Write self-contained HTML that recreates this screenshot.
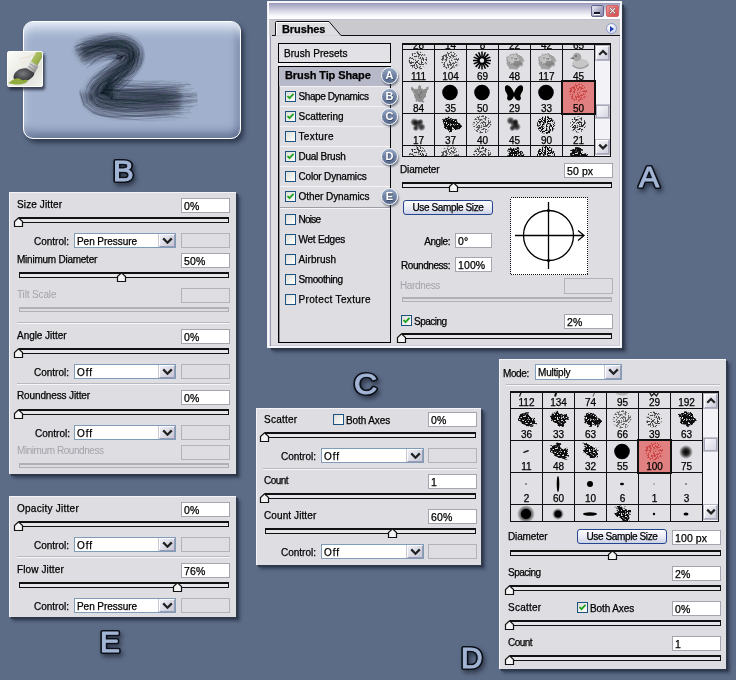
<!DOCTYPE html><html><head><meta charset="utf-8"><title>Brushes</title><style>
*{box-sizing:border-box;margin:0;padding:0}
html,body{width:736px;height:680px;overflow:hidden}
body{background:#5c6b86;font-family:"Liberation Sans",sans-serif;font-size:10px;letter-spacing:-0.1px;color:#000;position:relative;-webkit-text-stroke:.25px #000}
.abs,.panel,.lbl,.inp,.sel,.dis,.trk,.dtrk,.thumb,.cb,.sep,.btn,.big,.grid,.cell,.row{position:absolute}
.panel{background:#dddde2;box-shadow:2px 2px 1px #2f394c,4px 4px 3px rgba(35,45,65,.65);border-top:1px solid #f4f4f8;border-left:1px solid #f4f4f8}
.lbl{white-space:nowrap;line-height:12px;height:12px}
.lbl.r{text-align:right}
.lbl.g{color:#a3a3aa;-webkit-text-stroke:0}
.inp{background:#fff;border:1px solid #a5a5ad;line-height:14px;padding-left:2px;font-size:10.5px;letter-spacing:.1px;white-space:nowrap;overflow:hidden}
.sel{background:#fff;border:1px solid #7f9db9;line-height:14px;padding-left:2px;padding-top:1px;white-space:nowrap;overflow:hidden}
.sel i{position:absolute;right:0;top:0;bottom:0;width:16px;background:linear-gradient(135deg,#f0f0f7,#c6c6d6);border:1px solid #9a9ab2;border-top-color:#fdfdff;border-left-color:#fdfdff;box-shadow:-1px 0 0 #c8c8d4}
.sel i svg{position:absolute;left:1.5px;top:2px}
.dis{border:1px solid #b3b3ba;background:#dddde2}
.trk{height:6px;background:#e6e6ea;border:1px solid #111;border-top-width:2px}
.dtrk{height:5px;background:#dcdce0;border:1px solid #b0b0b6;border-top-width:2px}
.sep{height:2px;border-top:1px solid #b9b9c0;border-bottom:1px solid #f6f6fa}
.cb{width:11px;height:11px;border:1px solid #1c5180;background:linear-gradient(135deg,#dcdcd7,#fff)}
.btn{border:1px solid #24468f;border-radius:3px;background:linear-gradient(#fff,#e6e8f4 60%,#cdd2e6);text-align:center;line-height:12px;white-space:nowrap}
.big{font-weight:bold;font-size:28px;letter-spacing:0;line-height:28px;color:#9eafcd;-webkit-text-stroke:2.4px #1e2636;transform:scaleX(1.08);transform-origin:0 0;paint-order:stroke fill;text-shadow:2px 3px 3px rgba(20,28,45,.75)}
.grid{background:#111;overflow:hidden}
.cell{background:#e1e1e5;width:31px;height:31px;overflow:hidden}
.cell b{position:absolute;left:0;right:0;bottom:-1px;text-align:center;font-weight:normal;line-height:11px;height:11px;letter-spacing:0}
.cell svg{position:absolute;left:0;top:0}
.gd .cell b{bottom:0}
.cell.s{background:#e18080;outline:2px solid #111;z-index:2}
.row{left:0;height:20px;border-top:1px solid #f3f3f7;background:#dddde2}
.row .cb{left:5px;top:4px}
.row span{position:absolute;left:18.5px;top:4px;line-height:12px;white-space:nowrap}
.circ{-webkit-text-stroke:0;position:absolute;width:17px;height:17px;border-radius:50%;background:linear-gradient(#98a9c4,#7587a8 45%,#566a8e);border:1px solid #f3f5f9;color:#fff;font-weight:bold;font-size:11px;line-height:15px;text-align:center;letter-spacing:0;box-shadow:1px 2px 2px rgba(40,50,70,.55);text-shadow:.5px 1px 1px #33425f}
</style></head><body><div id="root" style="position:absolute;left:0;top:0;width:736px;height:680px;will-change:transform">
<svg width="0" height="0" style="position:absolute"><defs><radialGradient id="sg"><stop offset="0" stop-color="#000"/><stop offset=".45" stop-color="#000" stop-opacity=".8"/><stop offset="1" stop-color="#000" stop-opacity="0"/></radialGradient><filter id="sp1" x="0" y="0" width="31" height="31" filterUnits="userSpaceOnUse"><feTurbulence type="fractalNoise" baseFrequency="0.6" numOctaves="2" seed="2" result="n"/><feColorMatrix in="n" type="matrix" values="0 0 0 0 0 0 0 0 0 0 0 0 0 0 0 0 0 0 -14 6.9" result="t"/><feComposite in="SourceGraphic" in2="t" operator="in"/></filter><filter id="sp2" x="0" y="0" width="31" height="31" filterUnits="userSpaceOnUse"><feTurbulence type="fractalNoise" baseFrequency="0.65" numOctaves="2" seed="7" result="n"/><feColorMatrix in="n" type="matrix" values="0 0 0 0 0 0 0 0 0 0 0 0 0 0 0 0 0 0 -14 7.1" result="t"/><feComposite in="SourceGraphic" in2="t" operator="in"/></filter><filter id="sp3" x="0" y="0" width="31" height="31" filterUnits="userSpaceOnUse"><feTurbulence type="fractalNoise" baseFrequency="0.55" numOctaves="2" seed="11" result="n"/><feColorMatrix in="n" type="matrix" values="0 0 0 0 0 0 0 0 0 0 0 0 0 0 0 0 0 0 -12 6.1" result="t"/><feComposite in="SourceGraphic" in2="t" operator="in"/></filter><filter id="sp4" x="0" y="0" width="31" height="31" filterUnits="userSpaceOnUse"><feTurbulence type="fractalNoise" baseFrequency="0.7" numOctaves="2" seed="4" result="n"/><feColorMatrix in="n" type="matrix" values="0 0 0 0 0 0 0 0 0 0 0 0 0 0 0 0 0 0 -14 7.6" result="t"/><feComposite in="SourceGraphic" in2="t" operator="in"/></filter><filter id="sp5" x="0" y="0" width="31" height="31" filterUnits="userSpaceOnUse"><feTurbulence type="fractalNoise" baseFrequency="0.6" numOctaves="2" seed="9" result="n"/><feColorMatrix in="n" type="matrix" values="0 0 0 0 0 0 0 0 0 0 0 0 0 0 0 0 0 0 -14 6.0" result="t"/><feComposite in="SourceGraphic" in2="t" operator="in"/></filter><filter id="rg1" x="0" y="0" width="31" height="31" filterUnits="userSpaceOnUse"><feTurbulence type="fractalNoise" baseFrequency=".22" numOctaves="2" seed="3" result="w"/><feDisplacementMap in="SourceGraphic" in2="w" scale="6" xChannelSelector="R" yChannelSelector="G" result="d"/><feTurbulence type="fractalNoise" baseFrequency=".7" numOctaves="1" seed="8" result="n"/><feColorMatrix in="n" type="matrix" values="0 0 0 0 0 0 0 0 0 0 0 0 0 0 0 0 0 0 -10 6.6" result="t"/><feComposite in="d" in2="t" operator="in"/></filter><filter id="rg2" x="0" y="0" width="31" height="31" filterUnits="userSpaceOnUse"><feTurbulence type="fractalNoise" baseFrequency=".22" numOctaves="2" seed="8" result="w"/><feDisplacementMap in="SourceGraphic" in2="w" scale="7" xChannelSelector="R" yChannelSelector="G" result="d"/><feTurbulence type="fractalNoise" baseFrequency=".7" numOctaves="1" seed="13" result="n"/><feColorMatrix in="n" type="matrix" values="0 0 0 0 0 0 0 0 0 0 0 0 0 0 0 0 0 0 -10 6.6" result="t"/><feComposite in="d" in2="t" operator="in"/></filter><filter id="rg3" x="0" y="0" width="31" height="31" filterUnits="userSpaceOnUse"><feTurbulence type="fractalNoise" baseFrequency=".22" numOctaves="2" seed="14" result="w"/><feDisplacementMap in="SourceGraphic" in2="w" scale="5" xChannelSelector="R" yChannelSelector="G" result="d"/><feTurbulence type="fractalNoise" baseFrequency=".7" numOctaves="1" seed="19" result="n"/><feColorMatrix in="n" type="matrix" values="0 0 0 0 0 0 0 0 0 0 0 0 0 0 0 0 0 0 -10 6.6" result="t"/><feComposite in="d" in2="t" operator="in"/></filter><filter id="wob" x="0" y="0" width="31" height="31" filterUnits="userSpaceOnUse"><feTurbulence type="fractalNoise" baseFrequency=".3" numOctaves="2" seed="5" result="w"/><feDisplacementMap in="SourceGraphic" in2="w" scale="3.5" xChannelSelector="R" yChannelSelector="G"/></filter></defs></svg>
<div class="abs" style="left:23px;top:21px;width:218px;height:118px;border-radius:10px;border:1px solid #fff;background:#a1b1cd;box-shadow:3px 4px 4px rgba(30,40,60,.7),inset 0 13px 11px -6px rgba(235,242,252,.85),inset 0 4px 4px -2px rgba(240,245,253,.5),inset 0 -9px 8px -3px rgba(70,85,118,.6),inset 6px 0 6px -3px rgba(200,212,235,.7),inset -7px 0 7px -3px rgba(95,110,145,.5)"></div>
<svg class="abs" style="left:0;top:0" width="260" height="150" viewBox="0 0 260 150"><defs><filter id="bl" filterUnits="userSpaceOnUse" x="0" y="0" width="260" height="150"><feGaussianBlur stdDeviation=".4"/></filter><filter id="bl3" filterUnits="userSpaceOnUse" x="0" y="0" width="260" height="150"><feGaussianBlur stdDeviation="2.2"/></filter><mask id="sm" maskUnits="userSpaceOnUse" x="0" y="0" width="260" height="150"><g fill="none" stroke="#fff" stroke-linejoin="round" filter="url(#bl3)"><path d="M78 57C90 49 108 45 121 47C133 49 134 58 126 66C118 74 100 84 97 93" stroke-width="27"/><path d="M97 93C96 103 140 101 197 99l6 0" stroke-width="39"/><path d="M74 42L92 46 92 64 74 72Z" fill="#fff" stroke="none"/></g></mask></defs><g fill="none" stroke="#27303d" stroke-opacity=".33" stroke-linejoin="round" filter="url(#bl3)"><path d="M78 57C90 49 108 45 121 47C133 49 134 58 126 66C118 74 100 84 97 93" stroke-width="16"/><path d="M97 93C96 103 135 101 180 99.5" stroke-width="24"/></g><g mask="url(#sm)"><g fill="none" stroke="#10151e" stroke-opacity=".115" stroke-width=".8" stroke-linecap="round" stroke-linejoin="round" filter="url(#bl)"><path d="M83.4 56.3L85.3 55.0L88.7 53.7L92.5 53.0L95.8 51.0L99.5 49.8L103.0 47.9L106.7 46.9L110.4 45.5L114.1 45.7L117.7 46.1L121.1 46.5L123.7 48.0L125.7 49.4L127.3 50.5L127.7 52.5L128.3 53.6L129.1 54.7L129.9 56.0L129.4 57.6L129.9 59.8L129.2 61.9L128.1 64.2L126.5 66.5L124.1 68.4L121.7 70.6L118.3 72.0L115.1 73.9L111.4 75.3L108.1 77.2L105.5 80.0L102.8 82.4L100.5 85.0L98.2 87.3L97.6 90.5L96.9 93.0L98.2 94.8L100.4 96.5L104.4 97.8L109.9 99.1L116.8 100.6L125.2 101.7L134.8 102.8L145.6 103.0L157.3 103.3L169.8 102.7L183.1 102.0L197.1 100.6L197.0 99.9"/><path d="M110.5 70.2L108.2 71.1L104.8 73.1L101.3 75.0L97.8 76.9L93.6 78.4L90.0 80.9L87.6 84.7L83.9 91.9L87.5 103.0L93.8 107.5"/><path d="M79.4 49.6L82.4 49.1L86.5 48.2L90.4 47.1L94.7 47.1L98.6 46.1L102.6 45.5L106.6 45.5L110.3 44.2L114.1 43.7L117.9 43.3L121.6 43.3L125.2 43.1L128.4 43.9L130.6 46.2L132.9 48.1L133.4 51.1L133.6 53.7L133.7 56.1L132.8 58.4L131.7 60.5L130.5 62.7L129.2 65.1L127.7 67.7L125.9 70.4L123.5 72.8L121.2 75.8L118.5 78.4L115.3 80.4L112.6 82.9L109.5 84.7L106.1 86.0L103.8 88.1L101.6 90.0L100.6 92.2L99.8 93.2L100.1 93.4L102.0 93.1L105.3 94.0L110.5 94.3L117.3 93.8L125.4 94.5L134.9 94.5L145.4 95.0L157.1 95.0L169.6 95.7L182.9 96.0L196.9 95.3L196.9 95.4"/><path d="M93.7 61.9L95.3 61.2L98.5 60.3L101.8 59.7L105.0 59.5L108.2 59.1L111.2 59.1L114.1 59.3L116.8 58.3L119.1 58.5L120.6 58.2L121.7 57.5L122.3 57.2L122.0 57.4L122.1 56.7L121.5 56.3L120.6 55.8L119.7 55.4L119.6 55.4L118.8 55.6L118.1 56.2L116.8 56.9L115.8 59.0L113.8 60.9L112.1 64.0L109.6 66.6L106.6 68.9L103.1 70.9L99.9 73.2L96.4 75.4L92.7 77.5L88.5 79.7L85.1 83.3L80.5 91.6L83.9 105.8L92.6 112.4L100.1 114.9L107.6 116.2L115.8 116.1L124.8 116.0L134.8 115.2L145.7 114.7L157.6 114.8L170.2 115.3L173.6 114.8"/><path d="M79.6 51.5L83.0 50.4L86.9 49.3L90.6 47.5L94.6 46.6L98.4 45.2L102.2 43.2L106.2 42.5L110.2 41.7L114.2 41.1L118.1 41.1L121.9 41.7L125.2 43.1L127.9 44.8L130.2 46.8L131.4 49.4L132.8 51.4L133.1 53.8L134.4 56.1L133.8 58.6L133.8 61.4L132.9 64.2L131.6 67.0L129.7 69.6L127.4 72.1L124.8 74.5L121.2 75.8L118.1 77.9L117.5 78.1"/><path d="M85.4 59.0L86.7 58.1L90.2 57.1L93.4 55.7L97.1 55.3L100.5 54.4L104.1 53.9L107.6 54.1L110.9 54.2L114.1 53.3L117.1 53.6L119.9 53.4L122.1 53.0L123.9 53.0L125.7 52.7L126.2 53.8L126.2 54.7L126.7 55.2L125.9 56.0L125.1 56.6L124.0 57.3L123.1 58.2L122.1 59.4L120.7 60.8L119.7 63.4L117.8 65.8L115.5 68.4L113.0 71.1L110.2 73.7L106.6 75.2L103.3 77.4L100.5 79.9L96.9 81.5L93.8 83.8L90.8 86.6L88.0 92.2L89.9 101.2L95.8 105.8L102.0 107.3L108.7 107.7L116.3 107.8L125.1 107.4L134.8 107.6L145.6 107.5L157.4 107.2L161.1 106.9"/><path d="M85.2 55.0L85.2 54.9L88.7 53.6L92.4 52.8L96.1 52.0L99.9 51.8L103.6 51.4L107.2 51.0L110.7 51.0L114.1 50.9L117.4 49.9L120.5 49.9L123.1 49.8L125.2 50.4L126.9 51.1L128.6 51.8L128.7 53.4L128.8 54.7L128.8 56.0L127.7 57.2L127.0 58.5L125.3 59.5L124.2 61.1L122.8 62.8L121.2 65.1L119.3 67.7L117.0 70.4L114.5 73.2L112.0 76.1L108.7 78.0L105.9 80.5L102.7 82.2L99.1 83.7L96.8 86.2L94.2 88.5L92.1 92.6L93.0 98.8L97.9 101.6L103.1 102.8L109.2 104.0L116.7 103.3L125.2 103.8L134.8 103.4L145.6 103.4L157.3 103.6L169.1 103.3"/><path d="M81.4 61.8L84.2 60.5L87.3 59.2L90.2 57.2L93.7 56.6L97.3 56.2L100.9 55.8L104.2 54.6L107.6 54.0L110.9 53.4L114.1 53.1L117.2 52.7L120.2 52.0L122.5 51.9L124.3 52.3L125.5 53.0L125.9 54.0L126.1 54.7L125.2 55.5L124.1 55.9L124.1 56.4L123.2 57.0L123.2 58.3L122.1 59.4L121.2 61.3L119.9 63.6L118.1 66.2L115.7 68.7L112.9 71.0L109.7 73.0L106.8 75.5L103.3 77.3L99.3 78.6L95.7 80.4L92.9 83.1L90.2 86.2L87.4 92.2L90.5 100.7L96.2 105.0L102.2 106.4L108.8 107.2L116.4 107.1L125.1 107.2L134.8 107.8L145.6 108.4L157.4 108.0L170.0 108.8L177.1 108.6"/><path d="M83.7 62.2L84.7 61.4L87.2 59.0L90.2 57.2L93.0 54.6L96.7 53.9L100.1 52.3L103.7 51.9L107.3 51.8L110.8 52.6L114.1 53.1L117.1 53.5L119.9 53.9L121.7 54.4L123.1 54.7L124.5 54.3L125.3 54.5L126.0 54.8L127.1 55.1L127.6 56.0L127.4 57.1L126.1 58.2L124.8 59.3L123.0 60.1L121.2 61.3L119.5 63.1L117.1 65.0L114.5 67.1L111.9 69.7L108.9 72.0L106.1 74.6L103.3 77.3L101.0 80.4L97.9 82.5L95.6 85.3L92.9 87.8L89.9 92.4L91.8 99.8L96.4 104.5L101.9 107.8L108.6 108.6L116.2 109.3L125.0 109.5L134.8 109.1L145.6 107.6L157.4 107.0L169.9 106.3L178.7 105.9"/><path d="M79.0 44.2L79.9 43.9L84.2 42.6L88.3 41.0L93.0 41.2L97.5 41.1L101.7 40.5L106.1 41.4L110.1 40.9L114.2 41.3L118.1 41.2L122.0 40.7L125.7 41.3L129.3 41.9L132.7 43.4L136.1 45.3L138.0 48.8L138.8 52.6L139.0 56.2L138.0 59.6L136.7 62.7L134.4 65.1L132.3 67.6L129.8 69.7L127.5 72.2L125.1 74.9L122.9 78.0L120.1 80.5L117.5 83.3L115.4 86.4L112.6 88.4L110.4 90.7L108.7 92.8L107.0 93.3"/><path d="M84.9 57.5L86.0 56.4L89.0 54.3L92.6 53.2L96.1 52.1L99.8 51.2L103.6 51.1L107.2 50.9L110.8 51.1L114.1 51.6L117.2 52.4L120.2 51.7L122.4 52.3L124.4 52.1L125.7 52.7L127.4 52.8L128.4 53.5L128.9 54.7L128.8 56.0L127.9 57.3L127.3 58.7L125.4 59.6L124.4 61.2L122.4 62.5L120.5 64.3L118.2 66.4L115.4 68.3L112.9 71.1L110.7 74.3L107.9 77.0L105.0 79.4L102.0 81.5L99.2 83.7L96.5 86.0L94.0 88.4L91.9 92.6L92.8 99.0L97.2 103.0L102.5 105.4L108.9 106.4L116.4 106.3L125.1 106.1L134.8 106.1L145.6 104.6L157.3 104.7L169.9 104.3L173.9 104.2"/><path d="M86.1 60.3L87.4 59.4L90.8 58.7L93.9 57.0L97.2 55.6L100.5 54.2L103.7 51.9L107.3 51.4L110.7 50.3L114.1 49.7L117.4 49.7L120.5 50.2L122.8 51.0L124.1 52.6L125.1 53.5L125.0 54.8L124.7 55.4L124.9 55.6L125.1 55.9L125.1 56.6L125.4 57.9L126.0 60.0L124.8 61.6L123.7 63.7L122.1 66.1L119.3 67.7L116.3 69.5L113.1 71.3L109.4 72.6L105.6 74.0L102.6 76.5L99.1 78.4L96.5 81.2L94.7 84.5L92.3 87.4L91.2 92.5L93.1 98.8L97.7 101.9L102.9 103.8L109.1 104.7L116.4 106.4L125.0 107.6L134.8 108.4L145.6 108.5L157.4 108.9L170.0 108.3L173.6 107.8"/><path d="M80.7 58.5L82.4 57.3L85.1 54.8L88.5 53.2L92.2 52.1L95.8 51.0L99.6 50.3L103.5 50.8L107.2 50.8L110.7 50.5L114.1 50.6L117.4 50.7L120.4 50.6L123.0 50.2L125.3 50.1L127.2 50.7L128.3 52.0L129.8 52.9L129.9 54.5L129.8 56.0L129.0 57.5L127.8 58.9L126.2 60.1L124.9 61.6L123.3 63.4L121.4 65.3L119.3 67.6L116.7 70.0L114.5 73.2L111.9 75.9L108.9 78.2L106.0 80.5L102.9 82.4L100.4 84.9L97.4 86.7L94.8 88.9L92.9 92.7L93.2 98.6L97.9 101.6L103.0 103.1L109.2 104.1L116.6 103.8L125.2 104.0L134.8 103.2L145.5 102.5L157.2 102.1L169.8 102.6L173.2 102.1"/><path d="M82.4 56.8L85.4 55.3L88.5 53.0L91.7 50.7L95.2 48.6L99.0 47.8L102.9 47.1L106.7 46.3L110.4 45.8L114.1 46.4L117.6 47.3L120.8 48.4L123.3 49.3L125.3 50.2L126.6 51.5L127.8 52.4L129.7 52.9L130.2 54.4L131.5 56.1L131.4 58.1L130.7 60.1L129.5 62.1L128.4 64.4L125.9 65.9L123.0 67.1L119.9 68.4L117.4 70.9L114.3 72.9L111.1 74.8L108.8 78.1L106.1 80.7L104.9 82.4"/><path d="M81.4 44.6L84.3 42.9L88.7 41.9L93.0 41.2L97.6 41.6L101.9 41.5L106.1 41.3L110.2 41.2L114.2 41.7L118.0 41.5L121.9 41.6L125.7 41.4L129.2 42.1L132.8 43.2L135.4 45.9L138.1 48.7L138.8 52.6L138.3 56.2L137.3 59.4L136.2 62.4L134.1 64.9L131.5 66.9L129.4 69.4L127.0 71.7L124.7 74.3L122.5 77.5L119.7 79.9L117.2 82.8L115.0 85.9L112.5 88.3L110.4 90.6L108.0 92.2L105.8 93.3L105.3 94.9L104.6 93.6L104.0 90.4L103.7 89.6L106.1 90.6L111.0 90.5L117.5 90.2L125.6 90.0L134.9 90.0L145.4 89.5L156.9 88.7L163.5 88.8"/><path d="M98.6 36.4L101.0 36.4L105.4 35.4L109.7 34.1L114.2 33.2L118.7 32.6L123.3 33.3L128.1 33.4L132.7 35.1L136.2 38.7L140.1 42.0L141.7 47.0L143.4 51.6L142.9 56.3L142.3 60.6L140.5 64.2L139.1 68.0L137.3 71.6L135.0 74.9L132.6 78.0L130.3 81.3L127.3 83.7L124.4 86.2L121.5 88.5L118.3 90.2L115.9 92.3L113.5 94.0L112.2 96.2L111.1 97.4L111.3 98.4L112.9 94.3L111.8 84.5L108.4 80.1L108.9 79.4L112.5 79.0L118.3 79.8L125.8 80.3L134.9 80.4L145.2 81.1L156.7 81.6L169.1 81.5L171.8 81.7"/><path d="M82.8 63.2L85.2 62.2L88.2 61.2L91.2 59.8L94.5 58.9L97.6 57.2L100.8 55.6L104.2 54.6L107.5 53.3L110.8 52.4L114.1 51.3L117.3 51.4L120.3 51.4L122.2 52.8L123.5 53.8L124.4 54.4L123.9 55.7L124.1 55.7L123.9 55.8L123.3 55.9L124.0 56.4L124.1 57.3L124.0 58.8L124.0 60.9L122.4 62.5L121.0 64.8L118.5 66.7L115.6 68.6L112.2 70.0L108.7 71.7L105.3 73.7L101.9 75.6L98.4 77.6L95.4 80.1L93.1 83.3L91.0 86.7L88.7 92.3L91.4 100.0L96.6 104.2L102.3 106.0L108.8 107.1L116.4 107.6L125.0 108.4L134.8 109.4L145.7 110.2L157.4 110.5L170.1 110.4L183.4 109.7L190.6 109.8"/><path d="M81.6 55.6L84.7 54.0L87.6 51.0L91.1 49.1L94.9 47.8L98.7 46.6L102.6 45.5L106.5 45.2L110.4 45.6L114.1 46.7L117.6 47.2L120.7 48.6L123.3 49.3L125.3 50.2L127.7 50.1L129.3 51.1L131.1 52.2L132.0 54.0L132.8 56.1L133.1 58.5L131.8 60.6L130.7 62.8L128.5 64.5L126.2 66.2L123.2 67.3L120.6 69.3L117.8 71.4L115.1 73.8L112.1 76.1L109.3 78.7L106.9 81.6L104.5 84.2L102.6 87.0L101.2 89.7L99.9 91.8L98.1 93.1L98.0 95.0L100.1 97.0L104.0 99.4L109.7 100.6L116.8 101.2L125.2 101.4L134.8 101.0L139.8 101.4"/><path d="M91.1 64.1L92.7 63.3L95.5 61.8L98.7 60.9L102.0 60.7L105.2 60.5L108.3 60.0L111.3 59.7L114.1 59.5L116.7 59.2L119.0 59.2L120.5 58.4L121.2 58.6L122.0 57.6L121.9 57.4L121.2 57.1L120.7 56.5L119.5 55.8L118.9 55.2L118.2 54.8L118.0 55.1L117.8 56.0L116.6 56.7L115.4 58.5L113.7 60.8L111.7 63.6L109.0 65.9L106.1 68.3L103.2 71.0L99.3 72.5L95.7 74.7L91.8 76.7L87.6 79.0L83.7 82.4L79.8 91.6L83.8 105.9L91.9 113.8L100.0 115.6L107.6 116.5L115.7 117.0L124.8 116.3L134.8 116.0L141.7 116.5"/><path d="M111.3 36.0L114.2 36.8L118.4 36.6L122.5 37.9L126.2 39.5L129.6 41.3L132.3 43.9L134.7 46.5L136.8 49.4L138.7 52.6L139.6 56.2L140.6 60.2L139.7 63.9L137.7 67.1L136.3 70.7L133.4 73.3L130.1 75.2L127.0 77.2L123.5 78.8L120.5 81.0L117.2 82.9L114.1 84.8L112.4 88.2L110.2 90.4L109.5 93.6L108.4 95.3L108.9 97.0L110.2 94.1L108.9 86.6L106.4 84.1L107.4 85.5L111.6 86.3L117.7 87.6L125.6 89.2L134.9 89.7L145.4 88.8L156.9 89.2L169.3 87.8L181.9 86.6"/><path d="M108.1 50.3L110.7 50.6L114.1 50.0L117.3 50.7L120.1 52.5L121.9 53.7L123.1 54.7L124.1 54.9L124.3 55.4L124.1 55.7L125.1 55.5L125.6 55.9L126.6 57.0L127.0 58.5L126.2 60.1L124.8 61.6L123.0 63.1L120.8 64.7L118.1 66.2L114.9 67.7L111.8 69.5L108.4 71.4L105.0 73.3L102.4 76.2L99.4 78.7L96.8 81.4L94.7 84.6L93.5 88.1L91.1 92.5L92.9 98.9L97.5 102.3L102.6 104.9L108.9 106.6L116.3 107.9L125.0 109.8L134.8 109.7L145.7 110.1L157.4 108.8L170.0 107.8L183.3 107.5L192.3 106.7"/><path d="M127.1 57.3L127.3 58.7L127.2 60.7L125.7 62.3L124.2 64.2L121.8 65.7L119.0 67.4L115.9 69.0L112.6 70.6L109.1 72.3L105.6 74.0L102.6 76.5L99.9 79.2L97.5 82.1L95.9 85.5L93.8 88.3L93.1 92.7L94.6 97.6L98.1 101.1L102.9 103.5L109.1 104.9L116.4 106.6L125.1 107.3L134.8 108.6L145.6 108.2L157.4 107.8L169.1 107.1"/><path d="M90.7 68.3L91.3 67.5L93.2 64.6L96.1 63.3L98.8 61.3L102.0 60.8L105.0 59.5L108.2 59.5L111.3 60.3L114.1 61.1L116.6 61.0L118.6 61.7L119.6 61.4L120.2 60.7L120.3 59.9L120.1 59.0L120.0 57.7L120.0 56.6L119.6 55.8L119.1 55.3L118.9 55.1L118.5 55.4L117.4 55.6L116.0 56.1L114.1 57.1L112.4 59.2L110.1 61.4L107.4 63.8L104.8 66.6L101.9 69.3L98.3 71.4L94.7 73.6L91.5 76.4L87.7 79.1L83.8 82.5L79.3 91.5L82.4 106.9L91.4 114.9L99.3 118.5L107.2 119.3L115.5 120.6L124.7 119.9L134.8 119.5L145.8 119.1L157.6 117.7L170.3 117.0L183.7 117.2L186.7 116.9"/><path d="M68.5 40.7L72.3 39.6L77.3 38.5L82.3 37.9L87.1 37.3L91.8 37.1L96.5 36.6L100.9 35.9L105.3 34.5L109.8 34.4L114.2 33.2L118.7 32.2L123.4 32.7L127.9 34.0L132.2 36.1L136.5 38.3L139.8 42.2L141.6 47.0L142.7 51.7L142.2 56.3L141.7 60.4L141.1 64.5L139.6 68.3L137.7 71.9L135.3 75.2L133.3 78.8L130.5 81.5L127.7 84.2L124.2 85.8L121.4 88.3L118.0 89.7L115.6 92.0L113.4 93.9L112.1 96.1L111.3 97.6L111.5 98.5L113.1 94.4L111.8 84.4L108.6 79.6L108.9 79.5L112.5 79.4L118.3 79.7L125.8 80.0L134.9 80.7L145.3 81.9L156.7 81.6L169.2 82.2L182.4 82.2L188.0 81.8"/><path d="M128.3 60.7L128.0 61.2L125.6 62.2L124.0 64.1L121.4 65.3L119.0 67.3L117.0 70.3L113.9 72.4L111.7 75.6L109.2 78.5L106.6 81.2L104.1 83.8L101.3 85.7L99.0 87.9L96.3 89.7L94.2 92.8L95.5 96.9L98.5 100.4L103.2 102.3L109.3 103.1L116.6 103.6L125.2 103.4L134.8 103.2L145.5 102.1L157.2 101.1L169.8 100.6L183.1 100.4L197.1 100.4L197.0 100.2"/><path d="M73.1 42.5L73.6 41.9L78.1 40.2L82.5 38.5L86.9 36.8L91.3 35.1L95.7 33.5L100.5 33.5L105.1 32.8L109.6 32.2L114.2 32.6L118.7 33.1L123.0 35.0L127.2 36.4L131.3 37.9L134.6 40.9L137.8 43.9L141.3 47.2L142.8 51.7L144.5 56.3L144.9 61.1L143.4 65.5L141.8 69.6L138.9 72.8L135.9 75.7L132.9 78.3L129.2 79.9L125.6 81.5L122.6 83.7L119.6 85.9L117.0 88.5L115.4 91.7L114.0 94.6L113.1 97.1L112.9 98.8L114.1 100.0L116.4 94.6L112.9 83.6L108.7 79.5L108.8 79.6L112.2 81.5L118.1 82.7L125.7 83.1L134.9 83.8L145.3 83.4L156.7 82.6L164.8 81.5"/><path d="M88.8 67.4L90.4 65.6L92.6 63.2L95.1 60.7L98.1 59.0L101.1 57.1L104.5 56.2L107.7 55.2L111.0 55.6L114.1 55.9L116.9 57.0L119.2 58.0L120.5 58.3L121.2 58.7L121.1 58.9L121.2 58.0L121.1 57.2L121.8 56.2L122.5 55.9L122.5 56.0L122.1 56.5L121.5 57.2L120.7 58.3L119.1 59.2L117.2 60.5L114.4 61.7L111.6 63.3L108.2 64.9L105.8 67.9L102.1 69.6L99.4 72.7L96.5 75.6L93.8 78.6L90.5 81.3L88.4 85.1L84.8 92.0L87.2 103.2L94.0 109.6L100.6 112.9L107.7 115.6L115.7 116.6L124.8 117.1L134.8 117.2L145.7 115.8L157.6 115.5L170.2 114.5L170.4 113.9"/><path d="M86.3 55.2L88.6 53.3L92.0 51.6L95.4 49.6L99.2 48.4L102.9 47.0L106.6 46.0L110.4 46.0L114.1 46.0L117.6 47.1L120.9 47.7L123.3 49.2L125.1 50.5L126.7 51.4L128.1 52.1L129.1 53.2L129.7 54.5L131.0 56.1L130.9 58.0L130.9 60.2L129.6 62.2L128.2 64.3L126.1 66.1L123.7 67.9L121.0 69.8L117.5 71.0L114.2 72.7L111.0 74.7L108.4 77.6L105.8 80.3L102.9 82.5L101.1 85.6L99.7 88.5L98.3 90.9L98.0 93.1L98.0 95.0L100.1 97.2L104.0 99.1L109.7 100.4L116.8 101.7L125.2 103.0L134.8 103.6L145.5 102.7L157.2 101.9L169.8 100.9L172.9 101.4"/><path d="M135.3 53.2L134.9 53.4L136.0 56.2L136.3 59.2L135.6 62.2L134.9 65.4L132.9 68.1L131.5 71.4L128.4 73.3L125.7 75.6L122.2 77.1L119.1 79.1L115.6 80.7L112.7 83.0L110.0 85.3L107.5 87.5L105.6 89.8L104.9 92.6L104.8 94.6L105.5 93.7L105.4 89.4L104.5 88.1L106.5 88.9L111.1 90.0L117.5 91.3L125.5 92.0L134.9 92.6L145.4 93.0L157.0 93.4L169.4 92.8"/><path d="M82.7 59.7L83.3 59.0L86.3 57.2L89.6 55.8L93.0 54.6L96.9 54.7L100.4 53.9L103.9 53.1L107.5 53.6L110.9 52.9L114.1 52.4L117.3 51.7L120.3 51.1L122.5 51.8L124.8 51.2L126.2 52.1L126.6 53.4L127.5 54.0L126.9 55.1L126.3 56.0L125.7 56.8L124.3 57.4L123.9 58.7L123.4 60.4L121.9 62.0L120.7 64.5L118.3 66.5L116.0 69.0L113.3 71.6L111.0 74.7L107.4 76.3L104.2 78.4L100.7 80.1L97.6 82.2L94.5 84.4L91.9 87.2L89.0 92.3L91.6 99.9L96.5 104.5L102.6 105.1L108.9 106.4L116.5 105.7L125.1 105.5L134.8 106.1L145.6 106.0L157.3 106.4L169.9 106.4L174.8 106.6"/><path d="M92.2 60.7L94.7 59.5L98.1 59.0L101.4 58.3L104.7 57.5L107.9 57.2L111.1 56.9L114.1 55.8L117.0 55.5L119.6 55.5L121.6 54.8L122.9 55.1L123.8 55.2L124.0 55.7L123.3 56.1L122.6 56.1L121.6 55.9L121.5 55.8L121.2 56.1L120.6 56.7L120.2 57.9L119.3 59.4L117.8 61.2L116.0 63.6L114.0 66.4L111.4 69.0L108.5 71.4L105.0 73.3L101.2 74.8L97.7 76.8L93.5 78.3L90.2 81.0L87.1 84.4L83.8 91.9L87.3 103.2L94.1 109.4L101.0 111.3L108.2 111.5L116.1 112.0L124.9 111.5L134.8 111.5L145.7 111.6L157.5 111.8L170.1 112.5L183.5 112.8L191.5 113.0"/><path d="M87.0 57.4L89.5 55.6L92.9 54.3L96.5 53.5L100.2 53.0L103.9 52.9L107.4 52.3L110.9 53.2L114.1 53.4L117.2 53.4L119.9 53.6L122.2 52.7L123.8 53.2L125.2 53.4L126.9 53.2L127.3 54.1L127.2 55.1L127.6 56.0L126.3 56.9L125.2 57.8L124.4 59.0L123.2 60.3L121.5 61.6L119.3 62.9L117.4 65.4L115.2 68.0L112.7 70.7L109.7 73.1L107.3 76.2L104.5 78.8L100.9 80.3L98.3 82.9L95.3 85.0L91.9 87.2L89.8 92.4L91.4 100.0L96.1 105.3L102.1 106.8L108.7 107.6L116.3 108.4L125.1 107.4L134.8 107.5L145.6 106.4L157.3 105.8L169.9 105.4L183.1 105.6"/><path d="M76.2 47.2L76.2 46.4L80.5 45.2L84.9 44.3L89.2 43.6L93.8 44.0L98.1 43.6L102.2 43.2L106.2 42.1L110.1 40.9L114.2 40.4L118.2 39.5L122.1 40.2L126.1 40.0L129.6 41.3L132.3 43.9L135.2 46.2L135.9 49.8L136.9 53.0L136.3 56.2L136.0 59.1L134.2 61.6L133.5 64.6L132.1 67.4L130.2 70.1L128.2 73.0L126.1 76.1L123.5 78.8L120.3 80.8L117.6 83.4L114.1 84.8L111.5 87.1L108.9 89.0L106.5 90.7L105.0 92.6L103.9 94.1L104.0 93.6L104.0 90.4L104.0 89.0L106.5 88.9L111.2 89.3L117.6 89.8L125.6 89.7L134.9 90.3L145.4 90.4L156.9 90.5L169.4 90.9L175.4 91.7"/><path d="M79.6 52.7L79.7 52.6L82.8 49.9L86.5 48.3L90.2 46.4L94.1 45.0L98.2 44.2L102.3 43.9L106.4 44.1L110.3 44.0L114.1 45.3L117.8 45.1L121.1 46.5L124.2 46.4L126.6 47.6L129.3 47.9L131.8 49.0L133.4 51.1L134.5 53.5L134.9 56.1L134.5 58.8L133.2 61.2L132.2 63.7L129.7 65.5L127.4 67.4L124.4 68.7L121.9 70.9L119.0 72.9L116.3 75.4L113.5 78.1L111.3 81.2L108.9 84.0L106.9 86.9L105.3 89.6L103.0 91.0L102.1 93.1L101.2 93.4L100.0 93.5L101.4 94.4L104.7 96.4L110.1 96.9L117.0 97.7L125.3 98.1L134.8 97.0L145.5 96.7L157.1 96.2L167.5 94.7"/><path d="M83.3 51.2L83.6 51.5L86.8 48.9L90.5 47.3L94.1 45.1L98.2 44.3L102.1 42.9L106.2 42.3L110.2 42.3L114.2 42.1L117.9 43.5L121.4 44.7L124.2 46.1L126.9 46.9L129.0 48.3L131.0 49.7L132.1 51.7L133.9 53.6L134.9 56.1L135.0 58.9L134.4 61.7L133.4 64.5L131.4 66.9L128.6 68.6L125.8 70.3L123.0 72.3L120.0 74.2L116.3 75.5L113.4 77.9L110.8 80.6L108.5 83.5L106.1 86.0L104.8 89.1L103.8 91.7L103.2 93.7L102.9 93.5L102.1 91.9L102.5 92.2L105.2 94.3L110.3 95.6L117.1 96.7L125.3 97.6L134.8 97.8L145.5 97.5L157.1 96.6L169.6 95.6L182.9 94.4L196.8 93.6L196.8 92.9"/><path d="M74.3 42.5L78.3 40.6L82.4 38.3L87.0 37.1L91.6 36.3L96.4 36.6L101.1 36.8L105.5 36.4L109.9 36.8L114.2 37.1L118.3 38.0L122.5 37.8L126.6 38.3L130.8 38.9L134.6 40.8L138.2 43.6L141.2 47.2L143.4 51.6L143.2 56.3L142.1 60.5L140.6 64.3L137.6 67.0L135.3 70.0L132.6 72.5L129.7 74.8L127.1 77.3L126.6 78.0"/><path d="M81.8 61.9L83.7 59.6L86.4 57.4L89.6 55.7L92.9 54.3L96.7 54.1L100.3 53.3L103.9 52.7L107.5 53.3L110.9 53.3L114.1 52.8L117.1 53.4L120.0 52.8L122.0 53.4L124.2 52.5L125.6 52.8L126.8 53.3L126.9 54.3L127.0 55.1L126.9 56.0L126.5 57.0L125.2 57.8L123.8 58.6L123.0 60.1L120.9 61.0L119.2 62.9L117.2 65.1L115.1 67.9L112.7 70.7L109.8 73.1L107.3 76.2L104.2 78.5L101.3 80.7L98.1 82.7L94.6 84.5L92.2 87.4L88.8 92.3L90.9 100.4L96.0 105.5L102.0 107.4L108.7 108.0L116.3 108.2L125.1 107.1L134.8 106.8L145.6 106.5L157.3 106.2L169.9 106.2L183.3 106.5L183.5 106.3"/><path d="M134.8 60.2L134.7 61.8L133.5 64.6L131.9 67.2L130.4 70.4L128.0 72.8L126.2 76.2L123.2 78.3L120.4 80.8L117.5 83.2L114.3 85.0L111.4 87.0L108.4 88.5L106.1 90.3L104.6 92.3L103.4 93.8L103.6 93.6L104.1 90.3L103.8 89.5L106.4 89.5L111.1 89.8L117.6 89.8L125.6 89.6L134.9 89.8L145.4 90.6L156.9 90.6L169.5 91.5L176.2 91.4"/><path d="M86.4 54.6L88.7 53.6L92.3 52.3L95.9 51.3L99.9 51.6L103.6 51.3L107.2 51.2L110.7 50.8L114.1 50.7L117.3 51.0L120.3 50.9L122.9 50.6L125.2 50.3L126.8 51.2L128.4 51.9L129.3 53.1L129.4 54.6L129.1 56.0L128.0 57.3L126.8 58.5L125.3 59.6L124.7 61.5L122.8 62.8L120.7 64.6L118.9 67.2L116.7 69.9L114.0 72.5L111.8 75.8L108.5 77.7L105.6 80.1L102.6 82.2L99.8 84.4L96.7 86.2L94.6 88.7L91.9 92.6L93.4 98.5L97.4 102.6L102.8 104.1L109.2 104.3L116.6 104.6L125.2 103.9L134.8 103.6L145.6 102.9L157.3 103.3L169.8 103.2L183.2 103.3L185.4 102.6"/><path d="M75.7 50.6L78.3 50.2L82.1 48.6L85.9 46.9L90.0 45.9L93.8 43.9L97.9 43.0L101.9 41.2L105.9 39.8L110.1 39.9L114.2 38.9L118.2 39.5L122.0 41.0L125.5 41.8L128.3 44.1L130.4 46.4L132.4 48.5L134.2 50.7L135.0 53.4L135.7 56.1L136.2 59.2L135.9 62.3L135.2 65.6L133.5 68.5L130.8 70.7L128.1 72.9L125.6 75.5L122.2 77.1L118.8 78.7L115.1 80.1L112.5 82.8L109.9 85.2L107.4 87.4L106.2 90.5L104.7 92.4L104.9 94.7L105.3 93.7L104.8 89.8L104.5 88.1L106.4 89.5L111.0 90.5L117.5 91.6L125.5 92.5L134.9 93.9L145.4 94.0L157.0 93.5L169.5 93.4L177.7 92.1"/><path d="M84.4 51.0L86.8 49.0L90.6 47.6L94.1 45.1L98.3 44.5L102.2 43.3L106.3 43.1L110.3 42.7L114.1 42.9L117.9 43.8L121.3 45.4L124.3 45.9L126.7 47.2L128.5 48.9L130.4 50.2L132.1 51.7L133.6 53.7L134.7 56.1L134.6 58.8L134.1 61.5L132.8 64.1L130.8 66.4L128.6 68.5L125.7 70.2L122.6 71.7L119.3 73.4L116.5 75.7L113.1 77.4L110.7 80.5L108.2 83.2L106.1 86.0L104.9 89.2L103.1 91.1L102.1 93.0L102.3 93.4L101.8 92.1L101.9 93.5L105.0 95.3L110.2 96.8L117.1 97.5L125.3 98.3L134.8 97.8L145.5 97.4L157.1 96.7L169.6 95.9L182.9 94.2L194.5 94.2"/><path d="M85.9 54.3L88.5 53.1L92.3 52.6L96.0 51.4L99.8 51.1L103.3 49.5L107.0 49.3L110.6 48.0L114.1 46.7L117.6 47.1L121.1 46.4L124.1 46.6L126.4 47.9L128.3 49.3L129.1 51.3L129.0 53.3L128.6 54.8L128.6 56.0L128.1 57.3L127.8 58.9L127.4 60.8L126.9 63.2L125.7 65.7L124.1 68.3L121.5 70.5L119.1 73.1L115.7 74.7L112.7 77.0L109.1 78.5L105.8 80.3L102.5 82.1L100.0 84.5L97.6 86.8L95.5 89.3L95.0 92.8L96.2 96.4L99.5 98.4L104.1 98.7L109.8 99.9L116.9 100.1L125.2 100.9L134.8 101.1L145.5 101.9L157.2 102.3L169.8 102.1L170.4 102.4"/><path d="M84.6 46.3L85.5 45.8L89.5 44.4L93.2 41.8L97.3 40.5L101.7 40.2L105.8 38.7L110.0 38.7L114.2 38.8L118.2 39.3L122.1 40.5L125.4 42.1L128.2 44.2L130.9 45.7L133.0 48.0L135.4 50.1L136.6 53.1L137.7 56.2L137.8 59.5L137.1 62.8L136.5 66.4L133.8 68.8L131.5 71.4L128.7 73.6L125.4 75.2L122.3 77.2L118.9 79.0L115.5 80.6L112.8 83.2L110.4 85.8L109.0 89.1L107.7 91.9L106.8 94.0L106.5 95.6L107.1 93.8L106.3 88.7L104.7 87.7L106.6 88.6L111.1 89.8L117.5 91.6L125.5 91.8L134.9 92.7L145.4 92.2L157.0 91.5L164.4 91.4"/><path d="M80.5 48.8L82.0 48.2L86.5 48.2L90.4 47.0L94.5 46.2L98.5 45.7L102.6 45.6L106.4 44.2L110.3 43.5L114.1 43.0L118.0 42.1L121.8 42.3L125.2 43.1L128.2 44.1L130.8 45.9L132.6 48.3L133.8 50.9L133.7 53.7L133.4 56.1L132.9 58.4L132.2 60.8L131.1 63.1L130.4 66.0L128.5 68.4L126.4 71.0L124.7 74.3L121.9 76.7L118.4 78.3L115.8 81.1L112.2 82.4L109.3 84.4L106.7 86.7L103.8 88.2L102.4 90.6L100.5 92.1L100.9 93.3L100.9 92.8L102.3 92.6L105.7 92.2L110.7 92.8L117.4 92.9L125.4 93.9L134.9 93.7L145.4 94.2L157.0 94.7L163.3 95.6"/><path d="M82.2 55.4L84.7 53.9L87.7 51.2L91.2 49.1L95.0 48.2L98.8 46.6L102.8 46.7L106.7 46.5L110.5 46.4L114.1 47.0L117.6 47.5L120.7 49.0L123.3 49.2L125.5 49.7L127.6 50.2L129.4 51.0L130.5 52.5L132.4 54.0L132.5 56.1L132.2 58.3L131.4 60.4L129.8 62.3L127.9 64.1L125.7 65.7L122.7 66.8L120.0 68.6L117.4 70.9L114.9 73.6L111.8 75.8L109.7 79.2L107.3 82.1L104.7 84.5L102.4 86.8L100.7 89.3L99.4 91.5L97.2 93.0L97.9 95.1L99.8 97.6L103.7 100.2L109.6 101.4L116.7 102.1L125.2 101.5L134.8 101.9L145.5 100.7L157.2 99.4L166.5 99.4"/><path d="M86.2 61.4L87.9 60.4L90.4 57.9L93.6 56.3L96.8 54.4L100.3 53.2L103.8 52.2L107.3 51.6L110.8 52.5L114.1 53.0L117.1 53.6L119.8 54.4L121.6 54.7L123.0 54.8L123.6 55.5L124.8 54.9L125.9 54.8L125.8 55.4L126.7 56.0L126.5 57.0L126.2 58.2L125.2 59.5L123.5 60.5L121.2 61.2L119.3 62.9L116.3 64.1L114.0 66.5L110.9 68.4L108.6 71.6L105.6 74.1L103.1 77.1L100.4 79.8L97.6 82.2L95.2 84.9L92.5 87.5L90.2 92.4L91.4 100.1L96.2 105.0L101.8 108.3L108.5 109.1L116.2 110.3L125.0 110.9L134.8 110.2L145.6 109.1L157.4 108.9L162.3 107.6"/><path d="M84.4 53.4L84.4 53.3L88.4 52.9L92.0 51.7L95.9 51.4L99.6 50.3L103.4 49.9L107.0 49.2L110.6 47.9L114.1 46.9L117.6 46.7L121.1 46.7L124.1 46.5L126.5 47.7L128.2 49.3L129.2 51.2L129.8 52.9L129.2 54.6L129.3 56.0L128.2 57.3L128.3 59.1L127.8 61.1L127.1 63.4L125.8 65.8L124.0 68.3L121.4 70.3L119.0 73.0L116.1 75.2L112.5 76.7L109.1 78.5L105.9 80.4L103.0 82.7L100.1 84.6L97.6 86.8L96.0 89.6L94.9 92.8L96.6 96.1L99.8 97.7L104.1 99.0L109.8 99.4L116.9 99.7L125.3 100.2L134.8 100.8L145.5 101.4L157.2 101.2L169.8 102.3L183.1 102.0L191.6 101.8"/><path d="M127.9 61.8L126.5 63.0L124.7 64.7L122.1 66.1L119.9 68.4L117.1 70.5L114.7 73.3L112.2 76.3L109.3 78.7L107.0 81.7L104.7 84.5L102.1 86.5L100.0 88.7L97.5 90.4L95.2 92.8L95.6 96.8L98.9 99.6L103.6 101.0L109.5 102.1L116.7 102.3L125.2 102.3L134.8 102.0L145.5 100.6L157.2 100.3L169.7 99.7L183.0 99.5L197.0 99.6L197.0 99.3"/><path d="M80.5 47.7L81.5 47.2L85.5 45.9L89.4 44.2L93.6 43.2L97.9 43.0L102.2 43.3L106.3 43.3L110.3 43.4L114.1 43.6L117.9 43.6L121.5 44.0L124.8 44.3L128.2 44.3L130.9 45.8L133.8 47.3L135.2 50.2L136.3 53.1L137.0 56.2L135.5 59.0L134.3 61.6L132.6 64.0L129.8 65.6L127.6 67.6L125.4 69.9L123.1 72.4L120.5 74.8L118.2 78.0L115.6 80.7L113.1 83.6L110.6 86.0L108.2 88.3L106.4 90.6L104.6 92.3L102.7 93.4L101.9 93.4L101.5 92.3L102.0 93.3L105.2 94.2L110.5 94.6L117.3 94.5L125.4 94.4L134.9 93.3L145.4 93.3L157.0 92.1L169.5 92.6L178.2 92.2"/><path d="M76.4 50.7L78.5 50.4L82.1 48.5L86.1 47.4L90.4 47.0L94.5 46.4L98.6 46.0L102.6 45.6L106.5 45.3L110.3 44.3L114.1 43.9L117.9 43.9L121.7 42.9L125.2 43.1L128.0 44.6L130.9 45.7L132.9 48.1L134.0 50.8L134.1 53.6L134.0 56.1L132.7 58.4L132.3 60.8L130.3 62.6L129.4 65.3L127.6 67.6L126.0 70.5L123.5 72.9L121.3 75.9L118.4 78.3L115.6 80.8L112.4 82.6L109.4 84.6L106.9 86.8L103.9 88.2L101.5 89.9L100.6 92.2L100.0 93.3L99.8 93.6L101.6 94.0L105.4 93.6L110.5 94.5L117.2 94.7L125.4 94.0L134.9 94.6L145.4 94.3L157.1 95.1L169.6 95.2L181.4 95.4"/><path d="M86.2 64.7L86.3 64.3L88.8 62.3L91.3 59.9L93.9 57.1L97.1 55.4L100.5 54.4L103.9 53.1L107.4 52.9L110.9 52.9L114.1 53.4L117.1 54.3L119.6 55.3L121.3 55.6L122.6 55.8L123.1 56.2L123.8 55.8L124.2 55.6L124.6 55.6L125.6 55.9L125.9 56.8L125.7 58.0L124.6 59.1L123.1 60.2L121.2 61.2L118.6 62.1L116.5 64.3L113.5 65.9L110.7 68.1L107.3 69.8L104.5 72.6L101.6 75.3L98.8 78.0L96.8 81.5L93.7 83.8L91.8 87.1L89.0 92.3L90.8 100.5L95.7 106.1L101.7 108.5L108.4 110.3L116.1 111.4L124.9 112.4L134.8 112.0L145.7 111.2L157.4 110.4L170.0 109.6L183.3 108.3L192.6 107.9"/><path d="M122.3 55.9L122.7 55.9L123.2 56.2L123.3 57.0L122.7 57.9L122.3 59.5L121.5 61.6L120.1 63.9L117.9 66.0L115.5 68.4L112.0 69.9L108.4 71.3L105.2 73.5L101.2 74.9L98.8 75.9"/><path d="M82.2 49.2L82.4 49.1L85.8 46.6L89.8 45.3L93.7 43.7L97.9 42.8L102.1 42.4L106.3 43.2L110.3 43.6L114.1 43.4L117.8 44.0L121.4 44.8L124.5 45.2L127.2 46.3L130.2 46.7L132.5 48.4L134.6 50.5L136.2 53.1L136.1 56.2L135.9 59.1L134.5 61.7L132.4 63.9L130.4 66.0L128.1 68.0L124.9 69.3L122.4 71.6L119.9 74.1L117.3 76.8L114.6 79.5L112.5 82.7L110.3 85.7L107.9 88.0L105.7 90.0L104.6 92.4L102.5 93.3L102.2 93.4L100.9 92.8L101.8 93.6L105.2 94.5L110.3 95.4L117.1 96.5L125.4 96.5L134.8 95.8L145.4 94.8L157.0 93.9L158.6 94.0"/><path d="M129.3 71.8L128.5 73.4L125.6 75.5L122.2 77.0L118.9 79.0L115.3 80.3L112.3 82.5L109.3 84.5L107.2 87.1L105.0 89.3L103.6 91.6L103.0 93.6L103.7 93.6L104.2 90.3L103.9 89.2L106.2 90.2L111.0 90.3L117.5 91.3L125.5 92.4L134.9 93.8L145.4 94.0L157.0 94.6L165.6 94.6"/><path d="M84.1 54.1L84.8 54.1L88.4 52.9L92.0 51.7L95.9 51.1L99.7 50.9L103.3 49.4L106.9 48.6L110.6 48.0L114.1 47.0L117.7 46.6L121.1 46.2L124.0 46.8L126.6 47.5L128.3 49.2L129.4 51.0L129.5 53.0L129.3 54.6L129.5 56.0L128.6 57.4L128.7 59.3L127.9 61.1L127.4 63.6L125.8 65.8L124.2 68.5L121.5 70.4L119.2 73.2L115.8 74.9L112.8 77.1L109.5 79.0L105.8 80.3L103.0 82.6L100.0 84.5L97.6 86.8L95.6 89.3L94.9 92.8L97.0 95.8L99.9 97.6L104.1 98.9L109.8 99.3L116.9 99.4L125.3 99.7L134.8 100.4L145.5 101.5L157.2 101.4L169.0 102.4"/><path d="M81.8 50.9L82.8 49.9L86.5 48.4L90.5 47.2L94.6 46.7L98.5 45.7L102.6 45.6L106.6 46.0L110.5 46.3L114.1 46.3L117.6 46.7L121.2 46.0L124.1 46.4L127.0 46.7L129.8 47.3L131.9 49.0L133.5 51.0L134.3 53.5L133.8 56.1L132.7 58.4L131.3 60.4L130.2 62.6L128.2 64.3L125.8 65.8L124.3 68.6L122.0 71.0L119.6 73.7L116.5 75.8L114.2 79.0L111.7 81.8L109.3 84.5L106.2 86.1L103.7 88.0L101.6 90.0L99.5 91.6L98.4 93.1L98.7 94.5L100.7 95.9L104.5 97.2L110.1 97.6L117.0 97.8L125.3 97.2L134.8 96.6L145.5 96.9L157.1 96.5L169.6 96.2L182.9 95.7L192.0 95.8"/><path d="M77.5 40.6L78.3 40.6L82.7 39.0L86.8 36.6L91.5 35.8L96.0 34.6L100.7 34.7L105.3 35.0L109.8 34.8L114.2 35.7L118.4 36.6L122.6 37.2L126.6 38.5L130.4 39.8L134.5 41.0L137.9 43.9L141.0 47.3L143.2 51.6L144.0 56.3L143.5 60.8L141.7 64.8L139.4 68.2L136.9 71.3L133.5 73.4L130.4 75.5L127.5 77.8L124.3 79.8L121.8 82.8L119.1 85.3L117.0 88.5L115.2 91.5L114.0 94.6L112.6 96.5L112.4 98.4L111.9 98.7L113.0 94.3L110.1 85.7L106.8 83.3L107.7 84.0L111.8 84.2L117.9 85.5L125.7 85.1L134.9 84.7L145.3 83.5L156.8 83.4L158.1 82.6"/><path d="M79.1 53.1L79.7 52.5L83.1 50.7L86.7 48.7L90.3 46.7L94.0 44.5L98.1 43.7L102.2 43.0L106.3 42.8L110.3 42.7L114.1 43.1L117.8 44.5L121.3 45.3L124.3 46.0L126.7 47.3L129.4 47.8L131.1 49.6L132.9 51.3L134.4 53.5L136.0 56.2L135.3 59.0L134.3 61.7L133.3 64.4L130.7 66.3L128.4 68.4L125.6 70.0L122.7 72.0L119.6 73.7L116.4 75.6L113.8 78.3L111.1 81.0L108.7 83.8L107.3 87.3L105.1 89.4L103.7 91.6L102.8 93.5L102.6 93.5L101.9 92.0L102.1 93.0L105.1 94.6L110.3 95.9L117.1 97.3L125.3 97.6L134.8 97.0L145.5 96.2L157.1 95.6L169.6 94.8L182.8 93.7L188.4 93.4"/><path d="M91.1 63.7L92.5 63.0L95.2 60.9L97.9 58.4L101.1 56.7L104.2 54.7L107.6 54.4L110.9 54.1L114.1 54.7L117.0 55.5L119.5 55.7L120.7 57.6L121.7 57.6L121.3 58.6L121.0 58.2L121.6 56.9L122.0 56.2L122.8 55.9L122.6 56.1L123.0 56.9L122.5 57.8L121.7 59.1L120.4 60.5L117.9 61.4L115.5 63.0L112.5 64.6L109.3 66.3L106.0 68.2L102.9 70.6L99.6 73.0L96.7 75.8L93.8 78.6L91.5 82.1L89.2 85.6L86.5 92.1L88.9 102.0L94.8 108.0L101.2 110.5L108.1 112.5L115.9 113.8L124.8 115.0L134.8 115.7L145.7 115.3L157.5 114.6L170.2 113.9L180.3 112.9"/><path d="M74.8 46.6L76.0 46.1L80.2 44.5L84.2 42.6L88.6 41.7L93.2 41.8L97.5 41.2L102.0 42.0L106.1 41.6L110.2 41.8L114.2 41.2L118.1 40.9L122.1 40.5L126.0 40.4L129.3 42.0L133.1 42.9L136.1 45.3L137.5 49.1L138.7 52.6L138.3 56.2L136.9 59.3L135.5 62.1L134.1 64.9L132.1 67.4L129.7 69.7L127.5 72.2L125.5 75.3L123.0 78.2L120.3 80.7L117.9 83.8L114.9 85.8L112.4 88.2L110.3 90.6L107.8 92.0L106.0 93.4L105.2 94.9L104.8 93.7L103.7 90.6L103.8 89.5L106.3 90.0L111.1 89.7L117.5 90.4L125.6 89.7L134.9 89.3L145.3 88.5L156.9 88.8L169.4 88.5L182.7 89.1L186.4 88.9"/><path d="M79.8 55.6L80.8 54.5L84.1 52.6L87.3 50.2L91.3 49.5L95.1 48.4L99.2 48.8L103.1 48.3L106.9 48.5L110.6 48.6L114.1 47.9L117.6 47.7L120.8 48.3L123.6 48.2L126.3 48.1L128.9 48.5L130.8 49.9L131.4 52.1L131.9 54.1L131.9 56.1L130.6 57.9L129.2 59.5L128.5 61.5L126.3 62.7L124.4 64.4L122.6 66.6L120.4 69.1L118.4 72.2L115.8 74.8L113.4 77.9L110.3 79.9L107.5 82.4L104.8 84.6L102.4 86.8L99.7 88.5L97.3 90.3L95.1 92.8L96.2 96.4L99.1 99.1L103.9 99.7L109.7 100.2L116.9 100.2L125.3 99.9L134.8 100.0L145.5 99.2L157.2 98.9L169.7 99.2L183.0 99.0L197.0 99.7L197.0 99.5"/><path d="M121.4 52.3L122.3 52.4L123.6 53.6L124.4 54.4L123.9 55.8L123.8 55.8L123.9 55.8L124.5 55.9L124.6 56.5L124.7 57.6L125.1 59.4L124.4 61.3L123.0 63.0L121.1 64.9L118.8 67.1L115.7 68.7L112.2 70.1L108.6 71.6L105.2 73.5L102.0 75.8L98.7 77.9L96.0 80.7L93.2 83.4L91.8 87.1L89.5 92.4L92.5 99.2L97.3 102.8L102.7 104.6L108.9 106.5L116.4 107.7L125.0 109.1L134.8 109.8L145.7 110.2L157.4 109.8L170.1 110.3L179.5 109.1"/><path d="M83.5 55.7L85.3 55.2L88.6 53.3L92.2 52.0L95.8 51.0L99.4 49.4L102.9 47.4L106.8 47.0L110.4 45.9L114.1 45.5L117.7 45.3L121.0 46.7L123.8 47.4L125.8 49.2L126.9 51.0L127.8 52.4L128.9 53.3L129.5 54.6L129.9 56.0L130.4 57.8L129.7 59.7L129.6 62.2L128.6 64.6L126.9 66.9L124.5 68.9L121.8 70.8L118.5 72.3L115.3 74.2L111.6 75.5L108.3 77.5L105.2 79.6L102.6 82.1L100.7 85.2L98.9 87.8L97.5 90.4L97.5 93.0L98.2 94.8L100.7 95.9L104.3 97.9L109.9 98.7L116.9 100.0L125.2 101.6L134.8 101.7L145.5 102.0L157.2 102.4L169.8 102.0L183.1 100.8L193.1 100.3"/><path d="M88.5 58.6L90.4 57.7L93.4 55.6L96.8 54.5L100.0 52.2L103.6 51.1L107.1 49.9L110.6 48.9L114.1 48.9L117.4 49.5L120.5 50.1L122.7 51.2L124.0 52.9L124.9 53.8L125.2 54.6L125.1 55.2L125.5 55.4L126.5 56.0L127.4 57.2L126.9 58.5L127.0 60.6L126.1 62.6L124.0 64.0L121.6 65.5L119.2 67.6L115.9 69.0L112.4 70.3L109.3 72.5L106.0 74.6L103.1 77.0L100.4 79.7L97.4 82.0L95.4 85.1L94.4 88.6L92.6 92.6L94.6 97.6L98.1 101.2L103.1 103.0L109.1 105.0L116.5 106.3L125.1 106.9L134.8 108.0L136.8 108.2"/><path d="M84.6 55.8L85.3 55.1L89.0 54.3L92.8 53.8L96.3 52.6L99.9 51.6L103.5 50.7L107.0 49.0L110.6 48.3L114.1 47.5L117.6 47.2L120.9 47.4L123.8 47.6L125.9 49.0L127.3 50.5L128.3 51.9L127.9 53.8L127.6 55.0L127.8 56.0L127.8 57.2L127.7 58.8L127.2 60.7L126.6 63.0L125.4 65.4L123.2 67.3L121.2 70.1L118.6 72.4L115.2 74.0L112.2 76.3L108.5 77.7L105.0 79.3L101.6 81.1L99.1 83.7L97.0 86.4L94.6 88.8L95.5 89.2"/><path d="M82.6 56.5L85.1 54.8L88.2 52.4L91.8 51.1L95.2 48.9L99.0 47.6L102.7 46.2L106.7 46.2L110.5 46.5L114.1 46.3L117.6 47.9L120.8 48.2L123.1 49.7L125.0 50.9L126.8 51.3L127.9 52.3L129.7 52.9L130.8 54.3L131.2 56.1L131.7 58.1L131.7 60.5L130.3 62.6L128.2 64.3L126.0 66.0L123.5 67.7L120.1 68.7L117.4 70.9L114.1 72.5L111.5 75.4L108.8 78.1L106.2 80.8L103.7 83.3L101.9 85.7"/><path d="M77.8 51.3L78.7 50.8L82.4 49.1L86.5 48.1L90.2 46.3L94.3 45.6L98.1 44.0L102.1 42.8L106.1 41.3L110.1 40.4L114.2 40.5L118.1 40.2L122.0 40.8L125.4 42.3L127.9 44.9L130.4 46.4L132.3 48.6L133.2 51.2L134.5 53.5L134.9 56.1L134.8 58.8L135.1 62.0L134.1 64.9L132.2 67.5L130.2 70.2L127.7 72.4L125.2 75.0L121.4 76.1L118.3 78.1L115.2 80.2L111.6 81.6L109.3 84.5L106.4 86.3L105.3 89.6L104.2 92.0L103.6 93.9L104.1 93.6L103.9 90.5L103.6 89.8L106.3 89.9L110.8 91.8L117.4 92.6L125.4 94.3L134.9 94.8L145.4 95.3L157.0 94.7L169.6 94.9L182.8 93.5L196.8 92.3L196.8 92.4"/><path d="M79.8 54.3L80.5 54.1L83.9 52.3L87.3 50.1L90.7 47.7L94.5 46.4L98.4 45.2L102.4 44.2L106.3 43.2L110.3 43.2L114.1 44.6L117.8 45.2L121.2 45.8L123.9 47.4L126.2 48.3L128.2 49.4L130.3 50.3L131.7 51.9L133.4 53.7L134.2 56.1L134.4 58.8L133.3 61.2L131.8 63.5L130.3 66.0L127.9 67.9L125.0 69.4L121.7 70.7L118.9 72.8L116.1 75.2L112.7 77.0L110.3 80.0L108.2 83.2L105.7 85.5L104.1 88.4L102.4 90.6L101.3 92.6L100.7 93.3L100.3 93.2L101.5 94.1L104.7 96.3L110.1 97.6L117.0 98.9L125.3 99.0L134.8 99.3L145.5 98.2L157.1 98.1L169.6 96.3L177.4 96.1"/><path d="M120.4 55.9L121.3 55.7L122.4 56.0L123.1 56.1L123.8 55.8L124.2 55.7L125.1 55.5L126.0 56.0L125.7 56.8L125.7 58.0L124.0 58.7L123.1 60.2L121.0 61.1L118.6 62.1L116.2 63.8L113.1 65.3L110.3 67.7L107.8 70.6L104.9 73.1L101.9 75.6L99.3 78.6L96.6 81.3L94.3 84.2L91.5 87.0L88.7 92.3L90.1 101.1L95.7 106.1L101.5 109.4L108.3 110.5L116.1 111.5L124.9 111.8L134.8 112.2L145.7 110.6L157.4 109.9L158.3 110.0"/><path d="M79.6 39.8L82.8 39.2L87.8 39.3L92.2 38.3L96.8 38.3L101.3 38.2L105.7 38.3L109.9 37.1L114.2 36.5L118.4 36.1L122.8 36.2L127.3 35.9L131.5 37.4L135.3 40.0L138.2 43.5L140.7 47.4L141.3 52.0L140.9 56.3L140.4 60.1L138.7 63.5L137.3 66.9L134.8 69.6L133.4 73.3L131.1 76.3L128.3 78.9L125.9 81.9L122.9 84.1L120.1 86.6L117.0 88.4L114.6 90.8L112.3 92.8L110.5 94.5L109.0 95.7L108.3 96.6L109.4 94.0L108.2 87.2L106.5 84.0L107.8 83.8L112.0 83.3L118.0 83.5L125.7 84.0L134.9 84.0L145.3 84.0L156.8 84.7L169.3 85.0L175.7 84.6"/><path d="M76.9 46.1L79.8 43.7L84.0 42.2L87.8 39.6L92.2 38.3L96.6 37.4L101.1 36.6L105.6 36.9L109.9 37.0L114.2 36.9L118.3 37.6L122.3 39.5L125.9 40.6L129.4 41.8L132.9 43.1L136.1 45.4L138.3 48.7L140.2 52.3L141.5 56.3L141.5 60.4L140.4 64.2L138.3 67.5L135.7 70.3L132.6 72.5L129.6 74.6L126.4 76.5L123.4 78.6L120.1 80.4L117.1 82.7L115.3 86.3L113.0 88.8L111.5 91.8L110.6 94.7L110.1 96.6L109.4 97.3L110.9 94.2L108.8 86.8L106.1 84.7L107.2 86.3L111.4 87.2L117.7 87.8L125.6 88.5L134.9 88.7L145.3 88.0L156.8 86.8L169.3 86.4L182.5 85.2L189.7 84.3"/><path d="M85.5 64.3L86.2 64.0L88.3 61.3L90.9 59.0L93.9 56.9L97.0 55.1L100.3 53.2L103.8 52.4L107.3 52.0L110.8 52.1L114.1 53.4L117.1 54.1L119.7 54.7L121.5 55.1L122.4 56.1L123.3 56.0L123.5 56.1L124.2 55.6L125.4 55.5L125.5 55.9L125.9 56.8L125.7 58.0L124.4 59.0L123.3 60.4L121.6 61.6L119.3 62.9L116.3 64.0L113.6 66.0L110.8 68.3L108.0 70.8L104.6 72.8L102.1 75.9L99.1 78.3L96.5 81.2L94.1 84.1L92.2 87.3L88.9 92.3L90.8 100.5L95.8 105.9L101.6 108.9L108.4 110.1L116.1 111.2L124.9 112.2L134.8 111.4L145.7 110.6L157.4 109.6L170.0 109.0L172.4 108.6"/><path d="M83.2 53.9L84.5 53.4L88.1 52.0L91.8 50.9L95.6 50.2L99.5 50.0L103.3 49.4L107.0 49.2L110.6 49.1L114.1 48.5L117.5 48.0L120.9 47.4L123.6 48.2L126.3 48.0L128.4 49.1L130.0 50.5L130.6 52.5L130.4 54.4L129.7 56.0L129.2 57.6L127.8 58.9L127.2 60.7L125.9 62.5L124.6 64.6L122.5 66.6L121.0 69.8L118.6 72.5L115.7 74.7L113.2 77.6L110.2 79.9L106.9 81.7L103.8 83.4L100.8 85.3L98.3 87.4L96.0 89.5L94.4 92.8L95.7 96.8L99.0 99.3L103.8 100.0L109.7 100.3L116.8 101.1L125.2 100.9L134.8 100.3L145.5 100.4L157.2 100.1L169.7 100.3L169.9 100.8"/><path d="M86.0 53.9L88.3 52.7L92.1 51.7L95.6 50.3L99.3 48.9L102.9 47.3L106.6 45.4L110.4 45.1L114.1 44.6L117.8 44.6L121.3 45.2L124.0 46.8L126.2 48.3L127.7 50.0L128.3 52.0L129.5 53.0L129.5 54.6L130.7 56.0L130.5 57.9L130.8 60.1L130.3 62.6L129.1 65.0L127.6 67.6L125.2 69.6L122.3 71.4L119.2 73.3L115.5 74.4L112.2 76.3L108.9 78.2L105.8 80.4L103.5 83.2L101.5 85.9L99.9 88.6L98.2 90.8L98.3 93.1L98.7 94.5L101.1 95.1L104.7 96.4L110.0 98.0L116.9 99.5L125.3 100.1L134.8 101.0L145.5 101.3L157.2 101.2L169.8 101.4L172.1 101.3"/><path d="M126.3 45.9L127.4 45.9L128.9 48.4L131.0 49.7L132.2 51.7L133.7 53.7L134.3 56.1L134.2 58.7L134.5 61.7L133.6 64.6L132.0 67.4L129.8 69.8L126.8 71.4L123.9 73.4L120.3 74.7L117.0 76.5L113.9 78.5L110.6 80.4L107.9 82.8L106.1 86.0L104.0 88.3L102.9 91.0L102.8 93.5L102.6 93.5L103.0 91.1L102.8 91.5L105.5 92.9L110.5 94.2L117.2 95.6L125.4 96.6L134.8 97.0L145.5 96.8L157.1 96.8L169.6 95.9L182.9 95.4L183.0 95.5"/><path d="M113.4 46.4L114.1 45.9L117.7 46.1L121.0 47.3L123.4 48.7L125.5 49.8L126.7 51.4L127.3 52.8L127.7 53.9L128.5 54.8L129.0 56.0L129.6 57.6L129.4 59.5L128.4 61.4L128.0 64.2L125.9 65.9L123.7 68.0L120.8 69.6L117.7 71.3L114.8 73.6L111.3 75.1L107.6 76.6L104.6 78.9L101.7 81.2L100.0 84.5L97.6 86.8L96.8 90.0L95.7 92.9L97.1 95.7L100.0 97.3L104.0 99.1L109.7 100.0L116.7 102.2L125.2 103.2L134.8 103.8L145.6 104.2L157.3 104.2L166.4 103.6"/><path d="M121.6 68.0L120.1 68.7L117.0 70.4L114.4 73.0L111.7 75.6L109.1 78.5L106.9 81.6L104.6 84.3L102.0 86.4L100.2 88.8L98.7 91.1L97.3 93.0L97.7 95.2L99.9 97.5L103.9 99.5L109.6 101.0L116.7 102.0L125.2 103.1L134.8 102.3L145.5 101.3L157.2 100.2L169.7 99.1L183.0 98.2L196.8 97.7"/><path d="M86.6 67.8L88.2 67.5L90.3 65.4L92.9 63.9L95.4 61.5L98.4 59.8L101.2 57.2L104.4 55.8L107.7 55.4L110.9 54.5L114.1 55.0L117.0 55.2L119.5 56.1L120.8 57.4L121.3 58.3L121.5 58.3L120.8 58.4L120.6 57.4L120.9 56.4L121.1 55.9L121.7 55.8L122.5 56.7L122.4 57.8L121.3 58.7L119.8 59.9L117.9 61.3L115.2 62.6L112.3 64.3L108.9 65.7L105.7 67.8L102.1 69.5L99.1 72.4L96.3 75.3L92.9 77.7L90.5 81.3L87.9 84.9L85.3 92.0L88.0 102.7L94.6 108.3L100.9 111.8L107.9 113.5L115.9 114.8L124.8 115.5L134.8 115.9L145.7 116.0L157.6 115.6L168.7 114.8"/><path d="M79.5 37.6L81.7 36.5L86.5 35.7L91.3 35.2L96.2 35.4L100.8 35.4L105.4 35.9L109.9 36.0L114.2 35.7L118.5 35.7L122.8 36.0L127.3 36.1L131.5 37.5L135.8 39.3L140.0 42.1L142.8 46.4L144.9 51.3L144.1 56.3L143.2 60.8L141.8 64.8L139.4 68.1L136.1 70.6L133.5 73.4L131.0 76.2L128.5 79.1L126.1 82.1L123.3 84.7L120.6 87.2L118.6 90.4L116.9 93.5L114.9 95.6L113.4 97.3L111.8 97.9L111.3 98.4L112.1 94.3L110.2 85.6L107.3 82.3L108.3 81.8L112.1 82.2L118.1 82.2L125.8 81.9L134.9 81.4L145.2 81.3L156.7 81.0L162.3 80.4"/><path d="M107.8 33.1L109.7 33.8L114.2 33.2L118.6 33.7L123.0 35.2L127.0 37.0L130.9 38.7L134.0 41.7L137.4 44.2L139.2 48.2L141.5 52.0L142.5 56.3L143.0 60.7L142.3 65.0L140.5 68.8L138.5 72.5L135.3 75.2L131.9 77.3L129.1 79.8L125.4 81.2L122.1 83.1L118.9 85.0L116.1 87.4L114.1 90.2L112.2 92.7L111.8 95.7L111.2 97.5L112.0 98.7L114.4 94.5L112.1 84.2L107.9 81.0L108.5 80.9L112.1 82.1L118.0 83.3L125.7 84.7L134.9 85.1L145.3 84.8L156.8 85.2L159.5 84.9"/><path d="M82.7 59.4L83.2 58.7L86.0 56.6L89.4 55.4L92.4 52.8L95.9 51.1L99.3 49.1L103.1 48.2L106.8 47.4L110.5 47.5L114.1 47.9L117.5 48.6L120.6 49.4L122.9 50.4L124.4 52.0L125.9 52.4L126.9 53.2L127.6 54.0L128.7 54.8L129.3 56.0L130.2 57.8L129.9 59.8L129.3 62.0L127.4 63.7L125.5 65.5L122.5 66.6L120.0 68.6L116.9 70.2L113.4 71.6L110.6 74.2L107.2 76.0L104.6 78.9L102.4 82.0L100.0 84.5L98.0 87.1L97.1 90.2L95.8 92.9L96.5 96.1L99.1 99.1L103.5 101.4L109.4 102.2L116.6 103.9L118.6 104.6"/><path d="M78.7 43.7L79.4 43.0L83.8 41.8L88.2 40.6L92.5 39.4L96.8 38.3L101.0 36.4L105.4 35.7L109.8 34.3L114.2 34.6L118.5 35.2L122.9 35.8L126.9 37.3L130.3 39.9L133.5 42.4L135.9 45.5L138.2 48.7L139.9 52.3L140.4 56.2L140.8 60.2L140.7 64.3L139.3 68.1L136.7 71.1L134.4 74.3L131.9 77.2L128.2 78.7L124.9 80.5L121.9 82.8L118.0 83.9L115.7 86.8L113.1 89.0L111.1 91.4L110.0 94.1L109.7 96.3L110.1 97.7L111.8 94.2L109.9 85.9L107.2 82.6L108.0 82.9L111.9 83.8L117.9 84.8L125.7 85.7L134.9 87.0L145.3 87.3L156.8 86.6L169.3 86.5L182.5 85.1L190.9 84.2"/><path d="M82.7 37.5L86.3 35.2L91.0 34.2L95.6 33.0L100.4 33.0L105.1 33.3L109.7 33.4L114.2 34.2L118.5 34.6L122.9 35.6L127.2 36.4L131.1 38.2L134.8 40.6L139.0 42.9L141.9 46.9L144.7 51.3L145.2 56.3L145.4 61.3L143.2 65.4L141.6 69.5L138.7 72.7L135.0 74.9L131.6 76.9L128.5 79.0L125.5 81.4L122.4 83.5L120.0 86.5L117.9 89.6L116.2 92.7L114.9 95.6L114.2 98.1L113.8 99.6L113.9 99.9L115.4 94.5L112.5 83.9L108.1 80.6L108.5 80.8L112.1 82.4L118.1 82.4L125.7 83.4L134.9 83.2L137.3 82.8"/><path d="M86.8 54.2L88.5 53.1L92.0 51.6L95.7 50.6L99.6 50.2L103.4 50.4L107.1 49.7L110.7 50.5L114.1 50.1L117.3 51.0L120.4 50.4L122.8 50.9L125.1 50.5L126.9 51.1L128.5 51.8L129.2 53.2L130.1 54.4L129.9 56.0L129.1 57.5L128.1 59.0L126.1 60.0L125.0 61.7L123.4 63.4L121.4 65.3L118.8 67.1L116.4 69.6L114.1 72.6L111.3 75.1L109.0 78.3L105.8 80.3L103.0 82.6L100.6 85.1L98.0 87.1L95.2 89.1L93.0 92.7L93.9 98.2L97.7 101.9L103.0 103.2L109.2 103.9L116.6 104.1L125.2 103.6L134.8 103.4L145.6 102.9L157.2 102.1L169.8 101.7L183.1 102.2L197.1 101.7L197.1 102.4"/><path d="M82.9 47.7L85.6 46.0L89.8 45.3L93.9 44.2L98.2 44.3L102.5 44.7L106.4 44.4L110.3 44.1L114.1 44.2L117.8 44.4L121.4 44.7L124.6 44.8L127.9 44.9L130.7 46.1L133.4 47.7L135.1 50.2L136.1 53.1L135.3 56.1L134.9 58.9L133.4 61.3L131.4 63.2L129.7 65.5L127.7 67.7L125.3 69.7L122.7 72.0L120.6 75.0L118.1 77.9L115.6 80.7L112.8 83.2L110.5 85.9L107.8 87.9L105.5 89.8L103.8 91.7L101.9 93.0L100.5 93.3L100.7 92.9L101.6 94.0L105.2 94.3L110.4 95.1L117.2 95.1L125.4 95.0L134.9 93.8L145.4 93.4L157.0 93.3L169.5 93.7L169.7 93.3"/><path d="M131.4 48.0L131.9 48.9L132.5 51.5L132.9 53.8L132.3 56.1L132.1 58.2L131.9 60.6L131.7 63.5L130.6 66.2L128.9 68.9L126.9 71.6L124.5 74.1L123.5 74.8"/><path d="M79.4 54.3L80.3 53.6L83.3 51.0L87.0 49.5L91.1 48.9L95.1 48.5L99.2 48.7L103.0 47.6L106.9 48.1L110.6 48.0L114.1 47.1L117.6 47.3L121.0 47.1L124.2 46.3L126.7 47.3L129.2 48.1L130.8 49.9L132.4 51.6L132.2 54.0L132.4 56.1L131.4 58.1L129.8 59.7L128.5 61.5L127.0 63.3L125.6 65.6L123.2 67.4L121.5 70.4L119.1 73.1L116.6 75.9L113.6 78.1L111.1 81.0L107.7 82.6L105.3 85.1L102.0 86.4L99.8 88.5L97.5 90.4L96.4 93.0L96.7 96.0L99.9 97.4L104.1 98.8L109.9 99.1L116.9 99.3L125.3 99.1L134.8 98.7L145.5 97.9L147.5 98.5"/><path d="M89.3 60.8L91.1 59.3L94.2 58.0L97.4 56.4L100.6 54.8L103.8 52.7L107.3 51.8L110.8 51.2L114.1 50.8L117.3 50.7L120.2 52.0L122.2 52.7L123.3 54.4L124.0 54.9L124.0 55.6L124.3 55.6L124.5 55.7L124.2 55.9L125.2 56.7L125.3 57.8L125.4 59.6L124.4 61.2L123.1 63.1L121.2 65.1L118.4 66.6L115.1 68.0L113.0 69.5"/><path d="M86.9 57.2L89.5 55.5L92.6 53.4L96.0 51.6L99.6 50.4L103.1 48.2L106.8 47.5L110.5 47.7L114.1 47.0L117.5 48.2L120.8 48.4L123.1 49.8L124.9 51.0L125.6 52.8L126.4 53.6L126.9 54.3L127.6 55.0L128.4 56.0L129.5 57.6L129.2 59.5L129.0 61.8L127.1 63.4L125.5 65.5L123.0 67.1L119.8 68.4L116.6 69.9L113.6 71.9L110.4 74.0L106.9 75.7L104.0 78.2L101.9 81.4L99.6 84.1L97.4 86.7L96.0 89.6L95.1 92.8L96.5 96.2L99.5 98.4L103.5 101.0L109.5 102.1L116.6 103.9L125.1 104.7L134.8 105.7L145.6 105.3L157.3 104.8L169.9 104.5L183.2 103.2L195.6 102.4"/><path d="M77.9 54.7L80.2 53.4L84.1 52.7L87.9 51.5L91.8 51.1L95.6 50.2L99.3 49.1L102.9 47.2L106.7 46.5L110.4 45.1L114.1 45.1L117.8 44.0L121.4 44.7L124.4 45.7L127.0 46.6L128.6 48.8L130.0 50.5L130.7 52.5L130.6 54.3L130.8 56.1L130.4 57.8L130.0 59.8L129.3 62.0L129.0 64.9L127.4 67.3L125.2 69.6L122.9 72.2L120.0 74.3L116.8 76.1L113.1 77.5L110.0 79.6L106.5 81.2L104.0 83.7L101.4 85.8L99.5 88.3L98.4 90.9L98.2 93.1L99.0 94.2L101.0 95.3L104.8 96.0L110.1 97.1L117.1 97.3L125.3 98.1L134.8 98.9L145.5 99.8L157.2 99.8L169.7 100.5L182.9 99.8"/><path d="M85.2 65.0L86.2 64.1L88.9 62.6L92.0 61.6L94.9 60.0L98.0 58.5L101.1 56.8L104.2 54.9L107.5 53.6L110.9 53.5L114.1 53.1L117.2 53.0L119.9 53.8L121.7 54.4L122.6 55.7L123.0 56.4L122.5 56.9L121.8 56.8L121.7 56.2L121.9 55.9L122.6 56.1L123.3 57.0L123.0 58.2L122.5 59.7L121.8 61.9L120.0 63.7L117.5 65.5L114.4 67.0L111.1 68.7L107.6 70.3L104.0 72.0L100.4 73.9L97.2 76.3L93.8 78.6L91.9 82.4L89.9 86.0L87.0 92.2L90.3 100.9L95.8 105.8L101.9 107.7L108.6 108.9L116.2 110.2L124.9 112.2L134.8 112.2L145.7 113.0L157.5 112.9L169.1 112.9"/><path d="M86.0 56.7L86.2 57.1L89.3 55.0L93.0 54.5L96.3 52.6L99.9 51.7L103.4 49.9L106.9 48.2L110.6 47.8L114.1 46.7L117.6 47.1L120.8 47.9L123.5 48.5L125.5 49.8L126.2 52.0L127.2 52.9L127.0 54.3L127.5 55.0L128.1 56.0L127.7 57.2L128.3 59.1L128.1 61.3L126.8 63.2L125.3 65.3L123.6 67.8L120.5 69.2L118.0 71.7L114.3 72.8L110.9 74.7L107.7 76.7L104.4 78.6L101.5 81.0L98.8 83.4L97.0 86.4L95.7 89.4L94.6 92.8L96.4 96.2L99.6 98.0L103.8 99.8L109.5 101.5L116.7 102.1L125.2 103.2L134.8 104.6L145.6 104.4L157.3 105.3L169.9 104.3L180.1 103.7"/><path d="M77.9 51.9L78.7 50.9L82.6 49.5L86.7 48.7L90.7 47.9L94.8 47.5L98.9 47.4L102.8 46.4L106.7 46.6L110.4 45.7L114.1 44.7L117.8 44.5L121.5 43.9L124.8 44.1L127.7 45.3L130.2 46.8L132.1 48.7L132.9 51.3L133.0 53.8L133.0 56.1L132.5 58.3L130.6 60.1L130.3 62.6L128.7 64.7L127.4 67.4L125.3 69.7L123.0 72.3L121.0 75.5L118.0 77.7L115.1 80.0L111.9 82.0L108.7 83.7L105.8 85.7L103.6 87.9L101.1 89.6L99.4 91.5L98.9 93.2L99.0 94.2L101.3 94.5L105.0 95.0L110.4 95.1L117.2 95.5L125.4 95.8L134.9 95.2L145.5 95.8L157.1 95.9L169.6 96.0L182.9 96.6L196.9 96.9L196.9 97.0"/><path d="M141.0 63.0L140.5 64.3L138.7 67.7L137.0 71.3L134.7 74.6L132.0 77.3L130.0 80.9L127.2 83.5L124.1 85.8L121.7 88.6L119.0 91.0L116.6 93.2L114.2 94.9L112.3 96.3L111.9 98.0L111.4 98.4L112.4 94.3L111.0 85.1L107.7 81.5L108.7 80.1L112.4 80.2L118.3 79.8L122.7 80.5"/><path d="M73.3 41.4L73.1 40.9L78.1 40.1L82.7 39.0L87.4 38.3L92.1 38.0L96.5 36.6L100.9 35.9L105.2 34.1L109.7 33.1L114.2 32.8L118.7 32.6L123.2 33.6L127.7 34.6L131.7 37.1L135.4 39.8L138.0 43.7L140.6 47.5L142.1 51.9L141.8 56.3L141.7 60.4L141.4 64.6L140.1 68.6L138.1 72.2L135.5 75.3L132.9 78.4L130.1 81.1L129.8 81.2"/><path d="M82.4 57.7L82.4 57.3L85.8 56.0L89.4 55.2L92.8 53.9L96.1 52.0L99.7 50.8L103.2 49.0L106.8 47.6L110.5 46.9L114.1 46.0L117.7 46.3L120.9 47.8L123.5 48.6L125.1 50.6L126.6 51.5L127.3 52.8L127.8 53.9L127.6 55.0L128.5 56.0L129.2 57.6L129.5 59.6L128.6 61.6L128.1 64.2L125.8 65.8L124.0 68.2L120.8 69.5L117.6 71.1L114.6 73.2L111.0 74.7L107.6 76.6L104.6 78.9L101.9 81.4L99.3 83.8L98.0 87.1L96.5 89.8L96.3 92.9L97.0 95.8L99.6 98.1L104.0 99.2L109.6 100.9L116.8 101.9L125.2 103.0L134.8 103.8L145.6 104.7L157.3 104.0L169.8 103.2L174.5 103.5"/><path d="M76.4 47.2L76.5 47.0L80.4 45.0L84.5 43.4L88.4 41.2L92.6 39.7L96.9 38.3L101.3 37.8L105.7 37.8L110.0 38.2L114.2 37.9L118.2 39.4L122.0 40.7L125.6 41.5L128.7 43.2L132.1 44.2L134.6 46.6L137.7 49.0L139.5 52.4L140.6 56.2L140.6 60.2L138.8 63.6L137.3 66.9L134.8 69.6L131.6 71.6L128.9 73.8L125.4 75.2L122.7 77.7L119.2 79.2L116.4 81.8L114.3 85.0L112.0 87.7L110.4 90.7L109.1 93.2L108.8 95.6L108.4 96.7L109.2 94.0L107.2 88.0L105.2 86.7L106.7 88.0L111.2 88.9L117.6 90.1L125.5 90.3L134.9 90.3L145.4 89.3L156.9 88.9L169.4 87.9L182.6 86.8L184.2 87.0"/><path d="M78.2 51.8L79.1 51.5L82.5 49.3L86.1 47.3L89.8 45.3L93.8 44.0L97.8 42.3L101.9 41.8L106.0 40.5L110.1 40.8L114.2 40.7L118.0 41.6L121.7 42.6L124.7 44.5L127.3 46.0L129.8 47.3L131.6 49.2L133.5 51.1L134.9 53.4L136.1 56.2L136.5 59.2L136.0 62.3L134.2 65.0L132.6 67.8L130.0 70.0L126.6 71.2L123.5 72.9L120.5 74.9L117.2 76.7L114.7 79.6L111.6 81.6L109.4 84.6L107.7 87.7L106.2 90.4L104.9 92.5"/><path d="M90.2 65.4L90.1 65.1L92.8 63.6L95.6 62.0L98.6 60.5L101.4 58.0L104.5 56.5L107.7 55.4L111.0 54.8L114.1 54.8L117.1 54.5L119.5 55.9L121.2 56.2L121.7 57.6L121.4 58.4L120.7 58.4L120.6 57.4L120.2 56.6L120.7 55.8L122.0 55.9L121.8 56.4L121.8 57.4L121.9 59.2L120.5 60.5L118.4 61.9L115.5 63.0L112.5 64.5L109.7 66.8L106.1 68.3L102.7 70.3L99.3 72.5L96.0 74.9L92.5 77.4L89.9 80.8L88.1 85.0L85.3 92.0L88.3 102.5L94.8 107.9L101.1 111.0L108.1 112.0L115.9 113.7L124.8 114.6L134.8 116.1L145.7 116.3L157.6 115.7L170.2 114.7L183.6 114.5L184.2 114.3"/><path d="M121.1 80.0L119.8 80.1L116.9 82.5L113.7 84.3L110.5 85.9L108.3 88.4L105.8 90.0L103.8 91.7L103.3 93.8L103.2 93.5L103.5 90.8L104.0 89.2L106.4 89.4L111.1 89.6L117.5 90.3L125.5 90.8L134.9 91.1L145.4 91.3L157.0 92.5L169.5 92.1L177.4 92.6"/><path d="M85.1 59.1L86.8 58.3L89.8 56.4L92.8 54.0L96.3 52.6L99.5 50.1L103.2 49.1L106.9 48.5L110.6 48.7L114.1 49.3L117.4 49.7L120.4 50.9L122.5 51.9L124.0 52.8L125.3 53.3L125.7 54.2L127.2 54.2L127.8 54.9L128.8 56.0L129.0 57.5L128.5 59.2L127.5 60.9L125.9 62.5L124.0 64.1L121.8 65.7L119.1 67.4L115.9 69.0L112.4 70.4L109.7 73.0L106.7 75.5L104.0 78.2L101.6 81.1L99.5 84.0L97.5 86.8L95.7 89.4L94.1 92.8L95.3 97.1L98.5 100.4L103.1 102.7L109.1 104.9L116.4 106.4L125.1 107.3L134.8 107.0L145.6 106.8L157.3 106.1L169.9 104.8L183.2 103.7L193.3 102.5"/><path d="M82.0 46.3L85.2 45.0L89.1 43.3L93.1 41.4L97.2 40.0L101.6 39.8L105.8 39.0L110.0 38.5L114.2 38.7L118.1 40.2L121.9 41.5L125.3 42.7L128.2 44.1L130.7 46.0L133.4 47.7L136.1 49.8L137.5 52.8L138.6 56.2L138.5 59.7L138.2 63.3L136.1 66.2L133.8 68.8L131.4 71.3L128.1 72.9L125.1 74.9L121.7 76.5L118.7 78.6L115.5 80.6L113.2 83.7L111.3 86.9L109.6 89.7L107.8 92.0L107.5 94.6L106.6 95.7L107.5 93.9L106.1 88.8L104.6 87.8L106.4 89.4L111.0 90.6L117.5 91.6L125.5 92.3L134.9 92.6L145.4 92.0L157.0 91.5L169.4 90.1L169.8 90.0"/><path d="M83.1 61.6L84.3 60.8L87.6 59.8L90.8 58.7L94.0 57.3L97.5 56.8L100.7 55.1L104.1 54.2L107.4 52.6L110.8 51.2L114.1 51.2L117.4 50.1L120.4 50.4L122.7 51.2L124.2 52.3L125.0 53.6L124.6 55.1L124.9 55.3L124.3 55.7L124.5 55.9L124.5 56.5L124.9 57.7L124.6 59.1L124.2 61.1L122.8 62.9L120.9 64.8L119.1 67.4L116.1 69.1L112.8 70.8L109.1 72.2L106.0 74.5L102.1 75.9L98.9 78.1L95.8 80.5L93.1 83.3L91.1 86.7L89.8 92.4L91.9 99.7L97.2 103.0L102.7 104.3L109.0 105.4L116.4 106.3L125.0 107.9L134.8 108.7L145.6 108.7L157.4 109.4L170.0 108.9L183.4 108.5L183.6 109.1"/><path d="M85.0 60.5L87.3 59.2L89.8 56.2L93.1 54.7L96.3 52.8L100.0 51.9L103.5 51.0L107.2 51.1L110.8 52.0L114.1 52.0L117.2 53.0L119.9 53.7L121.8 54.0L123.6 53.7L124.7 54.1L125.9 54.1L126.4 54.6L127.0 55.1L127.6 56.0L127.2 57.1L126.7 58.4L124.9 59.3L123.5 60.5L121.5 61.5L119.8 63.4L117.0 64.8L114.4 67.0L111.8 69.5L109.0 72.1L106.6 75.3L104.0 78.2L101.0 80.5L98.6 83.2L95.5 85.2L92.9 87.8L90.7 92.5L91.6 99.9L96.4 104.5L102.0 107.4L108.6 108.4L116.3 108.7L125.0 109.4L134.8 108.2L145.6 107.3L157.4 107.0L169.9 106.1L180.1 105.8"/><path d="M130.3 55.9L130.2 56.0L129.3 57.6L128.9 59.4L127.4 60.8L125.2 61.9L123.3 63.3L121.2 65.0L118.6 66.9L115.9 68.9L113.2 71.4L110.5 74.0L107.9 76.9L105.6 80.0L102.6 82.2L100.2 84.7L98.1 87.2L96.2 89.7L93.8 92.7L94.2 97.9L98.1 101.2L102.9 103.5L109.1 105.2L116.5 105.9L125.1 105.9L134.8 105.0L145.6 104.6L157.3 103.2L169.8 102.1L170.5 102.7"/><path d="M94.9 65.9L97.0 66.0L99.6 64.3L102.4 62.7L105.4 61.5L108.3 60.2L111.2 59.4L114.1 58.8L116.8 58.4L119.2 58.0L120.3 59.0L121.1 58.7L120.9 59.1L119.8 59.2L118.7 58.4L116.8 57.3L117.0 55.8L117.2 54.8L117.0 54.3L117.7 54.9L117.9 56.1L117.2 57.4L116.2 59.5L114.4 61.6L111.5 63.3L108.7 65.5L105.2 67.2L101.2 68.4L96.8 69.6L93.1 71.8L89.2 74.3L85.8 77.6L82.4 81.7L79.1 91.5L83.0 106.5L92.0 113.6L99.9 115.9L107.5 116.6L115.7 117.6L124.8 117.9L134.8 119.1L145.8 119.9L157.7 119.5L170.4 119.7L176.2 120.5"/><path d="M133.7 71.8L132.8 72.7L130.1 75.2L127.2 77.4L123.9 79.3L121.1 81.8L119.1 85.3L116.8 88.2L115.1 91.4L113.3 93.8L112.4 96.3L111.3 97.6L111.2 98.3L112.2 94.3L108.9 86.7L106.6 83.8L107.5 85.2L111.6 85.9L117.8 86.0L125.7 86.0L134.9 85.5L145.3 84.7L156.8 84.1L169.2 82.8L181.0 82.6"/><path d="M75.7 49.2L77.2 48.2L81.0 46.2L85.1 44.8L89.4 44.0L93.8 43.9L97.9 43.1L102.3 43.6L106.4 43.7L110.3 43.0L114.2 42.7L118.0 42.5L121.8 42.3L125.5 42.0L128.8 43.0L131.8 44.6L134.5 46.8L136.5 49.6L136.3 53.1L136.6 56.2L135.2 58.9L134.4 61.7L132.2 63.7L130.6 66.2L128.4 68.4L126.9 71.5L124.8 74.4L122.1 77.0L119.5 79.7L116.6 82.0L114.1 84.8L111.1 86.6L110.3 87.1"/><path d="M89.3 69.6L89.5 69.9L92.0 69.1L94.5 67.6L96.9 65.7L99.7 64.3L102.5 63.0L105.3 61.2L108.2 59.5L111.2 58.7L114.1 57.6L116.8 57.9L119.1 58.6L120.5 58.6L120.7 59.5L120.0 60.3L119.2 59.7L117.8 58.8L116.5 57.4L117.0 55.8L117.3 54.8L117.5 54.6L118.4 55.3L118.3 56.3L118.1 58.2L116.3 59.5L114.0 61.2L111.2 62.9L108.0 64.6L104.7 66.5L100.5 67.5L96.7 69.5L92.8 71.4L89.5 74.5L85.8 77.6L83.2 82.2L79.6 91.5L84.1 105.6L92.6 112.3L100.1 115.2L107.6 116.5L115.7 118.0L124.7 118.9L134.8 119.6L145.8 120.9L157.7 121.1L159.0 120.6"/><path d="M86.8 56.5L89.0 54.3L92.6 53.2L96.1 51.9L99.9 51.8L103.6 51.0L107.3 51.5L110.8 51.5L114.1 51.9L117.2 52.6L120.2 51.9L122.5 51.9L124.2 52.3L126.2 52.0L127.6 52.6L128.3 53.6L128.5 54.8L128.7 56.0L127.9 57.3L127.0 58.5L125.4 59.6L123.8 60.8L122.0 62.0L120.3 64.1L118.0 66.1L115.5 68.5L113.4 71.6L110.5 74.1L107.7 76.6L104.7 79.0L101.9 81.4L99.0 83.5L96.1 85.7L93.6 88.2L90.5 92.5L92.5 99.2L97.0 103.5L102.5 105.2L108.9 106.4L116.4 106.9L125.1 106.3L134.8 105.2L145.6 105.4L157.3 104.1L169.9 103.9L182.7 104.1"/><path d="M94.8 63.9L96.0 63.2L98.8 61.2L101.5 58.8L104.7 57.7L108.0 57.3L111.1 57.0L114.1 58.0L116.8 58.4L118.9 59.3L120.0 60.0L120.0 61.0L120.2 60.0L119.7 59.3L119.3 58.1L119.6 56.7L120.5 55.8L120.7 55.6L120.9 56.0L120.4 56.6L119.5 57.3L118.2 58.3L115.7 58.9L113.4 60.4L110.3 61.7L107.6 64.0L104.2 65.9L101.4 68.7L98.0 71.0L94.7 73.6L92.2 77.1L88.9 80.0L86.1 83.9L83.2 91.8L85.4 104.6L92.9 111.8L100.1 115.0L107.4 117.7L115.6 118.9L124.7 119.7L134.8 119.0L145.8 118.7L157.6 118.1L170.3 116.7L173.9 116.2"/><path d="M82.3 56.9L85.2 54.8L88.2 52.3L91.7 50.7L95.5 49.8L99.3 49.0L103.1 48.7L107.0 48.9L110.6 48.9L114.1 49.7L117.4 50.1L120.5 50.0L122.8 50.7L125.0 50.7L126.9 51.1L128.9 51.5L129.8 52.9L131.1 54.2L131.2 56.1L130.5 57.9L129.2 59.5L127.5 60.9L125.7 62.3L123.8 63.9L121.8 65.8L119.2 67.6L116.6 69.9L114.2 72.8L111.3 75.1L109.1 78.4L106.4 81.0L103.5 83.2L101.6 86.0L99.1 88.0L96.4 89.8L94.4 92.8L95.3 97.0L98.4 100.5L103.2 102.4L109.3 103.0L116.6 104.2L125.2 104.0L134.8 103.5L145.5 102.0L157.2 101.5L169.8 101.1L183.1 100.7L184.2 100.7"/><path d="M86.6 68.1L87.7 66.8L89.8 64.4L92.2 62.2L94.9 60.0L97.8 57.8L101.0 56.3L104.3 55.4L107.7 54.9L111.0 55.7L114.1 56.7L116.9 56.8L119.1 58.2L120.6 58.2L121.2 58.5L121.4 58.5L121.7 57.6L122.0 56.7L122.0 56.2L123.3 55.9L123.2 56.2L123.0 56.9L122.0 57.5L120.6 58.2L118.9 58.9L117.0 60.3L114.1 61.3L111.4 63.1L108.7 65.5L106.0 68.2L102.8 70.5L100.4 73.8L97.1 76.2L94.4 79.1L91.6 82.1L88.4 85.2L85.3 92.0L87.1 103.4L94.1 109.4L100.7 112.7L107.8 114.7L115.8 115.4L124.8 115.6L134.8 115.9L145.7 114.8L157.5 113.7L170.2 113.3L183.5 112.5L190.0 111.9"/><path d="M81.9 58.3L82.5 57.6L86.0 56.6L89.5 55.5L93.2 54.9L96.6 53.7L100.2 52.9L103.8 52.3L107.2 51.0L110.7 50.1L114.1 49.6L117.5 49.0L120.6 49.2L123.1 49.7L125.3 50.2L126.5 51.6L127.3 52.8L127.1 54.2L127.0 55.1L126.1 56.0L126.1 56.9L126.1 58.2L125.6 59.7L124.6 61.4L124.2 64.2L121.9 65.9L119.9 68.5L117.5 71.0L114.6 73.3L111.4 75.2L107.8 76.9L104.1 78.3L100.8 80.2L97.8 82.4L95.2 85.0L93.1 87.9L91.9 92.6L93.8 98.2L98.0 101.3L103.4 101.8L109.3 103.3L116.7 102.9L125.2 103.8L134.2 104.2"/><path d="M74.4 50.2L77.4 48.6L81.8 47.9L86.0 47.0L90.2 46.4L94.2 45.3L98.3 44.8L102.2 43.4L106.2 41.9L110.2 41.0L114.2 41.1L118.1 40.0L122.2 40.0L125.8 41.0L128.6 43.3L131.2 45.4L133.2 47.8L134.6 50.5L134.4 53.5L135.2 56.1L134.2 58.7L134.0 61.5L133.3 64.4L132.3 67.6L130.1 70.1L127.8 72.6L125.5 75.4L122.3 77.3L119.6 79.8L116.2 81.5L112.9 83.3L110.0 85.3L106.8 86.7L104.9 89.2L103.9 91.7L102.7 93.4L103.7 93.6L103.6 90.7L103.6 90.0L106.3 89.7L111.0 90.3L117.5 91.6L125.5 91.7L134.9 93.1L145.4 92.9L157.0 93.3L169.6 94.4L171.4 94.0"/><path d="M83.9 53.3L84.1 52.7L87.6 50.9L91.1 49.0L94.7 47.1L98.4 45.2L102.5 44.7L106.5 44.9L110.4 44.6L114.1 45.0L117.7 46.1L121.1 46.7L123.8 47.6L125.9 49.0L128.2 49.4L129.8 50.7L131.6 52.0L132.5 53.9L133.7 56.1L133.6 58.6L132.7 61.0L131.6 63.4L129.3 65.2L127.1 67.0L124.2 68.5L121.0 69.9L118.0 71.7L115.1 73.9L112.4 76.5L110.3 79.9L107.6 82.5L105.6 85.4L103.7 88.0L102.0 90.3L100.6 92.2L100.3 93.3L99.4 93.9L101.0 95.1L104.4 97.7L109.8 99.4L116.9 100.1L125.2 100.6L134.8 100.6L145.5 99.9L157.1 98.4L168.2 97.7"/><path d="M72.2 47.1L75.6 45.3L80.3 44.7L84.8 44.1L89.1 43.1L93.4 42.4L97.5 41.4L101.7 40.4L105.8 39.1L110.0 37.8L114.2 37.3L118.4 36.9L122.6 37.4L126.6 38.4L130.2 40.2L132.8 43.3L135.5 45.8L136.9 49.4L137.2 52.9L137.8 56.2L137.8 59.5L136.7 62.7L135.9 66.0L134.1 69.1L132.6 72.5L130.2 75.3L127.4 77.7L124.3 79.8L121.3 82.1L118.0 83.9L114.5 85.3L112.0 87.7L109.1 89.3L107.3 91.5L106.4 93.7L106.6 95.7L107.7 93.9L107.3 87.9L105.6 85.8L107.3 85.7L111.5 86.4L117.8 86.8L125.6 88.1L134.9 88.9L145.4 89.3L156.9 89.6L169.4 90.0L182.7 89.3L193.1 88.4"/><path d="M87.3 53.9L88.7 53.5L92.5 53.1L96.2 52.1L99.7 50.9L103.3 49.6L106.9 48.3L110.6 47.9L114.1 47.0L117.6 46.7L121.1 46.3L123.8 47.5L126.4 47.9L127.9 49.7L128.3 52.0L128.7 53.4L129.1 54.7L128.8 56.0L128.7 57.5L128.1 59.0L127.7 61.0L127.0 63.3L125.9 65.9L124.3 68.6L121.8 70.8L118.6 72.5L115.6 74.6L112.3 76.5L108.9 78.2L105.7 80.1L102.8 82.4L99.9 84.4L97.6 86.9L96.3 89.7L95.2 92.9L96.8 95.9L99.9 97.5L104.2 98.5L109.8 99.5L116.9 100.0L125.2 101.1L134.8 101.5L145.5 101.9L157.2 102.4L169.8 102.8L183.1 102.1L188.1 102.5"/><path d="M92.1 62.5L92.4 62.5L95.0 60.1L98.2 59.1L101.2 57.3L104.6 56.8L107.9 56.6L111.2 57.9L114.1 57.8L116.8 58.6L119.1 58.5L120.3 59.0L121.0 58.9L121.7 58.1L121.3 57.9L121.7 56.9L122.5 56.1L122.2 55.9L122.4 56.0L121.6 56.3L120.3 56.5L119.5 57.4L117.5 57.7L115.9 59.0L113.5 60.6L110.9 62.4L108.8 65.6L105.7 67.9L102.6 70.3L99.9 73.2L97.0 76.0L93.4 78.3L90.4 81.2L87.4 84.6L82.8 91.8L86.0 104.2L92.9 111.9L100.2 114.5L107.6 116.3L115.7 117.0L124.8 116.7L134.8 116.5L145.7 116.1L157.5 114.6L170.1 114.0"/><path d="M91.6 46.4L94.5 46.3L98.6 46.0L102.7 46.2L106.6 45.7L110.5 46.2L114.1 45.9L117.8 44.6L121.3 45.0L124.7 44.7L127.7 45.3L130.4 46.5L132.6 48.4L133.8 50.9L134.1 53.6L133.9 56.1L133.0 58.4L131.5 60.5L130.3 62.6L128.4 64.4L126.8 66.7L124.7 69.1L122.7 71.9L120.3 74.6L117.9 77.6L115.1 80.1L112.4 82.7L109.1 84.3L106.2 86.1L103.7 88.1L101.5 89.9L99.9 91.8L98.7 93.1L98.9 94.3L101.1 95.1L104.8 95.8L110.3 95.6L117.2 95.7L125.4 95.8L134.8 95.9L145.4 95.2L157.1 95.5L169.6 95.5L171.5 95.3"/><path d="M79.3 50.8L82.5 49.3L86.3 47.7L90.3 46.8L94.6 46.6L98.6 46.0L102.7 46.0L106.6 45.4L110.4 45.7L114.1 45.4L117.7 45.4L121.5 44.2L124.7 44.4L127.6 45.5L130.3 46.6L132.5 48.4L134.2 50.7L134.0 53.6L133.9 56.1L132.7 58.4L131.4 60.4L130.1 62.4L128.6 64.6L126.8 66.8L125.2 69.6L122.6 71.8L120.2 74.4L117.8 77.4L115.0 80.0L112.2 82.3L109.4 84.6L106.9 86.9L103.8 88.2L101.6 89.9L100.2 92.0L98.9 93.2L99.6 93.8L101.3 94.7L104.9 95.5L110.3 95.8L117.1 96.1L125.4 96.0L134.8 95.6L145.4 95.0L157.1 95.0L169.6 94.9L176.8 95.5"/><path d="M89.1 63.5L89.4 63.5L92.4 62.6L95.3 61.2L98.6 60.8L101.7 59.4L104.9 58.6L108.0 58.0L111.1 57.3L114.1 56.5L116.9 56.4L119.6 55.4L121.3 55.9L122.4 56.2L123.1 56.2L122.8 56.7L121.6 56.9L120.8 56.4L120.1 55.8L119.5 55.4L120.1 55.6L119.9 56.3L119.0 57.0L119.0 59.1L117.5 60.9L115.9 63.5L113.6 66.0L110.4 67.7L107.2 69.8L103.8 71.8L100.2 73.6L95.9 74.9L92.5 77.3L88.6 79.8L85.8 83.7L82.0 91.7L86.4 103.9L93.9 109.8L100.9 111.6L108.1 112.7L116.0 113.2L124.9 112.9L134.8 113.7L145.7 114.5L157.5 114.4L167.2 115.0"/><path d="M128.6 66.7L127.8 67.8L125.2 69.6L122.3 71.4L119.3 73.3L115.9 74.9L112.7 77.0L109.2 78.6L106.5 81.1L104.5 84.3L102.5 86.9L101.2 89.7L100.0 91.9L99.7 93.2L100.6 93.0L101.3 94.6L104.8 95.9L110.1 97.3L116.9 99.1L125.3 99.3L134.8 100.6L145.5 100.7L157.2 99.4L169.7 98.7L183.0 98.3L194.0 97.3"/><path d="M84.5 46.1L85.6 46.2L89.8 45.3L94.1 45.0L98.3 44.6L102.2 43.3L106.2 42.5L110.1 40.7L114.2 40.3L118.1 40.4L122.1 40.5L125.9 40.7L129.2 42.2L131.8 44.5L133.3 47.7L135.1 50.3L135.4 53.3L135.3 56.1L134.8 58.8L133.9 61.5L133.3 64.4L131.8 67.2L130.4 70.3L128.0 72.8L125.8 75.7L122.8 77.8L119.7 80.0L116.4 81.8L113.4 83.9L110.0 85.3L107.6 87.6L105.0 89.3L103.7 91.6L103.5 93.9L103.3 93.5L103.5 90.8L103.8 89.4L106.5 89.2L111.0 90.3L117.5 90.4L125.5 91.7L134.9 92.3L145.4 92.2L157.0 92.9L169.5 93.7L180.8 93.4"/><path d="M80.3 57.8L81.7 56.2L84.7 53.9L88.0 51.8L91.5 50.1L95.0 48.1L99.0 47.7L103.0 47.7L106.8 47.7L110.5 47.2L114.1 48.2L117.5 48.5L120.5 49.8L123.2 49.5L125.2 50.5L127.4 50.5L128.8 51.6L131.0 52.3L131.7 54.1L131.9 56.1L131.7 58.1L130.7 60.1L128.7 61.6L127.3 63.6L124.5 64.6L122.1 66.1L119.6 68.1L117.1 70.5L114.6 73.3L112.0 76.0L109.5 79.0L107.0 81.8L104.5 84.2L102.5 86.9L100.4 89.1L97.9 90.7L95.9 92.9L96.4 96.2L99.4 98.5L103.7 100.5L109.5 101.6L116.7 102.7L125.2 102.8L134.8 102.0L145.5 100.8L157.2 100.8L169.7 99.8L174.8 99.0"/><path d="M114.2 67.7L111.5 69.1L107.6 70.3L104.1 72.1L100.9 74.5L97.4 76.5L95.0 79.8L92.7 83.0L90.4 86.3L88.1 92.3L90.7 100.6L96.5 104.5L102.2 106.6L108.6 108.3L116.2 109.6L124.9 111.0L134.8 111.6L145.7 111.8L157.5 111.9L170.1 111.7L174.0 111.0"/><path d="M80.7 60.7L82.9 58.2L85.8 56.1L88.9 54.0L92.1 52.0L95.7 50.5L99.1 48.3L102.9 47.5L106.8 47.3L110.5 47.6L114.1 48.4L117.4 49.4L120.4 50.5L122.6 51.4L124.5 51.8L126.0 52.2L127.5 52.7L129.0 53.3L130.1 54.4L130.6 56.0L130.9 58.0L129.7 59.7L128.8 61.7L126.4 62.8L124.6 64.6L121.8 65.8L119.3 67.8L116.5 69.7L113.5 71.8L110.7 74.3L107.7 76.7L105.6 80.1L103.4 83.0L101.2 85.7L98.7 87.7L97.5 90.4L95.1 92.8L96.2 96.4L98.6 100.1L103.3 101.9L109.2 104.0L116.6 104.5L125.1 104.8L134.8 104.2L145.6 103.9L157.3 103.0L169.8 102.4L176.6 101.5"/><path d="M122.7 52.2L123.8 53.2L124.8 53.9L125.5 54.4L126.0 54.7L126.5 55.2L126.7 56.0L127.7 57.2L128.0 59.0L127.2 60.7L125.8 62.4L123.9 64.0L122.0 66.0L119.0 67.3L116.1 69.2L112.7 70.7L109.3 72.5L106.3 74.9L103.4 77.4L100.3 79.7L98.4 83.0L96.1 85.6L95.0 89.0L93.7 92.7L94.9 97.4L98.1 101.2L103.1 102.8L109.1 104.7L116.4 106.5L125.1 107.3L134.8 108.2L145.6 107.6L157.4 106.8L169.9 106.6L175.5 105.8"/><path d="M132.2 67.2L132.7 67.9L130.1 70.0L127.4 72.1L124.1 73.6L120.7 75.2L117.6 77.3L114.3 79.0L111.4 81.3L109.1 84.3L106.6 86.5L105.4 89.7L104.3 92.1L103.5 93.9L104.5 93.6L104.1 90.4L103.5 90.1L106.0 91.2L110.7 92.7L117.2 94.9L125.4 95.5L134.8 95.6L145.4 95.7L157.1 95.2L169.5 94.1L182.8 93.1L184.0 92.7"/><path d="M124.8 47.1L126.6 47.5L129.1 48.2L131.3 49.5L132.2 51.7L133.4 53.7L132.5 56.1L132.0 58.2L130.3 60.0L129.1 61.9L127.1 63.4L125.5 65.5L123.3 67.5L121.4 70.3L119.2 73.2L116.4 75.6L113.8 78.4L110.9 80.8L108.2 83.1L105.8 85.7L102.7 87.1L100.7 89.3L97.9 90.7L96.6 93.0L97.2 95.6L99.9 97.4L104.2 98.2L109.9 98.9L117.0 98.9L125.3 98.4L134.8 98.8L145.5 97.7L157.1 97.7L169.7 97.4L170.0 98.0"/><path d="M90.1 71.0L89.8 70.4L92.0 69.1L94.2 67.1L96.7 65.1L99.4 63.4L102.2 61.5L105.0 59.1L108.1 58.4L111.1 57.8L114.1 58.4L116.7 58.9L118.9 59.3L119.9 60.4L120.2 60.5L119.3 61.2L118.0 60.7L117.1 59.2L117.0 57.3L117.4 55.8L118.0 55.0L119.0 55.2L119.6 56.1L118.8 56.8L118.0 58.1L115.7 58.9L113.6 60.7L110.2 61.6L107.1 63.4L103.7 65.2L100.3 67.4L96.6 69.3L93.2 71.9L89.7 74.7L86.9 78.5L84.0 82.7L80.5 91.6L84.7 105.2L92.5 112.6L99.9 115.8L107.4 117.6L115.6 119.0L124.7 120.1L134.8 120.5L145.8 121.5L157.7 120.4L170.4 120.3L177.2 119.2"/><path d="M86.7 70.3L88.6 68.2L90.1 65.1L92.7 63.3L95.4 61.4L98.3 59.7L101.4 58.4L104.7 57.5L108.0 57.3L111.1 57.2L114.1 58.0L116.7 59.2L119.0 59.3L120.2 59.6L120.7 59.6L121.1 58.8L121.4 57.9L121.5 57.0L121.2 56.4L121.8 55.9L121.5 55.8L121.1 56.0L120.5 56.6L119.2 57.1L117.6 57.7L115.7 58.8L113.3 60.3L111.1 62.7L108.3 65.0L105.4 67.4L102.7 70.3L99.6 72.9L96.3 75.3L93.2 78.0L90.0 80.9L87.1 84.4L82.6 91.8L85.2 104.8L93.0 111.7L100.1 115.0L107.5 117.3L115.7 117.5L124.8 117.9L134.8 116.7L145.7 116.7L157.6 115.5L170.2 114.3L183.2 114.1"/><path d="M77.4 49.1L78.0 49.7L81.8 47.8L86.1 47.2L90.3 46.8L94.2 45.3L98.3 44.6L102.3 43.6L106.2 42.6L110.2 41.4L114.2 40.5L118.1 40.4L122.1 40.6L125.6 41.7L128.8 42.9L131.4 45.1L132.7 48.3L133.8 50.9L134.1 53.6L134.3 56.1L134.6 58.8L134.1 61.6L132.7 64.0L131.8 67.2L130.2 70.2L127.8 72.5L125.5 75.4L122.1 76.9L119.0 79.1L116.0 81.2L112.4 82.7L109.6 84.8L107.0 87.0L105.0 89.3L103.5 91.5L102.6 93.3L103.2 93.5L102.9 91.2L103.6 89.8L106.2 90.3L110.9 91.2L117.4 91.9L125.5 92.6L134.9 93.6L145.4 94.0L157.0 94.6L165.1 94.5"/><path d="M81.7 53.0L83.8 52.0L87.3 50.2L91.0 48.6L94.7 47.1L98.7 46.3L102.7 45.8L106.6 45.9L110.5 46.9L114.1 46.6L117.6 47.4L120.9 47.6L123.6 48.1L125.9 49.0L128.7 48.8L130.3 50.3L132.0 51.8L133.6 53.7L133.7 56.1L133.0 58.4L131.8 60.6L129.9 62.4L127.5 63.8L125.2 65.3L123.2 67.3L120.8 69.5L118.1 71.8L115.7 74.7L113.0 77.4L110.7 80.4L108.1 83.0L105.7 85.6L103.3 87.7L101.2 89.7L99.3 91.4L98.0 93.1L98.0 95.0L100.0 97.2L104.0 99.0L109.8 99.5L116.8 100.5L125.3 100.3L134.8 99.3L145.5 99.2L157.1 98.2L169.7 97.7L175.5 97.1"/><path d="M85.7 59.8L87.6 59.9L90.6 58.2L94.0 57.3L97.3 56.1L100.5 54.4L103.9 53.2L107.3 51.9L110.7 50.2L114.1 49.8L117.4 50.2L120.4 50.6L122.6 51.3L124.3 52.2L125.0 53.6L125.1 54.7L124.7 55.4L124.4 55.7L125.0 55.9L124.9 56.6L125.2 57.8L125.3 59.6L124.4 61.2L123.7 63.7L121.4 65.3L119.3 67.7L116.0 69.1L112.9 71.0L109.5 72.8L105.6 74.0L102.4 76.3L98.9 78.2L96.3 81.0L94.3 84.2L92.3 87.4L90.9 92.5L93.2 98.6L97.8 101.8L102.8 104.0L109.1 105.1L116.4 106.5L125.1 107.2L134.8 107.7L145.6 109.1L157.4 109.2L170.0 109.1L179.4 108.3"/><path d="M85.1 52.7L88.0 51.9L91.5 50.1L95.0 48.0L98.6 45.9L102.5 45.0L106.4 44.4L110.3 43.9L114.1 43.2L117.8 44.1L121.3 45.4L124.2 46.3L126.3 48.1L127.9 49.8L129.5 51.0L130.2 52.7L131.1 54.2L132.6 56.1L132.8 58.4L132.4 60.8L132.0 63.7L130.2 65.9L127.9 67.9L125.1 69.5L122.3 71.4L118.8 72.8L115.7 74.6L112.8 77.1L109.4 78.9L106.9 81.6L104.6 84.3L102.8 87.2L101.4 89.8L100.7 92.3L100.5 93.3L100.2 93.3L101.7 93.7L104.9 95.5L110.1 97.1L117.0 98.1L125.3 99.1L134.8 100.0L145.5 100.6L157.2 99.6L169.7 98.4L180.2 97.4"/><path d="M83.7 49.8L86.7 48.7L91.0 48.6L94.8 47.3L98.5 45.7L102.5 44.9L106.4 43.7L110.2 42.4L114.2 42.1L118.0 42.1L121.8 42.3L125.2 42.8L127.7 45.2L130.0 47.0L131.8 49.0L132.1 51.7L132.4 54.0L132.6 56.1L132.4 58.3L132.6 60.9L132.4 63.9L130.5 66.2L129.1 69.0L126.7 71.3L124.1 73.6L121.3 75.9L118.4 78.2L114.5 79.3L111.7 81.8L108.4 83.5L105.7 85.6L103.7 88.0L102.0 90.3L100.9 92.4L101.7 93.4L101.7 92.2L102.9 91.4L105.8 91.9L110.6 93.5L117.3 93.7L125.4 94.3L134.8 95.7L145.5 96.3L157.1 96.7L169.6 97.1L182.9 96.0L196.1 95.5"/><path d="M102.6 62.1L105.2 60.6L108.3 59.8L111.2 58.3L114.1 58.2L116.8 57.8L119.1 58.5L120.3 59.1L120.5 59.9L119.8 60.6L119.1 59.8L118.0 58.7L117.0 57.3L117.2 55.8L117.3 54.9L117.5 54.5L118.6 55.5L118.5 56.5L118.1 58.2L116.2 59.3L114.1 61.3L111.2 62.9L107.8 64.3L104.6 66.4L100.5 67.6L96.8 69.6L92.6 71.3L89.0 74.0L86.2 77.9L82.7 81.9L80.2 91.6L84.4 105.4L92.6 112.5L100.1 115.1L107.6 116.4L115.7 117.7L124.7 118.7L134.8 119.6L145.8 120.6L157.7 120.3L170.4 120.5L177.5 120.5"/><path d="M76.1 51.6L78.2 49.9L82.2 48.8L86.4 48.0L90.4 46.9L94.6 46.6L98.7 46.3L102.7 45.9L106.6 45.9L110.4 44.5L114.1 44.2L117.8 44.2L121.7 43.1L124.9 44.0L128.1 44.5L130.8 45.9L132.4 48.5L133.5 51.1L134.5 53.5L133.9 56.1L133.2 58.5L131.8 60.6L130.4 62.7L129.3 65.1L127.5 67.5L126.0 70.6L123.8 73.3L121.1 75.7L118.5 78.3L115.5 80.6L112.4 82.6L109.4 84.6L106.8 86.8L104.2 88.5L102.1 90.4L99.9 91.8L99.1 93.2L99.7 93.7L101.7 93.8L105.2 94.5L110.5 94.5L117.3 94.1L125.4 94.1L134.9 94.9L145.4 94.8L157.1 95.2L169.6 95.3L171.6 95.2"/><path d="M81.3 54.5L83.7 51.8L87.5 50.6L90.9 48.4L94.9 47.6L98.8 47.0L102.8 46.6L106.7 46.8L110.5 47.0L114.1 47.8L117.6 47.7L120.8 48.4L123.5 48.4L125.9 49.0L128.5 49.0L130.5 50.1L131.7 51.9L132.4 53.9L132.4 56.1L131.5 58.1L130.3 60.0L129.4 62.0L127.1 63.4L124.9 64.9L122.6 66.7L120.5 69.2L118.2 71.9L115.8 74.8L113.2 77.6L110.7 80.4L107.9 82.8L105.5 85.4L102.6 87.0L100.8 89.3L98.3 90.9L96.9 93.0L97.1 95.7L99.7 97.9L103.9 99.7L109.6 100.8L116.8 100.8L125.3 100.4L134.8 99.6L145.5 99.0L157.2 98.9L169.7 97.7L181.7 98.1"/><path d="M82.0 59.7L83.5 59.4L86.2 56.9L89.6 55.7L92.7 53.5L95.9 51.2L99.6 50.2L103.1 48.3L106.8 47.8L110.5 47.4L114.1 47.4L117.5 48.3L120.6 49.2L122.8 50.9L124.3 52.3L125.9 52.5L126.7 53.3L127.4 54.1L128.2 54.9L129.2 56.0L129.4 57.6L129.0 59.4L128.9 61.8L127.4 63.7L125.1 65.1L122.5 66.5L119.5 67.9L116.5 69.8L113.1 71.3L109.9 73.3L106.9 75.7L104.5 78.8L101.6 81.1L99.8 84.3L97.9 87.0L96.4 89.8L96.0 92.9L95.9 96.6L99.0 99.4L103.4 101.5L109.3 103.3L116.6 104.3L125.1 105.4L134.8 105.5L145.6 105.2L157.3 104.7L169.8 103.6L175.5 103.6"/><path d="M73.9 46.8L75.7 45.5L80.2 44.5L84.9 44.4L89.1 43.3L93.3 42.2L97.6 41.7L101.6 39.9L105.9 39.4L110.0 37.7L114.2 36.8L118.3 37.4L122.5 37.9L126.6 38.2L129.9 40.8L132.6 43.5L134.8 46.5L136.5 49.6L137.0 53.0L137.3 56.2L137.4 59.5L136.6 62.6L136.3 66.2L134.8 69.6L132.6 72.6L129.9 74.9L127.6 77.9L124.3 79.9L120.9 81.6L117.3 83.0L114.5 85.3L111.4 87.0L109.6 89.8L107.6 91.8L106.8 94.0L106.7 95.7L107.3 93.9L107.2 88.0L105.7 85.5L107.4 85.6L111.6 85.8L117.7 87.6L125.6 88.2L134.9 89.3L145.4 89.1L156.9 89.9L166.6 90.1"/><path d="M119.2 71.2L118.1 71.8L115.2 74.1L111.9 75.9L109.4 78.8L106.4 81.1L104.5 84.2L102.9 87.3L101.2 89.7L99.8 91.7L99.5 93.2L99.4 94.0L100.9 95.5L104.5 97.0L109.9 99.1L116.9 100.4L125.2 101.4L134.8 101.1L145.5 100.6L157.2 100.6L169.7 99.5L173.3 98.5"/><path d="M82.2 43.9L84.3 43.0L88.5 41.5L93.1 41.4L97.7 41.9L101.9 41.7L106.1 41.6L110.2 41.5L114.2 41.3L118.1 40.4L122.0 41.0L125.9 40.5L129.5 41.5L133.1 42.9L136.2 45.3L138.2 48.7L138.7 52.6L138.2 56.2L137.4 59.4L135.8 62.3L133.6 64.6L131.8 67.2L129.7 69.7L127.6 72.3L125.5 75.3L122.6 77.6L120.4 80.9L117.8 83.7L114.9 85.7L112.6 88.4L109.9 90.2L107.9 92.1L106.3 93.7L105.0 94.7L104.9 93.7L104.0 90.4L103.8 89.4L106.4 89.2L111.1 89.6L117.6 90.0L125.6 89.5L134.9 88.9L145.4 89.2L156.9 88.6L169.4 89.3L182.7 89.6L183.2 89.2"/><path d="M69.5 41.3L72.4 39.7L77.5 38.9L82.3 37.9L87.0 37.1L91.9 37.3L96.5 36.7L101.0 36.4L105.5 36.0L109.8 35.4L114.2 34.6L118.6 34.1L123.1 34.1L127.7 34.6L132.1 36.3L136.4 38.5L139.8 42.2L142.0 46.8L142.9 51.7L142.7 56.3L141.7 60.4L140.7 64.3L138.7 67.7L136.8 71.1L134.8 74.7L132.5 77.9L129.5 80.3L126.9 83.1L123.9 85.5L121.0 87.8L118.7 90.5L115.9 92.4L113.4 93.9L111.5 95.5L111.0 97.3L110.6 98.0L112.1 94.3L110.5 85.5L108.0 80.8L108.6 80.6L112.3 80.4L118.2 80.9L125.8 80.2L134.9 81.3L145.3 81.9L156.7 82.2"/><path d="M85.9 61.5L87.6 60.0L90.3 57.5L93.5 56.0L97.1 55.3L100.6 54.5L104.0 53.4L107.6 54.1L111.0 54.6L114.1 54.3L117.1 54.7L119.7 55.1L121.6 54.8L122.9 55.1L124.0 55.0L125.1 54.7L125.4 55.1L125.5 55.4L126.2 56.0L125.2 56.7L124.8 57.6L123.1 58.2L122.2 59.5L120.3 60.4L118.2 61.6L116.1 63.7L113.9 66.3L111.5 69.2L108.5 71.5L105.8 74.3L103.1 77.1L99.7 79.0L96.7 81.4L93.7 83.8L90.9 86.6L87.4 92.2L89.8 101.3L95.2 106.6"/><path d="M76.0 53.6L79.4 52.1L83.2 50.7L86.9 49.3L90.9 48.4L94.7 46.9L98.4 44.9L102.3 43.9L106.2 42.4L110.2 42.0L114.2 41.9L118.0 41.6L121.7 42.8L124.9 43.9L127.3 46.1L129.5 47.6L130.6 50.0L131.7 51.9L133.4 53.7L133.6 56.1L134.5 58.8L134.4 61.7L133.5 64.6L131.7 67.1L129.3 69.3L127.3 72.0L123.7 73.2L120.8 75.2L117.5 77.1L113.9 78.6L110.8 80.6L108.2 83.2L105.9 85.7L103.8 88.1L102.6 90.7L102.7 93.4L102.6 93.5L102.3 91.7L102.8 91.5L105.8 91.9L110.5 94.1L117.2 95.1L125.4 96.4L134.8 96.6L145.5 97.5L157.1 97.1L169.5 96.0"/><path d="M74.8 51.0L77.9 49.5L81.2 46.7L85.1 44.8L88.9 42.7L93.2 41.7L97.2 39.9L101.7 40.1L105.9 39.6L110.1 40.1L114.2 40.0L118.1 40.9L121.9 41.8L125.1 43.3L128.4 43.9L131.3 45.3L133.4 47.6L135.8 49.9L137.5 52.8L138.6 56.2L138.8 59.8L137.7 63.1L135.4 65.7L133.5 68.5L130.7 70.6L127.3 72.0L124.2 73.8L121.6 76.3L118.6 78.6L115.4 80.5L113.5 84.1L111.2 86.7L109.2 89.4L108.4 92.5L107.3 94.5L106.4 95.6L106.9 93.8L104.8 89.8L104.1 89.0L106.1 90.7L110.8 91.8L117.4 92.3L125.5 92.6L134.9 92.7L145.4 91.9L157.0 91.5L169.4 89.8L173.2 89.5"/><path d="M79.9 47.1L80.9 46.1L84.9 44.4L89.3 43.9L93.4 42.5L98.0 43.2L102.2 43.2L106.3 43.2L110.3 42.9L114.2 42.7L118.0 42.6L121.7 42.8L125.3 42.5L128.4 43.8L131.6 44.9L134.6 46.6L136.2 49.7L137.0 53.0L136.7 56.2L135.6 59.0L135.0 61.9L132.4 63.9L130.4 66.0L128.2 68.2L126.2 70.8L124.2 73.8L121.5 76.2L119.0 79.1L116.7 82.1L114.2 84.9L111.2 86.8L108.9 89.0L107.0 91.2L104.8 92.5L103.5 93.8L102.2 93.4L102.0 91.9L102.8 91.6L105.7 92.1L110.7 93.1L117.4 92.7L125.5 92.4L134.9 91.9L145.4 91.2L156.9 90.7L169.5 91.1L172.9 90.8"/><path d="M122.2 56.6L122.7 56.6L122.8 56.7L122.2 56.7L121.8 56.2L120.9 55.9L120.5 55.6L119.5 55.4L119.4 55.9L118.9 56.8L117.9 58.0L117.1 60.5L115.4 62.9L112.7 64.8L110.5 67.9L107.3 70.0L104.0 72.1L100.4 73.8L96.8 75.8L92.7 77.6L89.5 80.4L85.8 83.7L81.7 91.7L85.2 104.8L93.3 111.1L100.6 112.9L108.0 113.2L116.0 113.5L124.9 114.2L134.8 114.1L145.7 113.6L157.3 114.0"/><path d="M83.2 38.3L86.7 36.2L91.3 35.1L96.1 35.0L100.8 34.9L105.3 34.7L109.8 35.0L114.2 35.7L118.4 36.8L122.6 37.2L126.7 38.1L130.8 38.8L134.6 40.8L138.8 43.0L142.1 46.8L144.2 51.4L144.7 56.3L143.3 60.8L141.5 64.7L139.4 68.2L136.8 71.1L133.6 73.5L130.3 75.5L127.5 77.8L124.7 80.4L121.9 82.8L119.5 85.8L117.1 88.6L115.8 92.2L113.9 94.5L113.2 97.1L111.8 98.0L111.7 98.6L112.5 94.3L110.5 85.5L106.9 83.1L107.9 83.2L111.8 84.2L117.9 84.9L125.7 84.5L134.9 84.6L145.3 82.9L156.7 82.3L160.0 81.8"/><path d="M127.3 54.8L127.1 55.1L127.7 56.0L127.6 57.2L126.8 58.5L126.0 60.0L124.3 61.2L122.4 62.4L119.6 63.3L116.9 64.7L114.6 67.3L111.8 69.6L109.1 72.3L106.2 74.8L103.4 77.4L100.6 79.9L98.6 83.1L96.1 85.7L93.2 88.0L91.5 92.5L92.0 99.6L96.5 104.4L102.1 106.9L108.7 107.9L116.3 109.1L125.0 109.6L134.8 108.9L145.6 108.0L157.4 107.4L169.9 106.5L179.3 105.8"/><path d="M84.5 56.3L85.2 54.8L88.4 52.8L91.6 50.6L95.4 49.4L99.1 48.2L102.8 46.8L106.7 46.4L110.5 46.4L114.1 47.1L117.5 48.1L120.7 48.8L123.0 50.2L125.0 50.8L126.8 51.2L127.9 52.3L129.5 53.0L130.7 54.3L131.0 56.1L131.6 58.1L130.5 60.0L129.8 62.3L127.3 63.6L125.6 65.6L122.5 66.5L119.6 68.1L117.0 70.4L114.0 72.4L111.1 74.9L108.3 77.4L106.1 80.7L103.6 83.2L101.7 86.1L100.2 88.9L98.1 90.8L96.5 93.0L97.2 95.6L99.5 98.2L103.7 100.5L109.4 102.6L116.7 103.3L125.2 103.9L134.8 103.7L145.5 102.3L157.2 102.0L164.2 101.7"/><path d="M81.4 58.9L82.9 58.3L85.6 55.7L88.5 53.2L91.9 51.4L95.5 49.8L99.3 49.0L103.3 49.3L107.0 49.4L110.7 49.7L114.1 50.5L117.4 50.3L120.3 51.3L122.6 51.4L124.9 51.0L126.5 51.7L127.8 52.4L129.3 53.1L130.4 54.4L129.9 56.0L130.0 57.7L129.0 59.4L127.3 60.8L125.7 62.3L123.6 63.6L121.1 65.0L119.1 67.5L116.5 69.7L113.9 72.3L111.2 75.0L108.5 77.7L106.1 80.7L103.0 82.6L101.1 85.5L98.7 87.7L95.9 89.5L94.1 92.8L94.8 97.4L98.1 101.2L103.1 102.8L109.2 104.1L116.6 104.8L125.1 105.2L134.8 104.1L145.6 103.6L157.2 102.7L163.2 101.7"/><path d="M138.1 49.0L138.7 52.6L138.7 56.2L138.9 59.8L137.6 63.0L136.8 66.6L135.0 69.8L133.2 73.2L130.9 76.1L128.2 78.6L125.3 81.2L122.0 83.0L118.6 84.7L116.1 87.3L113.0 88.9L110.6 90.9L108.8 92.9L107.6 94.7L107.9 96.4L109.7 94.1L108.5 87.0L106.3 84.3L107.8 83.8L111.8 84.4L117.9 84.7L125.7 85.8L134.9 85.9L145.3 86.7L156.9 87.4L167.6 87.1"/><path d="M75.1 48.8L76.8 47.5L80.2 44.5L84.3 42.8L88.4 41.1L92.6 39.7L97.0 39.0L101.4 38.9L105.9 39.6L110.1 40.1L114.2 40.1L118.1 41.1L122.0 41.2L125.6 41.6L128.7 43.2L132.2 44.0L135.4 46.0L138.0 48.8L139.1 52.5L140.4 56.2L139.8 60.0L137.9 63.1L135.5 65.8L133.6 68.6L130.5 70.4L127.4 72.1L124.9 74.6L122.3 77.2L119.5 79.8L116.7 82.2L114.7 85.6L112.6 88.4L110.9 91.3L108.9 93.0L107.9 94.9L106.9 95.8L107.3 93.9L105.4 89.4L104.5 88.1L106.4 89.6L111.0 90.4L117.5 90.6L125.5 90.4L134.9 90.4L145.4 89.6L156.9 89.0L169.4 88.0L182.6 87.7L183.5 87.1"/><path d="M89.3 63.8L89.3 63.4L92.2 62.0L95.1 60.5L98.1 58.8L101.2 57.3L104.4 55.8L107.6 54.3L110.9 53.5L114.1 52.9L117.2 53.0L119.8 54.2L121.7 54.6L122.8 55.4L122.6 56.8L122.2 57.1L122.1 56.7L121.5 56.3L121.5 55.9L122.5 56.0L122.9 56.8L122.8 58.0L122.4 59.6L121.0 61.1L119.6 63.3L117.0 64.9L114.2 66.7L110.4 67.7L107.3 69.9L103.3 71.2L99.9 73.3L97.0 76.0L93.4 78.2L91.3 81.9L89.3 85.7L86.4 92.1L89.9 101.2L95.9 105.8L101.8 108.1L108.4 110.1L116.1 111.5L124.9 112.4L134.8 113.2L145.7 113.5L157.5 114.1L157.6 113.3"/><path d="M85.0 55.3L85.1 54.7L88.6 53.3L92.3 52.4L95.7 50.4L99.4 49.3L102.9 47.4L106.7 46.9L110.4 45.2L114.1 45.6L117.7 45.8L121.2 45.7L123.9 47.3L126.1 48.4L127.5 50.3L128.5 51.8L128.8 53.4L129.5 54.6L129.6 56.0L129.6 57.7L129.9 59.8L129.1 61.9L128.3 64.4L126.6 66.6L124.7 69.1L121.7 70.7L118.5 72.3L115.1 73.9L111.7 75.7L108.7 78.0L105.2 79.6L102.8 82.3L100.2 84.7L99.1 88.0L97.6 90.5L97.1 93.0L98.0 95.0L100.5 96.3L104.5 97.3L109.9 98.7L116.9 100.1L123.5 100.4"/><path d="M81.8 41.4L83.4 40.6L87.6 39.0L92.2 38.4L96.4 36.5L100.8 35.3L105.2 34.2L109.7 33.5L114.2 33.7L118.6 34.3L123.0 35.1L126.9 37.3L130.8 39.0L133.7 42.0L136.9 44.7L138.9 48.3L140.6 52.2L142.1 56.3L141.6 60.4L141.2 64.5L140.1 68.6L137.8 72.0L135.0 74.9L131.6 76.9L128.4 79.0L125.5 81.3L121.6 82.5L118.6 84.6L115.7 86.9L113.9 90.0L112.1 92.5L110.6 94.7L110.4 96.9L111.2 98.3L113.3 94.4L111.4 84.7L107.8 81.2L108.3 81.6L112.0 82.8L118.0 84.1L125.7 85.3L134.9 86.2L145.3 86.1L156.8 85.9L169.2 84.4L181.1 83.9"/><path d="M88.3 70.9L89.5 69.8L92.0 69.0L94.3 67.2L96.9 65.9L99.5 63.8L102.4 62.4L105.1 60.2L108.1 58.9L111.2 58.0L114.1 57.6L116.8 58.3L119.0 58.9L120.3 59.1L120.6 59.9L119.7 60.7L118.7 60.1L117.7 58.9L116.6 57.4L116.9 55.8L117.8 55.0L118.0 54.7L118.8 55.6L118.6 56.6L117.9 58.0L116.1 59.3L113.6 60.7L111.2 62.9L107.7 64.2L104.1 65.7L100.1 67.1L96.3 69.0L93.2 72.0L89.8 74.8L86.2 77.9L83.7 82.5L80.0 91.6L84.4 105.4L92.6 112.4L100.1 115.1L107.6 116.5L115.6 118.3L124.7 119.6L134.8 120.0L145.8 120.5L156.5 120.9"/><path d="M82.7 44.4L84.9 44.3L88.9 42.6L92.8 40.4L97.0 39.1L101.3 38.3L105.6 37.5L109.9 37.2L114.2 37.8L118.3 38.5L122.4 38.7L126.0 40.3L129.0 42.5L131.9 44.4L134.6 46.6L136.6 49.5L138.5 52.6L138.9 56.2L139.1 59.8L138.5 63.4L137.6 67.0L135.0 69.7L132.5 72.5L129.8 74.8L126.1 76.1L122.8 77.8L119.8 80.1L116.5 81.9L113.8 84.4L111.9 87.6L110.1 90.3L108.5 92.7L107.9 94.9L108.5 96.8L109.4 94.0L107.9 87.4L105.5 85.9L107.0 86.9L111.4 87.8L117.6 89.3L125.5 90.0L134.9 90.3L145.4 90.6L156.7 89.3"/><path d="M82.2 49.0L82.4 49.1L86.2 47.4L89.9 45.5L93.7 43.7L97.7 42.1L101.9 41.4L106.0 40.9L110.2 41.2L114.2 41.6L118.0 42.5L121.6 43.5L124.7 44.5L127.5 45.7L129.9 47.1L131.8 49.0L133.9 50.9L136.1 53.1L136.3 56.2L137.2 59.4L136.2 62.4L134.9 65.4L132.7 67.9L129.7 69.7L126.5 71.1L123.8 73.3L120.7 75.2L117.3 76.8L114.4 79.2L111.8 81.8L109.6 84.8L108.1 88.1L106.6 90.8L105.5 93.0L104.5 94.4L104.4 93.6L103.8 90.6L103.0 91.0L105.7 92.3L110.6 93.4L117.2 94.9L125.4 95.1L134.8 95.6L145.4 94.9L157.0 94.1L169.5 92.9L180.0 91.8"/><path d="M80.9 40.7L82.9 39.5L87.5 38.5L91.7 36.6L96.3 36.0L101.0 36.4L105.5 36.6L109.9 36.2L114.2 37.0L118.3 38.2L122.3 39.0L126.2 39.5L130.1 40.4L133.8 41.9L137.1 44.5L139.9 47.9L142.3 51.8L142.8 56.3L142.0 60.5L140.4 64.2L138.4 67.5L135.9 70.5L132.3 72.2L129.7 74.7L126.6 76.7L123.8 79.1L121.3 82.1L118.8 85.0L116.5 87.8L114.3 90.4L112.9 93.4L111.4 95.4L110.9 97.3L110.4 97.8L110.8 94.2L108.9 86.7L106.2 84.6L107.3 85.8L111.6 86.0L117.8 86.4L125.6 86.6L134.9 86.0L145.3 85.6L156.8 84.4L169.2 83.8L170.6 83.3"/><path d="M84.4 41.7L88.3 40.9L92.7 40.1L97.0 39.2L101.3 38.2L105.5 36.5L109.8 35.8L114.2 34.9L118.5 35.1L122.9 35.7L127.0 37.1L130.6 39.3L134.0 41.6L136.1 45.4L137.9 48.9L139.5 52.4L139.5 56.2L139.0 59.8L138.4 63.4L137.4 67.0L136.4 70.9L133.7 73.6L131.3 76.6L128.3 78.8L125.1 80.8L121.7 82.5L118.5 84.5L115.7 86.8L112.6 88.5L110.9 91.3L109.3 93.3L108.1 95.1L108.8 96.9L110.4 94.1L108.9 86.7L106.8 83.4L108.0 83.1L111.9 84.0L117.9 84.6L125.7 85.9L134.9 86.9L145.3 86.8L156.9 87.3L169.3 87.3L172.3 86.8"/><path d="M89.7 66.5L90.5 65.9L93.4 64.9L96.2 63.8L99.3 63.2L102.4 62.4L105.2 60.6L108.2 59.2L111.2 59.1L114.1 58.2L116.9 57.3L119.3 57.4L120.9 57.1L121.4 58.1L121.2 58.7L121.0 58.2L119.6 57.9L118.7 56.9L118.3 55.8L118.3 55.1L118.2 54.9L118.8 55.6L118.3 56.4L118.1 58.2L116.7 60.0L114.5 61.8L112.1 64.1L109.5 66.6L106.2 68.5L102.0 69.5L98.5 71.6L94.2 73.1L90.7 75.6L86.7 78.3L83.6 82.4L80.3 91.6L84.2 105.5L92.9 111.8L100.4 114.0L107.8 114.8L115.8 115.2L124.8 115.9L134.8 116.6L145.8 117.3L157.6 117.4L170.3 118.5L183.7 118.4L190.2 118.5"/><path d="M75.9 49.2L77.6 48.8L81.6 47.4L85.7 46.3L89.9 45.6L94.1 44.9L98.1 43.9L102.2 43.0L106.1 41.2L110.1 40.4L114.2 40.1L118.2 39.7L122.2 39.8L125.8 40.9L129.1 42.3L131.4 45.1L133.2 47.8L134.8 50.4L135.3 53.3L135.3 56.1L134.8 58.8L135.0 61.9L133.4 64.5L132.2 67.5L130.5 70.5L128.4 73.3L125.9 75.9L122.6 77.6L119.9 80.2L116.5 81.9L113.0 83.4L110.3 85.6L107.7 87.7L105.7 90.0L103.9 91.7L103.3 93.7L104.2 93.6L104.6 89.9L104.0 89.0L106.5 89.2L111.1 89.5L117.6 90.2L125.5 91.2L134.9 91.9L145.4 92.4L157.0 93.6L163.9 93.4"/><path d="M80.6 48.6L81.9 48.1L85.7 46.4L89.5 44.4L93.5 42.7L97.6 41.7L101.7 40.5L105.9 39.5L110.0 39.1L114.2 39.0L118.1 40.5L122.0 40.7L125.3 42.6L128.4 43.9L130.9 45.8L132.6 48.3L134.6 50.5L136.3 53.1L136.9 56.2L137.9 59.6L137.1 62.8L135.3 65.6L133.4 68.5L131.1 71.1L128.0 72.8L124.7 74.4L121.8 76.6L118.7 78.6L115.1 80.1L112.6 82.9L110.0 85.3L108.2 88.3L107.1 91.3L106.5 93.8L105.8 95.2L106.6 93.8L105.6 89.2L104.3 88.4L106.4 89.3L110.9 91.2L117.4 91.7L125.5 92.6L134.9 93.3L145.4 93.0L157.0 93.2L167.4 92.1"/><path d="M109.1 47.5L110.5 46.5L114.1 46.5L117.8 45.3L121.2 45.6L124.2 46.2L126.6 47.5L127.8 49.9L129.0 51.4L129.0 53.3L129.5 54.6L129.3 56.0L128.8 57.5L128.4 59.2L128.2 61.3L127.3 63.6L126.1 66.1L124.3 68.6L121.8 70.8L119.1 73.0L116.4 75.6L112.9 77.2L109.4 78.9L106.1 80.7L102.6 82.2L100.0 84.5L98.1 87.2L96.9 90.1L96.4 92.9L97.8 95.2L100.4 96.5L104.4 97.4L109.9 98.7L117.0 98.9L125.3 99.9L134.8 100.7L145.5 101.7L157.2 101.9L169.8 101.6L183.1 101.6L190.0 101.2"/><path d="M81.3 56.5L81.8 56.3L84.7 53.9L88.1 52.1L92.0 51.6L95.9 51.1L99.6 50.2L103.4 50.0L107.1 49.8L110.7 49.8L114.1 50.0L117.4 49.6L120.7 48.9L123.4 48.8L125.9 49.0L127.6 50.1L129.5 50.9L130.4 52.6L130.4 54.4L129.5 56.0L128.5 57.4L127.9 58.9L126.3 60.1L125.4 62.1L123.9 63.9L122.0 66.0L119.8 68.3L117.5 71.0L114.9 73.7L112.5 76.7L109.7 79.2L106.6 81.3L103.6 83.3L100.4 84.9L97.3 86.6L94.9 88.9L92.9 92.7L94.4 97.8L98.4 100.5L103.2 102.4L109.4 102.6L116.7 102.9L125.2 102.2L134.8 101.5L145.5 101.3L157.2 101.8L169.8 101.2L183.1 101.7L197.1 101.9"/><path d="M94.9 64.9L96.2 63.7L99.2 62.8L102.0 60.6L104.9 58.9L108.0 57.4L111.1 56.7L114.1 56.0L116.9 56.7L119.5 56.3L120.8 57.4L121.3 58.3L120.8 59.3L120.0 59.0L118.8 58.3L118.8 56.9L118.3 55.8L119.1 55.2L119.4 55.3L119.7 56.2L120.0 57.7L119.0 59.1L117.3 60.7L114.8 62.2L112.4 64.4L111.2 64.7"/><path d="M130.7 53.8L131.1 54.2L130.4 56.0L130.2 57.8L129.2 59.5L127.3 60.8L125.4 62.1L123.9 64.0L121.9 65.9L119.4 67.8L117.0 70.3L114.3 72.9L111.4 75.3L109.3 78.8L106.5 81.1L104.1 83.8L101.3 85.8L98.5 87.5L96.4 89.8L94.0 92.8L95.2 97.2L98.3 100.7L103.3 102.1L109.3 103.4L116.7 103.3L125.2 103.6L134.8 102.8L145.5 102.2L157.2 101.5L169.8 100.9L183.1 100.1L197.0 100.4L197.1 101.0"/><path d="M81.6 51.5L83.2 50.7L86.4 48.1L90.1 46.1L93.9 44.4L98.1 43.8L102.0 42.3L106.2 42.4L110.2 41.8L114.2 42.3L117.9 43.8L121.4 44.3L124.3 45.7L126.8 47.0L129.3 47.9L131.2 49.5L133.5 51.0L135.1 53.4L136.1 56.2L135.5 59.0L134.7 61.8L133.4 64.5L131.3 66.8L128.3 68.3L125.9 70.4L122.6 71.7L119.4 73.5L116.5 75.8L113.6 78.1L111.3 81.3L108.9 84.0L106.7 86.7L105.7 89.9L104.1 91.9L103.1 93.6L102.7 93.5L102.1 91.8L102.2 92.8L105.2 94.3L108.7 95.6"/><path d="M125.2 55.4L124.6 55.6L124.1 55.9L123.1 56.2L122.7 56.7L121.8 57.4L120.9 58.4L119.7 59.8L118.3 61.8L116.8 64.7L114.2 66.7L112.1 69.9L109.2 72.4L106.1 74.7L102.4 76.2L99.4 78.7L95.3 80.0L92.3 82.7L89.3 85.7L85.7 92.1L88.1 102.6L94.8 107.8L101.5 109.5L108.4 110.0L116.2 110.3L125.0 109.7L134.8 109.4L145.6 109.6L157.4 109.1L170.0 109.7L171.2 109.8"/><path d="M120.5 43.1L121.7 43.1L125.0 43.5L128.5 43.6L131.1 45.6L133.8 47.3L135.6 50.0L136.1 53.2L135.9 56.2L134.3 58.7L133.2 61.2L131.9 63.6L129.9 65.6L127.7 67.7L126.0 70.6L124.1 73.6L121.4 76.1L118.7 78.7L115.9 81.2L113.5 84.0L110.7 86.2L107.9 87.9L105.3 89.6L102.9 91.0L101.7 92.9L101.4 93.4L101.0 92.7L102.3 92.5L105.4 93.4L110.6 93.8L117.3 93.3L125.5 93.2L134.9 93.2L145.4 92.5L157.0 92.8L169.5 93.0L181.5 93.5"/><path d="M81.8 54.1L83.8 52.0L87.3 50.3L90.8 48.1L94.7 47.0L98.8 46.7L102.7 46.1L106.7 46.8L110.5 46.6L114.1 47.5L117.6 48.0L120.9 47.5L123.6 48.1L126.2 48.3L128.4 49.2L130.1 50.5L132.0 51.8L133.1 53.8L133.6 56.1L132.9 58.4L131.9 60.6L129.4 62.1L128.1 64.2L125.4 65.4L123.4 67.6L120.7 69.4L118.0 71.6L115.5 74.5L112.8 77.0L110.7 80.5L107.7 82.6L105.3 85.1L103.0 87.3L101.3 89.7L99.3 91.4L97.3 93.0L97.6 95.3L99.8 97.6L104.1 98.7L109.8 99.8L116.9 100.1L125.3 100.0L134.8 99.8L145.5 98.6L157.1 98.3L169.7 98.0L183.0 97.1L190.4 96.5"/><path d="M85.2 52.7L88.0 51.8L91.8 51.0L95.5 49.9L99.1 48.3L103.0 47.8L106.7 46.2L110.4 45.2L114.1 44.9L117.9 43.9L121.4 44.5L124.4 45.5L126.7 47.3L128.2 49.4L129.9 50.6L130.4 52.6L130.6 54.3L130.4 56.0L130.3 57.8L130.0 59.8L129.9 62.3L129.1 65.0L127.4 67.4L125.5 69.9L123.1 72.4L120.0 74.3L116.6 75.8L113.1 77.4L109.6 79.1L106.4 81.0L104.0 83.7L101.5 85.9L99.8 88.6L98.5 91.0L97.9 93.1L99.0 94.2L101.2 94.8L105.0 95.3L110.2 96.6L117.0 97.8L125.3 98.2L134.8 99.3L145.5 99.9L157.2 100.1L165.2 100.2"/><path d="M135.4 37.4L136.5 38.4L140.3 41.8L143.0 46.3L143.7 51.5L143.7 56.3L142.7 60.6L140.5 64.3L138.8 67.8L137.2 71.5L134.5 74.4L132.1 77.5L129.8 80.7L126.8 83.0L124.6 86.4L121.6 88.5L118.8 90.7L116.6 93.2L114.4 95.0L112.3 96.3L111.4 97.6L111.2 98.3L112.5 94.3L111.1 85.0L107.8 81.3L108.7 79.9"/><path d="M83.3 51.5L83.3 51.0L86.8 49.0L90.6 47.6L94.2 45.2L98.1 43.7L102.2 43.4L106.2 42.3L110.2 42.3L114.2 42.6L117.9 43.3L121.4 44.6L124.2 46.3L126.6 47.6L129.0 48.3L130.7 49.9L132.4 51.6L133.5 53.7L134.2 56.1L134.4 58.7L134.8 61.8L133.3 64.4L130.8 66.4L128.5 68.4L125.6 70.1L122.9 72.2L119.9 74.1L116.3 75.5L113.7 78.3L110.9 80.7L108.4 83.5L106.4 86.3L104.7 89.0L103.2 91.2L102.7 93.4L102.2 93.4L102.0 91.9L102.4 92.4L105.3 94.1L110.3 95.9L117.1 97.5L125.3 97.5L134.8 97.7L145.5 97.9L157.1 97.4L169.6 96.3L174.1 95.1"/><path d="M79.4 55.5L80.7 54.3L83.9 52.3L87.2 49.8L90.7 47.9L94.6 46.6L98.4 45.3L102.3 43.9L106.3 43.0L110.3 43.4L114.1 44.0L117.8 44.9L121.2 46.1L123.8 47.4L126.5 47.8L128.0 49.6L130.1 50.4L131.7 51.9L133.1 53.8L133.9 56.1L134.3 58.7L133.3 61.2L132.4 63.9L130.5 66.2L128.0 68.0L125.2 69.6L122.2 71.2L118.7 72.5L115.9 75.0L113.0 77.4L110.3 80.0L107.8 82.7L105.9 85.8L104.2 88.5L102.6 90.7L101.6 92.8L101.1 93.3L100.7 93.0L101.7 93.8L104.9 95.4L110.1 97.4L117.0 98.1L125.3 99.3L134.8 99.5L145.5 98.9L157.1 97.4L169.6 97.0L182.9 95.5L196.8 94.2L196.9 95.1"/><path d="M78.2 56.1L81.4 55.6L84.7 53.9L88.4 52.8L92.0 51.6L95.8 50.9L99.4 49.6L103.1 48.2L106.7 46.4L110.4 45.9L114.1 45.1L117.8 44.9L121.2 45.5L124.0 47.0L126.4 47.9L127.9 49.7L129.0 51.4L129.0 53.3L129.9 54.5L129.6 56.0L129.7 57.7L129.9 59.8L129.8 62.3L128.6 64.6L126.8 66.8L124.7 69.1L122.0 71.1L119.2 73.2L115.5 74.5L112.7 77.0L109.0 78.3L105.9 80.5L103.2 82.9L100.6 85.1L98.7 87.7L97.9 90.7L96.9 93.0L98.3 94.8L100.8 95.6L104.6 96.8L110.0 98.2L116.9 99.4L125.3 99.7L134.8 100.8L145.5 101.5L157.2 102.2L169.8 101.6L178.6 101.2"/><path d="M76.5 50.1L77.9 49.4L81.4 47.0L85.2 45.0L89.0 43.0L93.2 41.7L97.2 40.1L101.6 39.8L105.9 39.5L110.0 38.6L114.2 39.9L118.1 40.6L122.0 41.2L125.2 42.9L128.3 44.1L131.0 45.6L133.5 47.6L135.2 50.2L137.5 52.9L138.4 56.2L138.8 59.8L137.3 62.9L136.1 66.2L133.9 68.8L131.1 71.0L127.7 72.5L125.0 74.7L121.7 76.4L118.4 78.3L115.7 80.9L113.0 83.4L110.6 86.1L109.4 89.6L107.6 91.7L106.9 94.2L106.3 95.5L107.4 93.9L105.9 88.9L104.2 88.7L106.4 89.3L110.9 91.4L117.4 91.9L125.5 93.1L134.9 93.2L145.4 92.0L157.0 91.9L158.6 91.4"/><path d="M79.1 55.0L80.9 54.8L83.9 52.2L87.6 50.9L90.9 48.5L94.6 46.6L98.5 45.4L102.4 44.3L106.3 43.3L110.3 43.1L114.1 43.8L117.8 44.1L121.3 45.3L123.9 47.3L126.4 48.0L128.1 49.5L129.5 51.0L131.6 52.0L133.1 53.8L133.4 56.1L133.7 58.6L133.2 61.2L131.8 63.5L130.3 66.0L127.9 67.8L125.1 69.5L122.5 71.6L118.7 72.6L116.1 75.2L113.0 77.3L110.3 79.9L107.3 82.1L105.1 84.9L103.7 88.0L102.7 90.9L101.9 92.9L101.5 93.4L101.1 92.6L101.8 93.5L104.8 96.0L110.1 97.2L117.0 98.1L125.3 99.7L134.8 99.3L145.5 98.7L157.1 97.9L169.6 97.2L182.3 96.3"/><path d="M130.9 59.2L130.0 59.8L129.0 61.8L126.8 63.2L124.6 64.6L122.2 66.2L119.4 67.8L116.8 70.1L114.2 72.8L111.4 75.3L109.0 78.3L106.2 80.8L104.1 83.8L101.8 86.2L99.5 88.4L98.0 90.7L97.0 91.8"/><path d="M75.2 43.9L79.2 42.6L83.5 40.9L88.3 41.0L92.7 40.0L97.2 39.9L101.8 40.8L105.9 40.1L110.1 39.3L114.2 39.0L118.2 38.6L122.4 38.8L126.5 38.7L130.3 39.9L133.7 42.0L136.8 44.8L139.3 48.2L139.8 52.3L139.4 56.2L138.1 59.6L136.7 62.6L134.7 65.3L132.8 68.0L131.0 70.9L129.0 73.9L126.4 76.4L123.9 79.3L121.5 82.4L118.6 84.6L115.9 87.0L113.5 89.5L111.2 91.5L109.2 93.3L107.2 94.4L106.6 95.7L107.0 93.8L106.1 88.8L104.7 87.6L106.9 87.5L111.5 86.9L117.8 86.9L125.6 86.8L134.9 86.8L145.3 86.3L156.8 86.5L169.3 87.2L175.3 87.6"/><path d="M85.3 61.8L88.0 60.7L91.1 59.4L94.5 58.8L97.8 57.8L101.1 56.9L104.4 56.1L107.8 56.3L111.0 56.0L114.1 55.1L117.1 54.4L119.8 54.2L121.9 53.8L123.2 54.4L124.2 54.7L124.9 54.8L124.9 55.3L124.2 55.7L123.2 55.9L122.4 56.0L121.7 56.3L121.3 57.1L120.8 58.4L120.0 60.1L118.4 61.9L117.5 63.1"/><path d="M87.0 55.8L89.0 54.4L92.4 52.6L95.6 50.0L99.2 48.7L103.0 47.8L106.7 46.8L110.5 47.1L114.1 47.9L117.6 47.9L120.6 49.5L122.8 50.8L124.7 51.5L125.9 52.4L127.4 52.8L128.0 53.7L129.6 54.6L130.7 56.0L130.1 57.8L130.0 59.8L128.8 61.7L127.8 63.9L125.3 65.3L122.4 66.5L119.8 68.4L116.6 69.9L113.5 71.8L110.4 73.9L107.5 76.4L105.4 79.9L103.0 82.6L100.7 85.1L98.9 87.8L97.4 90.4L96.0 92.9L96.6 96.0L99.3 98.8L103.6 100.7L109.4 102.4L116.6 103.9L125.1 104.4L134.8 104.8L145.6 103.8L157.3 103.3L169.8 102.1L183.1 101.4L191.8 100.7"/><path d="M93.3 61.3L94.9 60.1L98.0 58.7L101.1 57.0L104.3 55.2L107.7 55.1L111.0 55.1L114.1 55.6L116.9 56.9L119.2 57.6L120.4 58.6L121.4 58.2L121.7 58.1L121.4 57.9L121.5 57.0L122.3 56.1L122.5 55.9L122.7 56.1L122.5 56.6L122.6 57.9L121.3 58.7L119.5 59.6L117.3 60.6L114.5 61.7L111.4 63.1L108.6 65.3L105.6 67.7L103.1 70.9L100.1 73.5L97.0 76.0L93.9 78.7L91.1 81.7L88.3 85.1L85.2 92.0L87.7 102.9L93.9 109.8L100.7 112.7L107.8 114.6L115.8 115.7L124.8 116.0L134.8 115.6L145.7 115.8L157.5 114.6L166.1 113.4"/><path d="M80.0 59.3L82.6 57.7L86.0 56.5L88.9 54.1L92.3 52.6L95.8 50.9L99.3 48.8L103.0 47.8L106.8 47.1L110.4 46.0L114.1 46.7L117.6 47.4L120.7 48.6L123.1 49.9L124.8 51.2L126.4 51.8L127.0 53.1L128.2 53.7L129.2 54.6L129.6 56.0L130.5 57.9L129.9 59.8L129.3 62.0L127.7 63.9L126.3 66.3L123.1 67.2L120.3 68.9L117.6 71.1L114.1 72.5L110.9 74.6L108.0 77.0L105.2 79.6L102.2 81.8L100.5 85.0L99.3 88.1L98.1 90.7L96.5 93.0L97.2 95.6L99.8 97.6L103.8 99.9L109.6 101.1L116.7 102.5L125.1 104.2L134.8 104.0L145.6 104.5L157.3 103.8L165.0 103.3"/><path d="M75.9 46.7L76.2 46.4L80.3 44.8L84.4 43.0L88.3 41.0L93.0 41.2L97.4 40.7L101.8 40.8L106.0 40.8L110.1 40.9L114.2 41.0L118.1 41.1L122.0 41.2L125.6 41.7L129.1 42.4L132.4 43.8L135.9 45.5L138.4 48.6L139.1 52.5L139.1 56.2L138.5 59.7L136.5 62.6L134.2 65.0L132.4 67.7L130.2 70.1L127.3 72.0L124.9 74.7L122.2 77.1L119.9 80.2L117.6 83.3L114.8 85.6L112.4 88.2L110.2 90.4L108.5 92.6L106.6 93.9L106.0 95.3L105.7 93.7L104.3 90.2L103.9 89.2L106.2 90.3L111.0 90.4L117.5 90.4L125.5 90.5L134.9 89.5L145.4 88.9L156.9 88.7L169.4 88.2L179.3 88.5"/><path d="M82.6 55.8L85.3 55.1L88.7 53.7L92.1 52.0L95.9 51.2L99.5 49.7L102.9 47.3L106.7 46.6L110.4 45.5L114.1 45.7L117.7 45.4L121.1 46.7L123.8 47.7L126.0 48.7L127.0 51.0L128.3 51.9L128.5 53.5L128.7 54.7L129.1 56.0L130.4 57.8L130.1 59.9L129.6 62.2L128.8 64.7L126.5 66.5L124.2 68.5L122.1 71.1L118.7 72.5L115.2 74.1L111.7 75.7L108.7 78.0L105.2 79.6L102.7 82.3L100.5 85.0L98.6 87.6L98.0 90.7L97.3 93.0L98.6 94.6L100.4 96.5L104.5 97.2L109.9 98.6L116.9 100.4L125.2 101.2L134.8 102.6L145.5 102.2L157.2 102.7L169.8 102.0L175.0 101.4"/><path d="M132.8 50.9L133.5 51.0L133.4 53.7L132.5 56.1L131.7 58.1L131.0 60.2L130.0 62.4L128.5 64.5L126.6 66.6L125.2 69.6L123.0 72.3L120.7 75.2L117.8 77.5L114.6 79.4L111.8 81.9L109.0 84.2L106.3 86.2L102.9 87.3L101.0 89.5L99.1 91.3L98.4 93.1L98.7 94.4L100.8 95.6L104.8 95.8L110.3 95.9L117.1 96.5L125.4 95.6L134.8 96.0L145.5 96.5L157.1 96.2L169.6 96.4L183.0 97.2L183.4 97.0"/><path d="M81.0 55.1L81.1 55.1L85.0 54.4L88.4 52.8L92.1 51.8L95.8 50.9L99.6 50.2L103.1 48.6L106.8 47.2L110.5 46.1L114.1 45.6L117.7 45.8L121.3 45.3L124.1 46.7L126.2 48.4L127.7 50.0L128.8 51.5L128.8 53.4L129.5 54.6L129.8 56.0L129.5 57.6L129.4 59.6L128.5 61.5L128.3 64.3L126.9 66.9L124.8 69.1L122.2 71.2L118.9 72.9L116.1 75.2L112.7 76.9L109.3 78.7L106.1 80.6L103.2 82.8L100.2 84.7L98.5 87.6L97.2 90.2L96.3 92.9L98.1 94.9L100.6 96.0L104.6 96.9L109.9 98.6L116.9 99.2L125.3 99.9L134.8 100.3L145.5 101.5L157.2 101.4L169.8 102.1L180.6 102.0"/><path d="M84.4 48.8L86.6 48.5L90.2 46.4L93.9 44.3L97.9 42.8L101.9 41.5L106.0 41.0L110.1 40.7L114.2 40.3L118.1 40.8L121.8 42.1L124.8 44.3L127.5 45.8L129.8 47.3L131.9 48.9L133.4 51.1L135.0 53.4L135.6 56.1L136.2 59.2L135.3 62.1L134.2 65.0L132.8 67.9L130.3 70.2L127.5 72.3L124.4 74.0L120.7 75.1L117.9 77.6L114.7 79.5L111.3 81.3L108.9 84.0L106.8 86.7L105.8 90.0L104.5 92.2L104.4 94.4L104.5 93.6L103.5 90.8L103.5 90.0L105.8 91.7L110.7 92.7L117.3 94.2L125.4 94.8L134.9 95.2L145.4 95.1L157.0 94.6L169.5 94.0L180.8 93.7"/><path d="M85.3 57.9L86.1 56.7L89.9 56.5L93.3 55.4L96.8 54.4L100.5 54.4L104.0 53.4L107.4 52.8L110.8 51.9L114.1 50.9L117.3 50.9L120.4 50.5L123.1 50.0L125.0 50.8L126.2 52.0L126.8 53.3L126.6 54.4L126.1 55.3L126.2 56.0L125.8 56.8L125.1 57.7L124.7 59.2L123.4 60.5L122.9 62.9L121.3 65.2L119.3 67.7L117.0 70.3L114.1 72.6L111.1 74.9L107.8 76.8L103.7 77.8L100.2 79.6L97.5 82.1L94.5 84.4L91.9 87.2L90.2 92.4L92.1 99.5L97.5 102.4L102.7 104.5L109.1 104.9L116.6 104.6L125.1 104.8L134.8 105.8L145.6 106.2L157.3 105.8L169.9 106.1L183.3 106.5L191.9 106.7"/><path d="M82.9 51.9L83.7 51.8L87.3 50.2L90.8 48.1L94.8 47.2L98.8 46.9L102.8 46.6L106.8 47.1L110.5 47.2L114.1 47.4L117.6 47.3L120.9 47.7L123.7 47.8L126.2 48.2L128.8 48.6L130.3 50.3L131.9 51.8L133.0 53.8L132.7 56.1L132.4 58.3L130.3 60.0L128.7 61.6L126.9 63.2L125.4 65.4L123.1 67.2L121.5 68.9"/><path d="M76.0 43.4L79.1 42.3L83.6 41.1L88.4 41.0L92.7 40.1L97.4 40.5L101.5 39.1L105.7 38.2L109.9 37.4L114.2 37.0L118.4 36.6L122.9 35.8L127.0 37.0L130.9 38.8L134.4 41.1L136.6 44.9L138.8 48.4L139.5 52.4L138.9 56.2L138.2 59.6L137.3 62.9L136.6 66.5L134.5 69.4L133.0 72.9L130.8 76.0L128.2 78.7L125.1 80.8L122.1 83.1L118.9 85.0L116.1 87.3L113.3 89.3L110.6 90.9L109.2 93.3L107.8 94.9L107.5 94.7"/><path d="M84.7 64.7L86.1 63.9L88.5 61.8L91.1 59.5L94.1 57.8L97.0 55.1L100.5 54.1L103.8 52.5L107.2 51.1L110.8 51.5L114.1 51.6L117.2 52.7L120.0 53.2L121.7 54.3L122.5 55.9L123.4 55.7L123.6 56.0L124.2 55.7L124.4 55.7L125.3 55.9L125.7 56.8L125.5 57.9L125.5 59.7L123.9 60.9L121.9 62.0L119.9 63.6L117.1 65.0L114.2 66.7L111.0 68.5L107.7 70.4L104.4 72.5L101.4 75.1L99.2 78.4L96.3 80.9L94.1 84.1L92.4 87.5L90.0 92.4L92.0 99.6L96.4 104.7L101.9 107.6L108.5 109.2L116.2 110.5L124.9 111.3L134.8 111.2L145.7 110.9L157.4 110.4L161.3 109.8"/><path d="M80.9 46.6L80.8 45.8L84.7 43.9L88.8 42.4L92.8 40.4L97.2 39.8L101.4 38.5L105.8 38.5L109.9 37.5L114.2 38.5L118.2 38.8L122.1 40.5L125.5 41.9L128.6 43.5L131.3 45.2L134.1 47.0L136.4 49.6L138.4 52.7L139.8 56.2L139.6 59.9L138.9 63.6L137.3 66.9L134.7 69.5L131.9 71.8L128.5 73.4L125.4 75.2L122.2 77.1L119.3 79.4L115.9 81.1L114.0 84.6L111.7 87.4L109.7 89.9L108.8 92.9L107.6 94.6L108.1 96.5L108.2 93.9L106.6 88.4L104.9 87.3L106.7 88.2L111.2 89.2L117.5 90.6L125.5 91.1L134.9 91.9L145.4 91.2L156.9 90.1L167.0 89.6"/><path d="M86.9 68.5L88.0 67.2L90.0 64.9L92.4 62.5L95.0 60.4L97.8 58.0L101.0 56.6L104.5 56.6L107.8 56.1L111.1 56.4L114.1 57.6L116.8 57.9L119.2 58.1L120.3 59.0L121.3 58.3L121.5 58.3L121.8 57.5L121.8 56.9L121.9 56.2L122.7 55.9L122.4 56.0L122.2 56.5L121.8 57.4L120.2 57.9L118.3 58.4L116.6 59.9L114.3 61.6L111.4 63.1L108.8 65.6L106.0 68.1L102.8 70.5L99.9 73.2L97.4 76.5L94.2 79.0L91.0 81.6L88.0 84.9L83.9 91.9L86.8 103.6L93.4 110.9L100.4 113.9L107.7 115.6L115.7 116.6L124.8 116.2L134.8 116.4L145.7 114.9L157.5 114.2L170.1 113.0L180.4 113.1"/><path d="M82.0 49.1L82.1 48.5L86.0 47.1L90.1 46.0L94.1 45.1L98.4 45.1L102.5 45.0L106.5 44.7L110.4 44.8L114.1 45.2L117.7 45.6L121.3 45.2L124.6 45.0L127.3 46.0L130.2 46.7L133.0 48.0L134.9 50.4L135.3 53.3L135.0 56.1L133.9 58.6L132.4 60.8L130.7 62.8L128.7 64.7L126.9 66.9L124.5 68.9L122.3 71.5L120.0 74.3L117.8 77.4L115.0 80.0L112.1 82.3L109.7 85.0L107.3 87.3L104.9 89.2L102.6 90.8L101.3 92.6L99.9 93.2L100.0 93.5L101.2 94.7L105.0 95.2L110.2 96.4L117.1 96.6L125.4 96.0L134.8 95.5L145.4 95.0L157.0 94.3L169.5 93.7L174.2 93.9"/><path d="M83.5 50.3L87.0 49.5L90.8 48.2L94.6 46.7L98.6 45.8L102.4 44.1L106.3 42.8L110.2 41.9L114.2 41.7L118.0 41.8L121.8 42.2L125.0 43.7L127.4 45.8L129.4 47.8L131.1 49.6L132.0 51.8L132.6 53.9L132.8 56.1L133.0 58.4L133.2 61.2L132.8 64.2L131.5 67.0L129.7 69.7L127.4 72.1L124.1 73.6L121.0 75.6L117.8 77.4L114.5 79.3L111.2 81.2L108.1 83.0L105.5 85.3L103.8 88.1L102.1 90.4L101.8 92.9L102.6 93.5L102.7 91.4L102.7 91.8L105.6 92.6L110.6 93.4L117.3 94.2L125.4 95.9L134.8 96.8L145.5 96.7L157.1 96.8L165.9 97.1"/><path d="M81.7 44.5L84.9 44.3L89.3 43.7L93.4 42.6L97.9 42.8L102.1 42.4L106.3 42.9L110.2 42.5L114.2 42.2L118.0 41.7L122.1 40.6L125.6 41.5L129.1 42.4L132.4 43.8L135.3 46.0L137.1 49.3L137.3 52.9L137.4 56.2L136.4 59.2L134.2 61.6L133.0 64.3L131.1 66.6L129.6 69.6L127.3 72.0L125.1 74.9L122.3 77.3L120.2 80.6L117.0 82.5L114.7 85.5L111.5 87.2L109.2 89.3L107.1 91.2L104.6 92.3L103.7 94.0L102.9 93.5L102.7 91.4L103.2 90.7L106.0 91.0L111.0 90.8L117.5 90.3L125.5 90.1L134.9 90.0L145.4 90.1L156.9 90.8L169.4 90.9L182.7 90.9L187.3 90.9"/><path d="M130.9 54.8L131.6 56.1L132.5 58.3L132.0 60.7L131.0 63.0L129.7 65.5L127.9 67.9L125.1 69.6L122.1 71.2L118.6 72.4L115.8 74.8L112.0 76.0L109.0 78.3L106.3 80.9L103.8 83.5L102.5 86.9L100.8 89.3L99.6 91.6L99.2 93.2L99.6 93.8L101.2 94.7L104.8 96.1L110.1 97.6L116.9 99.3L125.3 100.2L134.8 101.3L145.5 101.2L157.2 100.3L169.7 99.8L171.0 99.4"/><path d="M74.7 47.3L76.4 46.7L80.2 44.6L84.7 43.8L89.0 42.8L93.6 43.3L98.0 43.1L102.1 42.6L106.2 42.3L110.2 42.1L114.2 41.3L118.1 40.5L122.0 40.9L126.0 40.2L129.5 41.6L132.8 43.3L135.3 46.0L136.9 49.4L137.5 52.8L137.3 56.2L136.0 59.1L134.4 61.7L133.1 64.3L131.4 66.9L129.5 69.4L127.6 72.4L125.3 75.1L122.8 77.9L120.0 80.4L117.4 83.1L114.9 85.8L111.9 87.6L109.4 89.6L106.8 91.0L104.8 92.4L103.6 93.9L104.3 93.6L103.9 90.5L103.4 90.6"/><path d="M88.3 55.9L89.2 54.7L92.5 53.1L96.2 52.4L99.9 51.5L103.6 51.2L107.3 51.5L110.8 52.0L114.1 51.9L117.2 52.3L120.2 52.0L122.4 52.0L124.5 51.8L125.9 52.4L127.5 52.7L128.2 53.7L128.3 54.8L128.2 56.0L128.2 57.3L126.6 58.4L125.5 59.7L123.8 60.7L122.1 62.2L120.8 63.4"/><path d="M81.3 49.2L82.4 49.1L86.2 47.5L90.3 46.7L94.5 46.5L98.7 46.2L102.6 45.6L106.5 44.7L110.3 43.5L114.2 42.6L118.0 42.3L121.7 42.5L125.2 42.9L128.5 43.6L131.2 45.4L132.9 48.1L133.7 51.0L133.6 53.7L133.6 56.1L132.6 58.3L131.9 60.6L131.3 63.2L130.3 66.0L128.8 68.8L126.7 71.3L124.2 73.8L121.8 76.5L118.5 78.4L115.7 80.9L112.2 82.4L109.2 84.4L106.6 86.5L103.7 88.0L102.2 90.4L101.2 92.6L100.9 93.3L101.0 92.7L102.6 92.0L105.7 92.3L110.7 92.8L117.3 93.5L125.4 93.5L134.9 94.5L145.4 94.6L157.1 95.0L169.6 95.4L181.3 95.8"/><path d="M83.0 53.1L83.7 51.7L87.6 50.9L91.3 49.5L95.3 49.2L99.1 48.2L103.1 48.2L106.9 48.2L110.6 48.2L114.1 48.3L117.5 48.1L120.9 47.6L123.7 47.8L126.3 48.0L128.7 48.7L130.2 50.4L131.3 52.1L131.9 54.0L131.3 56.1L130.2 57.8L129.3 59.5L128.0 61.2L126.8 63.2L125.0 65.0L123.1 67.3L121.0 69.8L118.9 72.8L116.3 75.4L113.1 77.4L110.7 80.4L107.6 82.4L105.0 84.8L101.5 86.0L100.4 86.8"/><path d="M83.0 64.3L85.6 63.0L88.3 61.4L91.1 59.4L93.8 56.9L97.1 55.3L100.2 53.1L103.7 51.7L107.2 51.2L110.8 51.1L114.1 51.1L117.2 52.1L119.9 53.4L121.8 54.1L123.0 54.8L123.4 55.8L123.9 55.7L124.7 55.4L125.1 55.5L126.3 56.0L126.4 56.9L126.3 58.2L126.1 60.0L124.4 61.3L122.9 63.0L120.0 63.7L117.7 65.7L114.6 67.2L111.5 69.2L108.1 70.9L105.1 73.3L102.2 76.0L99.2 78.4L97.4 82.0L94.7 84.6L92.7 87.7L90.7 92.5L92.5 99.2L96.7 104.0L102.4 105.9L108.7 108.1L116.2 109.7L125.0 110.8L134.8 110.2L145.7 110.6L157.4 109.9L168.0 108.3"/><path d="M125.3 46.3L126.6 47.5L128.8 48.6L130.8 49.9L132.9 51.3L134.1 53.6L135.3 56.1L135.0 58.9L134.4 61.7L132.9 64.2L131.1 66.6L128.9 68.9L125.4 69.9L122.8 72.0L119.8 74.0L116.3 75.5L113.4 77.9L110.7 80.5L108.4 83.4L107.0 87.0L104.9 89.2L104.1 91.9L102.9 93.5L102.5 93.5L101.9 92.0L102.4 92.3L105.2 94.2L110.2 96.3L117.1 97.1L125.3 98.0L134.8 97.0L145.5 96.6L157.1 96.4L169.6 94.8L182.8 93.7L194.2 93.4"/><path d="M77.7 50.3L78.3 50.1L81.8 47.9L85.6 46.1L89.6 44.7L93.5 42.7L97.5 41.1L101.6 40.0L105.9 39.6L110.0 39.0L114.2 39.6L118.1 40.1L121.9 41.8L125.0 43.5L128.0 44.6L130.5 46.3L132.7 48.3L134.9 50.4L136.3 53.1L137.1 56.2L137.4 59.4L137.2 62.9L135.8 66.0L133.2 68.3L130.6 70.5L127.9 72.7L125.0 74.7L121.5 76.2L118.1 77.9L115.1 80.1L112.6 82.9L110.4 85.8L108.2 88.3L106.7 90.9L106.3 93.7L105.9 95.3L105.8 93.7L104.8 89.8L104.0 89.0L106.3 90.0L110.9 91.5L117.4 92.5L125.4 93.8L134.9 93.6L145.4 93.5L157.0 93.0L169.5 91.7L182.7 90.9L191.7 90.0"/><path d="M80.7 61.4L84.0 60.2L87.1 58.9L90.2 57.2L93.7 56.4L96.9 54.6L100.1 52.6L103.6 51.1L107.1 49.9L110.6 48.8L114.1 48.6L117.5 49.1L120.6 49.2L122.7 51.1L124.4 52.0L125.0 53.6L125.8 54.1L125.3 55.1L125.7 55.4L125.8 56.0L126.2 56.9L126.6 58.4L126.6 60.3L126.1 62.6L124.2 64.2L122.2 66.2L119.5 68.0L116.7 70.0L113.2 71.5L109.6 72.9L106.5 75.2L102.7 76.6L100.0 79.3L97.7 82.4L95.6 85.3L93.4 88.0L92.9 92.7L94.2 97.9L98.4 100.6L103.1 102.8L109.3 103.7L116.5 105.6L125.1 105.9L134.8 106.8L145.6 107.2L157.4 107.8L169.9 106.8L179.9 106.9"/><path d="M117.2 42.1L117.9 42.7L121.7 42.7L125.1 43.2L127.9 44.8L130.0 47.0L131.5 49.3L132.6 51.5L132.2 54.0L132.2 56.1L132.2 58.3L131.6 60.5L131.4 63.3L130.0 65.7L128.7 68.7L126.3 70.9L124.4 74.0L121.2 75.9L118.0 77.7L115.0 80.0L111.5 81.5L108.5 83.5L105.4 85.3L103.0 87.3L101.5 89.9L100.5 92.1L100.5 93.3L101.0 92.7L102.3 92.6L105.6 92.8L110.6 93.4L117.3 94.1L125.4 95.2L134.8 95.8L145.5 96.4L157.1 96.6L167.0 97.3"/><path d="M84.1 47.2L86.0 47.0L90.1 46.0L94.4 46.0L98.5 45.3L102.6 45.3L106.5 44.8L110.3 43.5L114.1 42.9L117.9 43.1L121.8 41.9L125.2 42.8L128.4 43.9L131.1 45.5L133.2 47.8L134.0 50.8L134.5 53.5L134.3 56.1L132.9 58.4L132.5 60.9L131.1 63.1L129.8 65.6L128.1 68.1L126.5 71.1L124.2 73.8L121.7 76.5L118.6 78.5L115.9 81.1L112.5 82.8L109.9 85.2L107.1 87.0L104.5 88.8L102.7 90.8L101.2 92.5L100.5 93.3L101.2 92.5L102.4 92.4L105.6 92.8L110.7 92.9L117.4 92.8L125.5 92.9L134.9 93.7L145.4 94.2L157.0 94.1L169.6 94.7L182.9 94.6L196.9 94.8L196.9 95.0"/><path d="M83.3 50.8L87.3 50.3L91.3 49.5L95.2 48.9L99.1 48.3L103.1 48.4L106.8 47.2L110.5 46.8L114.1 46.2L117.7 46.1L121.2 45.6L124.4 45.7L127.1 46.5L129.2 48.0L130.9 49.8L132.2 51.7L131.8 54.1L131.5 56.1L130.5 57.9L130.1 59.9L128.5 61.5L127.6 63.8L126.3 66.3L124.0 68.3L122.3 71.4L121.0 73.1"/><path d="M89.5 63.1L91.7 60.8L94.5 58.8L97.4 56.6L100.8 55.4L104.0 53.5L107.4 52.6L110.8 52.7L114.1 53.6L117.1 54.3L119.7 55.0L121.3 55.7L121.9 57.1L122.1 57.5L122.5 56.9L122.3 56.6L122.9 56.0L124.3 55.9L124.4 56.5L124.2 57.4L124.2 58.9L122.7 59.9L120.7 60.8L118.6 62.1L116.1 63.7L113.3 65.6L110.1 67.3L106.6 69.0L103.8 71.7L100.6 74.1L97.6 76.7L95.3 80.0L92.7 83.0L90.8 86.5L88.6 92.3L89.7 101.3L95.3 106.8L101.5 109.4L108.3 111.1L116.0 112.8L124.9 113.8L134.8 113.6L145.7 113.0L157.5 112.7L170.1 111.3L183.4 110.2L189.5 110.2"/><path d="M84.3 52.6L87.6 50.8L90.9 48.3L94.7 46.9L98.4 45.2L102.5 45.0L106.4 44.2L110.4 44.7L114.1 45.1L117.7 46.1L120.9 47.5L123.8 47.5L125.8 49.2L127.6 50.1L129.4 51.0L131.6 52.0L133.1 53.8L134.0 56.1L133.7 58.6L132.8 61.0L131.2 63.1L129.0 65.0L126.9 66.9L124.3 68.6L121.2 70.0L118.2 71.9L115.3 74.1L112.8 77.0L109.9 79.5L107.4 82.2L105.7 85.5L103.2 87.5L102.1 90.4L100.7 92.3L99.9 93.2L99.3 94.0L100.8 95.5L104.5 97.1L109.9 98.5L116.9 100.1L125.3 100.3L134.8 100.4L145.5 100.1L157.1 98.7L169.7 98.1L175.6 97.3"/><path d="M130.7 72.8L129.0 73.9L125.5 75.4L122.4 77.4L119.6 79.8L116.7 82.2L114.7 85.5L113.0 88.9L111.0 91.3L110.1 94.2L109.3 96.0L108.4 96.7L109.1 94.0L107.6 87.6L105.4 86.2L107.0 87.0L111.3 88.3L117.6 89.8L125.5 90.2L134.9 90.2L145.4 89.0L156.9 88.3L169.3 86.6L182.6 85.9L184.7 86.1"/><path d="M79.4 55.3L80.5 54.0L83.7 51.8L87.2 49.9L90.9 48.3L94.8 47.3L98.7 46.5L102.7 46.4L106.6 46.1L110.5 47.1L114.1 47.2L117.6 47.9L120.8 48.0L123.6 48.1L126.4 47.9L128.5 49.0L130.3 50.3L131.9 51.8L133.4 53.7L133.0 56.1L132.2 58.3L131.0 60.3L129.3 62.0L127.8 64.0L125.5 65.5L123.5 67.7L120.7 69.5L118.3 72.1L115.9 75.0L113.1 77.4L110.9 80.8L107.9 82.8L105.7 85.6L103.5 87.9L101.3 89.8L99.5 91.6L97.8 93.1L97.6 95.3L100.1 97.1L103.9 99.5L109.7 100.3L116.8 100.5L125.3 99.4L134.8 99.3L145.5 98.2L157.1 97.9L169.6 97.3L181.7 96.9"/><path d="M86.0 56.5L88.8 53.9L92.3 52.4L95.6 50.3L99.4 49.6L103.3 49.5L107.0 49.1L110.6 49.1L114.1 50.0L117.4 50.4L120.3 51.2L122.5 51.9L124.2 52.3L125.7 52.7L127.4 52.7L128.5 53.5L129.2 54.6L129.5 56.0L129.6 57.7L128.7 59.3L127.7 61.0L125.3 61.9L123.2 63.2L121.1 64.9L118.5 66.7L116.0 69.1L112.9 71.0L110.4 74.0L108.0 77.1L105.1 79.5L102.5 82.1L100.0 84.5L98.2 87.3L96.3 89.7L93.4 92.7L94.7 97.5L98.1 101.1L102.8 104.1L109.0 105.5L116.5 105.7L125.1 106.0L134.8 104.9L145.6 104.3L157.3 103.4L163.2 103.3"/><path d="M84.0 47.7L86.1 47.3L90.3 46.7L94.4 46.0L98.6 45.7L102.6 45.5L106.6 46.0L110.4 45.6L114.1 45.2L117.8 45.2L121.4 44.4L124.8 44.3L127.6 45.4L130.3 46.6L132.5 48.4L134.0 50.8L134.6 53.5L134.4 56.1L133.7 58.6L131.6 60.5L130.3 62.6L128.8 64.7L126.9 66.9L124.8 69.2L122.8 72.0L120.5 74.9L118.0 77.7L115.1 80.1L112.3 82.5L109.5 84.7L106.8 86.7L104.1 88.4L101.8 90.1L100.6 92.2L99.1 93.2L99.8 93.6L101.2 94.8L105.0 95.1L110.3 95.7L117.2 95.4L125.4 95.0L134.9 95.3L145.4 94.7L157.1 95.2L169.6 94.5L182.8 95.6"/><path d="M85.0 56.4L85.8 56.2L89.0 54.2L92.5 53.0L96.4 52.9L100.0 51.9L103.7 51.8L107.3 51.9L110.8 51.8L114.1 51.0L117.3 51.3L120.3 51.2L122.8 50.9L125.2 50.4L126.5 51.7L127.8 52.4L128.5 53.5L128.5 54.8L128.3 56.0L126.8 57.0L126.1 58.2L125.0 59.4L123.7 60.7L122.2 62.2L120.8 64.7L119.2 67.6L116.6 69.8L114.0 72.4L111.2 75.0L108.4 77.6L105.0 79.4L102.2 81.7L98.8 83.4L95.7 85.3L93.1 87.9L91.1 92.5L92.2 99.4L97.1 103.1L102.7 104.7L109.2 104.4L116.5 105.3L125.1 104.4L134.8 104.1L145.6 104.3L157.3 104.3L169.9 104.4L183.2 104.4L186.6 104.9"/><path d="M90.3 65.4L92.9 63.7L95.5 61.7L98.5 60.2L101.3 57.7L104.6 56.8L107.7 54.8L111.0 55.0L114.1 54.3L117.0 55.0L119.6 55.3L121.1 56.5L121.9 57.2L121.7 58.0L120.8 58.4L120.2 57.6L120.3 56.5L120.6 55.8L121.9 55.9L122.3 56.6L122.0 57.6L121.6 59.0L120.3 60.4L118.4 61.9L115.7 63.2L112.6 64.7L109.5 66.6L106.4 68.7L102.5 70.1L98.9 72.1L96.2 75.2L92.6 77.4L90.3 81.1L88.2 85.1L85.6 92.0L88.3 102.4L94.7 108.1L101.3 110.3L108.1 112.4L115.9 114.0L124.8 115.1L134.8 115.2L145.7 115.5L157.6 115.4L170.2 115.2L175.0 114.9"/><path d="M131.9 56.7L131.9 58.2L130.9 60.2L129.3 62.0L127.9 64.0L125.6 65.6L123.1 67.2L119.9 68.4L117.6 71.1L114.8 73.5L111.8 75.8L109.7 79.2L107.0 81.7L104.4 84.1L102.6 86.9L100.3 89.0L98.7 91.1L96.8 93.0L97.0 95.8L99.4 98.5L103.7 100.5L109.6 100.9L116.7 101.9L125.2 102.6L134.8 102.1L145.5 100.9L157.2 99.8L169.7 98.6L172.8 98.9"/><path d="M89.7 61.5L91.1 59.4L94.1 57.6L97.3 56.0L100.5 54.4L103.7 52.1L107.3 52.1L110.8 51.4L114.1 51.5L117.2 52.1L120.0 53.0L121.6 54.7L122.7 55.5L122.9 56.4L123.1 56.4L123.3 56.1L124.2 55.7L124.9 55.9L126.0 56.8L125.5 57.9L124.9 59.3L123.8 60.8L122.2 62.3L120.4 64.1L117.5 65.5L114.1 66.6L110.8 68.3L108.0 70.8L104.3 72.3L101.3 74.9L98.6 77.8L96.0 80.7L94.0 84.0L92.3 87.4L90.6 92.5L92.1 99.5L96.8 103.7L102.2 106.5L108.6 108.6L116.2 110.6L125.0 110.8L134.8 110.9L145.7 111.6L157.4 110.3L170.0 109.2L183.4 108.6L184.0 108.3"/><path d="M79.3 51.0L82.7 49.6L86.7 48.8L90.7 47.7L94.7 47.0L98.6 46.2L102.5 44.9L106.5 44.5L110.3 43.3L114.2 42.4L118.0 42.1L121.9 41.6L125.3 42.6L128.2 44.3L130.4 46.5L131.8 49.0L132.8 51.4L132.9 53.8L133.0 56.1L133.2 58.5L132.8 61.0L131.3 63.2L130.6 66.2L128.9 68.9L127.1 71.8L124.4 74.0L121.6 76.3L119.4 77.1"/><path d="M76.9 54.2L80.2 53.4L83.7 51.7L87.5 50.8L91.0 48.6L94.9 47.8L98.7 46.3L102.5 44.8L106.4 43.8L110.2 42.6L114.2 42.0L118.0 42.5L121.6 43.2L124.7 44.7L126.9 46.9L128.9 48.4L130.0 50.5L130.8 52.4L132.0 54.0L132.9 56.1L133.3 58.5L132.7 60.9L132.0 63.6L130.9 66.5L129.1 69.1L126.5 71.1L123.7 73.1L120.3 74.7L116.7 76.0L113.8 78.3L110.6 80.3L107.8 82.7L105.3 85.1L103.0 87.3L101.8 90.1L101.5 92.7L101.5 93.4L101.3 92.4L102.5 92.2L105.3 93.7L110.4 95.1L117.2 95.9L125.3 97.5L134.8 97.7L145.5 97.9L157.1 98.6L169.7 97.7L182.9 96.8L191.5 96.3"/><path d="M129.0 56.0L128.9 56.0L129.3 57.6L129.1 59.4L128.6 61.6L126.7 63.1L124.6 64.6L121.9 65.9L119.3 67.7L116.3 69.5L113.2 71.4L110.3 73.9L107.3 76.1L104.2 78.4L102.0 81.6L100.1 84.6L98.1 87.2L96.2 89.7L94.7 92.8L95.9 96.6L98.7 99.8L103.3 102.1L109.2 104.0L116.5 104.9L125.1 105.4L134.8 105.6L145.6 105.4L157.3 105.4L166.0 104.0"/><path d="M113.2 77.5L113.2 77.6L109.9 79.5L107.2 81.9L104.9 84.6L103.2 87.5L102.0 90.3L101.4 92.7L100.5 93.3L101.4 92.4L102.2 92.8L105.2 94.2L110.3 95.8L117.1 97.3L125.3 98.0L134.8 98.8L145.5 99.4L157.2 99.2L169.7 98.4L183.0 97.3L196.9 96.2L196.9 95.8"/><path d="M80.7 41.7L83.4 40.6L87.5 38.6L92.2 38.4L96.7 37.7L101.3 37.9L105.7 38.4L110.0 38.5L114.2 38.3L118.2 38.7L122.3 39.4L126.0 40.2L130.0 40.6L133.4 42.5L137.3 44.3L139.6 48.0L141.8 51.9L142.3 56.3L140.4 60.1L138.9 63.6L136.7 66.5L134.0 68.9L131.6 71.6L129.0 74.0L125.9 75.8L123.8 79.2L120.9 81.6L118.3 84.2L117.4 85.4"/><path d="M90.5 60.9L91.7 60.9L94.7 59.3L97.5 56.9L100.8 55.6L104.1 53.9L107.4 52.3L110.8 51.6L114.1 51.5L117.2 52.3L120.1 52.6L122.0 53.5L123.1 54.7L123.1 56.2L123.3 56.2L123.4 56.1L123.2 55.9L123.4 55.9L123.9 56.4L124.9 57.7L124.6 59.1L124.1 61.0L122.1 62.1L120.3 64.1L117.9 66.0L114.8 67.6L111.3 68.9L107.9 70.7L104.1 72.1L100.7 74.2L97.8 76.9L95.3 80.0L92.5 82.8L90.5 86.4L89.0 92.3L91.6 99.9L96.4 104.7L102.1 107.0L108.7 107.9L116.2 109.3L124.9 111.0L134.8 111.4L145.7 111.8L157.5 111.7L164.0 111.5"/><path d="M131.6 45.3L133.8 47.3L135.4 50.1L136.3 53.1L137.0 56.2L137.4 59.4L137.2 62.9L136.1 66.1L134.0 68.9L132.3 72.3L129.5 74.5L126.5 76.6L122.8 77.8L119.5 79.7L116.3 81.7L113.3 83.8L110.6 86.0L108.3 88.4L106.7 90.9L106.2 93.6L106.2 95.5L106.9 93.8L106.5 88.5L105.3 86.4L107.0 87.1L111.3 88.0L117.6 89.9L125.5 90.6L134.9 91.7L145.4 92.0L157.0 91.4L162.6 91.7"/><path d="M83.8 43.8L84.4 43.1L88.7 42.2L93.3 42.0L97.7 42.1L102.1 42.4L106.2 42.4L110.2 41.7L114.2 42.1L118.0 41.5L121.9 41.3L125.7 41.2L129.2 42.3L132.8 43.3L135.3 46.0L137.5 49.1L138.6 52.6L138.0 56.2L137.1 59.4L135.0 61.9L133.4 64.5L131.6 67.0L129.3 69.3L127.4 72.1L124.8 74.5L122.5 77.4L119.7 80.0L117.4 83.1L114.5 85.2L112.3 88.0L109.4 89.5L107.3 91.5L105.9 93.3L104.4 94.4L103.6 93.6L103.6 90.8L103.6 89.9L106.2 90.3L110.9 91.2L117.5 90.9L125.5 90.4L134.9 90.3L145.4 89.5L156.9 89.7L169.4 89.7L179.4 89.8"/><path d="M85.0 60.9L87.4 59.4L90.5 58.0L93.7 56.4L96.8 54.3L100.0 52.1L103.4 50.3L107.0 49.3L110.6 49.3L114.1 48.9L117.4 49.4L120.4 50.9L122.5 52.0L123.8 53.2L124.6 54.2L125.0 54.8L125.2 55.1L125.6 55.4L126.7 56.0L127.1 57.1L127.0 58.6L126.8 60.4L125.5 62.1L124.1 64.1L121.9 65.8L119.0 67.3L116.1 69.2L112.3 70.3L109.4 72.7L105.9 74.4L103.0 76.9L100.4 79.7L98.0 82.6L95.8 85.4L94.3 88.5L93.3 92.7L94.6 97.6L98.2 100.9L103.1 102.8L109.1 104.9L116.5 105.9L125.1 107.1L134.8 108.4L145.6 108.2L157.4 108.3L170.0 107.0L183.3 106.1L197.2 105.2L197.2 104.5"/><path d="M79.5 54.5L80.4 53.7L84.4 53.2L87.9 51.7L91.5 50.1L95.4 49.4L99.0 47.7L102.8 46.7L106.5 44.6L110.3 44.1L114.1 43.3L117.9 43.6L121.5 44.0L124.5 45.2L126.8 47.0L128.3 49.2L129.2 51.2L130.4 52.6L131.1 54.2L131.6 56.1L131.7 58.1L131.2 60.3L131.2 63.1L129.7 65.5L128.2 68.2L125.5 69.9L123.0 72.3L120.0 74.2L116.6 75.9L113.4 77.8L109.9 79.4L106.8 81.5L106.3 82.2"/><path d="M80.6 47.5L81.6 47.5L85.1 44.9L89.4 44.1L93.5 42.8L97.8 42.4L102.2 43.0L106.2 42.4L110.3 43.3L114.1 43.7L117.9 43.3L121.6 43.6L124.9 44.0L128.1 44.5L131.2 45.4L134.1 47.1L136.1 49.7L137.0 53.0L137.2 56.2L136.0 59.1L134.7 61.8L132.9 64.2L130.8 66.4L128.4 68.4L125.9 70.4L123.6 73.0L121.1 75.7L118.4 78.2L116.0 81.3L113.5 84.1L110.8 86.3L108.5 88.6L106.6 90.9L105.1 92.7L103.7 94.0L102.5 93.5L101.6 92.3L102.5 92.1L105.4 93.4L110.5 94.0L117.3 94.6L125.5 93.5L134.9 93.0L145.4 92.5L157.0 92.3L169.5 91.4L182.8 91.4L189.2 91.0"/><path d="M104.1 45.0L106.5 45.2L110.4 44.9L114.1 45.3L117.7 45.8L121.1 46.6L123.5 48.6L125.6 49.6L127.5 50.4L129.0 51.3L129.9 52.8L131.3 54.2L132.5 56.1L132.4 58.3L131.8 60.6L131.1 63.1L129.6 65.4L126.8 66.8L124.6 68.9L121.2 70.0L118.3 72.1L114.8 73.5L112.1 76.2L109.1 78.5L106.6 81.3L104.1 83.8L102.8 87.2L101.4 89.8L99.6 91.6L99.6 93.2L99.7 93.7L100.9 95.4L104.5 97.3L109.9 99.1L116.9 100.2L125.2 101.5L134.8 101.4L145.5 101.0L157.2 100.7L169.7 99.5L173.8 99.0"/><path d="M129.3 60.7L128.7 61.6L127.4 63.6L125.5 65.5L123.6 67.8L121.1 70.0L118.9 72.9L116.1 75.2L113.6 78.1L111.1 81.0L108.1 83.0L105.6 85.5L102.6 87.0L100.2 88.9L98.2 90.8L97.2 93.0L97.2 95.6L99.9 97.4L104.0 99.1L109.9 99.2L116.9 99.6L125.3 99.1L134.8 98.9L145.5 98.4L157.1 97.7L169.7 97.8L183.0 97.7L184.5 98.0"/><path d="M78.2 56.5L80.7 54.4L83.8 52.1L87.3 50.2L90.9 48.4L94.6 46.9L98.4 45.0L102.4 44.5L106.5 44.9L110.4 44.8L114.1 45.2L117.7 46.0L121.1 46.7L123.8 47.6L125.9 49.0L128.3 49.2L130.0 50.5L131.7 51.9L132.8 53.9L133.7 56.1L133.6 58.6L132.5 60.9L130.9 63.0L128.7 64.7L127.0 67.0L124.2 68.5L121.1 69.9L118.1 71.8L115.4 74.3L113.0 77.4L110.2 79.8L108.2 83.1L105.6 85.4L103.7 88.0L102.4 90.6L101.2 92.5L99.4 93.2L99.5 93.8L100.6 96.0L104.4 97.4L109.8 99.2L116.9 99.8L125.3 99.7L134.8 100.2L145.5 99.4L157.1 98.3L166.2 97.7"/><path d="M80.5 56.4L81.4 55.6L84.1 52.6L87.7 51.1L91.2 49.2L94.9 47.8L99.1 48.0L103.0 47.7L106.8 47.6L110.6 47.8L114.1 48.2L117.5 48.1L120.6 49.2L123.4 48.9L125.6 49.6L127.7 50.0L130.1 50.4L131.0 52.3L131.8 54.1L132.7 56.1L131.9 58.2L130.1 59.8L128.9 61.7L126.8 63.1L124.8 64.8L122.8 66.9L120.5 69.1L117.4 70.9L115.2 74.1L112.3 76.5L109.8 79.4L107.1 81.9L105.0 84.8L102.4 86.8L100.0 88.7L97.8 90.6L96.0 92.9L96.9 95.8L99.4 98.4L103.8 100.1L109.5 101.6L116.8 101.4L125.2 101.5L134.8 101.2L145.5 100.2L157.2 99.4L169.7 98.7L178.0 98.3"/><path d="M132.1 71.3L131.6 71.6L129.0 73.9L125.7 75.6L122.5 77.4L119.1 79.1L115.6 80.8L113.0 83.4L110.2 85.6L107.8 87.9L106.8 91.0L105.5 93.0L105.6 95.1L106.7 93.8L106.1 88.8L104.5 88.0L106.5 88.9L111.0 90.2L117.5 90.6L125.5 92.2L134.9 92.5L145.4 93.4L157.0 92.6L169.5 92.0L172.9 92.3"/><path d="M83.0 50.5L83.1 50.6L86.4 48.1L90.2 46.4L94.3 45.7L98.4 45.0L102.5 44.7L106.6 45.3L110.4 45.7L114.1 45.3L117.7 46.1L121.1 46.7L123.9 47.1L126.5 47.6L129.0 48.3L131.6 49.2L133.8 50.9L134.1 53.6L135.0 56.1L134.5 58.8L132.8 61.0L131.0 63.0L129.1 65.0L126.2 66.2L124.3 68.5L121.8 70.8L119.1 73.1L116.6 75.9L113.8 78.4L111.6 81.7L108.9 84.0L106.7 86.7L104.8 89.1L102.3 90.5L101.2 92.5L99.9 93.2L98.9 94.3L100.8 95.7L104.6 96.9L110.0 98.0L117.0 98.6L125.3 98.6L134.8 97.5L145.5 96.8L157.1 96.4L169.6 95.7L182.9 95.3L182.9 95.5"/><path d="M74.4 47.5L76.4 46.7L80.2 44.6L84.5 43.3L88.2 40.7L92.5 39.2L97.0 38.8L101.1 37.2L105.6 37.4L109.9 36.7L114.2 37.5L118.3 37.9L122.2 39.9L125.9 40.6L129.2 42.1L131.8 44.5L134.8 46.5L137.8 48.9L139.8 52.4L140.3 56.2L140.4 60.1L139.6 63.9L138.1 67.4L135.3 70.0L132.5 72.4L129.4 74.4L126.3 76.3L122.9 78.0L119.6 79.9L116.8 82.3L114.4 85.2L112.2 87.9L110.6 90.9L109.7 93.7L109.1 95.9L109.3 97.2L110.1 94.1L108.1 87.3L105.9 85.2L107.1 86.6L111.3 88.4L117.7 88.7L125.6 89.8L134.9 90.2L145.4 89.5L156.9 88.5L169.3 87.2L182.6 86.6L190.8 85.7"/><path d="M83.2 52.4L84.0 52.3L87.9 51.7L91.6 50.3L95.5 49.8L99.5 49.9L103.3 49.5L106.9 48.5L110.6 48.4L114.1 47.6L117.6 47.1L121.0 46.8L124.1 46.5L126.6 47.5L128.8 48.6L129.9 50.6L130.6 52.5L130.2 54.4L130.6 56.0L129.1 57.6L129.0 59.4L127.6 60.9L127.0 63.3L125.0 65.0L123.8 68.1L121.3 70.2L118.9 72.8L116.6 75.9L113.6 78.1L110.2 79.9L107.1 81.8L103.7 83.3L100.7 85.2L98.2 87.3L96.3 89.7L95.4 92.9L96.4 96.2L99.5 98.4L104.0 99.2L109.9 98.9L116.9 99.2L125.3 99.8L134.8 99.2L145.5 99.9L157.2 100.1L169.8 100.9L183.1 101.1L188.0 100.6"/><path d="M82.4 51.2L83.4 51.2L87.1 49.7L91.0 48.7L94.9 47.9L98.7 46.5L102.5 44.8L106.4 43.9L110.3 42.8L114.2 41.9L118.0 42.5L121.8 42.3L125.0 43.7L127.4 45.9L129.6 47.6L130.5 50.1L131.9 51.8L132.4 53.9L132.1 56.1L132.4 58.3L132.2 60.8L132.4 63.9L130.5 66.1L128.8 68.8L127.0 71.7L123.7 73.2L120.9 75.4L117.4 76.9L114.1 78.8L111.0 80.9L108.0 82.9L104.9 84.7L103.1 87.5L101.9 90.2L101.1 92.5L101.0 93.3L101.7 92.2L102.4 92.3L105.6 92.9L110.6 93.4L117.2 95.1L125.4 95.8L134.8 97.1L145.5 97.5L157.1 97.7L169.6 96.9L182.9 96.3L190.9 96.6"/><path d="M81.6 49.7L82.4 49.2L86.7 48.8L90.8 48.2L94.8 47.3L98.9 47.3L102.7 45.9L106.5 45.2L110.4 44.5L114.1 43.6L117.9 43.2L121.6 43.4L125.0 43.6L127.9 44.8L130.4 46.5L131.8 49.0L133.0 51.3L133.3 53.8L133.2 56.1L132.2 58.3L131.8 60.6L131.0 63.0L129.5 65.3L127.8 67.7L126.1 70.7L123.8 73.3L121.4 76.0L118.5 78.4L115.3 80.4L112.2 82.3L108.5 83.6L105.9 85.8L103.1 87.5L101.5 89.9L100.0 91.2"/><path d="M81.4 39.7L82.5 38.6L87.4 38.2L91.7 36.5L96.2 35.4L100.7 34.5L105.2 33.6L109.6 32.2L114.2 32.1L118.7 32.0L123.3 33.3L127.7 34.8L131.5 37.4L135.2 40.1L138.5 43.3L140.9 47.4L142.1 51.9L143.1 56.3L143.4 60.8L142.8 65.2L141.0 69.1L139.1 73.0L136.1 75.9L133.6 79.2L129.8 80.7L126.5 82.6L123.2 84.5L119.8 86.2L116.9 88.4L115.1 91.5L112.9 93.4L112.4 96.3L111.8 98.0L112.8 99.3L115.5 94.5L113.5 83.1L109.1 78.6L109.1 78.6L112.4 80.1L118.2 81.3L125.8 82.3L134.9 82.7L145.3 83.4L152.3 83.3"/><path d="M86.6 67.9L88.0 67.2L90.0 64.8L92.9 63.8L95.9 62.9L99.0 62.0L102.0 61.0L105.2 60.8L108.3 60.0L111.2 59.4L114.1 58.7L116.8 58.5L119.2 57.7L120.7 57.8L121.8 57.4L122.1 57.5L121.6 57.7L121.0 57.2L119.8 56.7L118.5 55.8L118.4 55.1L118.4 54.9L117.9 55.1L117.6 55.8L116.8 56.9L116.2 59.3L114.4 61.7L111.9 63.8L109.3 66.2L106.1 68.3L102.9 70.6L99.0 72.2L95.2 74.1L91.4 76.3L87.2 78.7L83.6 82.4L79.6 91.5L84.0 105.7L92.4 112.9L100.2 114.8L107.6 116.1L115.8 116.5L124.8 115.7L134.8 115.7L145.7 116.5L157.6 116.8L170.3 116.8L181.1 117.5"/><path d="M74.4 44.0L74.5 43.5L78.7 41.4L83.0 39.7L87.6 39.0L92.1 38.0L96.8 38.0L101.3 38.0L105.8 38.6L110.0 38.1L114.2 38.8L118.2 38.8L122.4 38.7L126.4 39.0L130.5 39.6L134.1 41.5L137.5 44.2L140.3 47.7L142.0 51.9L142.3 56.3L141.2 60.3L139.3 63.8L136.7 66.5L134.7 69.5L131.6 71.5L128.8 73.7L126.6 76.7L123.9 79.3L121.6 82.4L119.2 85.5L117.0 88.4L114.7 91.0L112.4 92.9L110.7 94.7L109.5 96.1L108.4 96.7L109.0 94.0L107.0 88.1L105.5 85.9L107.3 85.9L111.5 86.5L117.8 87.1L125.7 86.2L134.9 85.8L145.3 85.2L156.8 84.7L169.2 84.3L182.5 84.5L190.7 84.3"/><path d="M75.9 45.3L79.8 43.8L83.7 41.5L88.0 39.9L92.1 37.9L96.6 37.2L101.1 36.8L105.4 35.9L109.9 36.2L114.2 37.2L118.3 38.3L122.3 38.9L126.1 40.1L129.6 41.4L132.9 43.2L135.9 45.5L138.6 48.5L141.0 52.1L141.8 56.3L141.7 60.4L140.7 64.3L138.1 67.3L135.9 70.5L132.6 72.5L129.4 74.4L126.4 76.5L123.4 78.6L120.3 80.8L117.9 83.7L115.4 86.4L113.4 89.4L111.9 92.3L110.6 94.6L110.3 96.8L109.9 97.6L111.0 94.2L108.5 86.9L105.9 85.2L107.4 85.5L111.5 86.9L117.7 87.5L125.6 88.5L134.9 87.6L145.3 87.5L156.8 86.5L169.3 85.8L182.5 84.4L188.0 83.8"/><path d="M87.5 61.3L88.0 60.7L90.4 57.9L93.5 55.9L96.8 54.4L100.0 52.2L103.7 51.9L107.3 51.8L110.8 51.5L114.1 52.0L117.2 53.2L119.9 53.7L121.6 54.7L123.0 55.0L124.1 54.9L124.8 55.0L125.0 55.2L125.8 55.4L127.2 56.0L127.2 57.1L126.2 58.2L125.3 59.5L124.0 60.9L122.0 62.1L119.3 62.9L116.6 64.3L114.1 66.6L111.0 68.6L108.6 71.6L105.3 73.6L102.8 76.7L100.1 79.4L97.6 82.2L94.9 84.7L92.6 87.6L90.8 92.5L91.9 99.7L96.4 104.7L102.0 107.5L108.5 109.2L116.2 110.4L125.0 110.3L134.8 109.9L145.7 109.8L157.4 108.2L170.0 108.0L183.3 106.5L194.9 106.2"/><path d="M92.5 66.3L93.5 65.4L96.3 64.1L98.8 61.4L101.7 59.4L104.7 57.6L108.0 57.3L111.1 56.3L114.1 56.8L116.8 57.6L119.1 58.7L120.3 59.1L120.7 59.6L120.0 60.4L119.1 59.8L119.3 58.1L119.0 56.8L119.9 55.8L120.1 55.5L120.8 55.9L120.7 56.7L119.9 57.6L118.6 58.7L116.8 60.0L114.1 61.3L111.3 63.1L107.8 64.4L104.3 66.0L100.9 68.1L97.7 70.7L94.4 73.2L91.9 76.7L89.0 80.1L86.1 83.9L82.7 91.8L86.4 103.9L93.5 110.7L100.3 114.3L107.6 116.2L115.7 117.1L124.7 118.9L134.8 119.4L145.8 118.8L157.6 118.1L170.3 117.2L176.2 116.8"/><path d="M68.6 41.3L71.9 38.9L76.6 37.1L81.4 35.9L86.5 35.7L91.4 35.5L96.1 35.2L100.9 35.5L105.4 35.8L109.8 35.0L114.2 34.8L118.5 34.9L123.1 34.3L127.8 34.5L132.2 36.0L136.9 37.8L140.5 41.6L143.5 46.1L143.9 51.5L144.3 56.3L143.2 60.8L141.0 64.5L138.8 67.8L136.5 71.0L134.3 74.2L132.2 77.5L129.3 80.1L127.1 83.5L124.0 85.6L121.4 88.3L119.0 91.0L116.5 93.0L114.7 95.4L112.8 96.7L112.0 98.1L111.4 98.4L112.5 94.3L111.1 85.0L107.8 81.3L108.5 80.7L112.3 80.9L118.2 81.0L125.8 80.5L134.9 80.6L145.2 79.9L156.7 80.6L169.1 80.2L176.0 80.5"/><path d="M83.8 57.3L85.6 55.7L89.1 54.5L92.2 52.1L95.8 51.0L99.3 48.8L102.9 47.4L106.7 47.0L110.4 46.0L114.1 45.6L117.6 47.0L120.9 47.5L123.4 48.9L125.3 50.2L126.4 51.7L127.1 53.0L128.1 53.7L128.6 54.8L129.4 56.0L129.9 57.7L130.6 60.1L129.3 62.0L128.4 64.4L126.4 66.4L123.9 68.1L120.7 69.4L117.5 71.1L114.2 72.7L111.3 75.1L107.8 76.8L105.0 79.3L102.6 82.2L100.3 84.8L98.6 87.6L97.5 90.4L96.8 93.0L97.6 95.3L100.0 97.3L104.1 98.8L109.7 100.4L116.8 101.6L125.2 103.1L134.8 104.0L145.6 103.9L157.3 102.9L169.8 102.8L178.4 101.6"/><path d="M86.5 67.1L87.4 66.2L90.4 65.7L93.0 64.0L96.0 63.2L99.1 62.3L102.0 60.8L105.1 59.9L108.2 59.3L111.1 57.9L114.1 57.5L116.9 57.3L119.3 57.1L121.1 56.4L121.9 57.1L121.7 58.0L121.0 58.2L120.2 57.6L119.5 56.7L118.8 55.8L118.5 55.1L118.7 55.1L118.9 55.6L119.0 57.0L118.0 58.1L116.8 60.0L115.4 62.9L112.8 64.9L110.0 67.1L106.3 68.6L102.5 70.1L98.7 71.9L95.1 74.0L91.0 75.9L87.5 79.0L84.7 83.0L81.2 91.7L85.1 104.9L93.2 111.3L100.4 113.7L107.9 113.9L115.9 114.4L124.8 115.4L134.8 116.3L145.7 116.3L157.6 116.8L160.3 116.6"/><path d="M88.0 58.0L90.0 56.9L92.9 54.3L96.3 52.8L99.7 50.9L103.4 49.9L106.9 48.3L110.6 48.3L114.1 48.0L117.5 48.9L120.5 50.2L122.8 51.0L124.1 52.5L124.9 53.8L125.6 54.3L126.7 54.4L127.3 55.0L128.2 56.0L128.5 57.4L128.9 59.3L127.5 60.9L126.1 62.6L124.8 64.8L122.0 66.0L119.1 67.5L115.9 68.9L113.2 71.4L109.7 73.0L106.8 75.6L103.9 78.0L101.0 80.4L98.8 83.4L97.1 86.4L95.2 89.1L94.6 92.8L95.0 97.3L98.4 100.5L103.3 102.2L109.2 103.7L116.5 105.8L125.1 106.3L134.8 106.9L145.6 106.7L157.3 106.7L169.9 105.8L183.2 104.3L191.2 103.3"/><path d="M90.9 62.7L92.3 62.3L95.2 60.8L98.3 59.5L101.2 57.4L104.4 56.0L107.6 54.5L110.9 54.2L114.1 53.4L117.1 53.6L119.8 54.1L121.7 54.4L122.7 55.5L122.5 57.0L122.4 57.0L121.6 57.0L121.0 56.4L121.1 55.9L121.5 55.8L122.3 56.6L122.2 57.7L122.2 59.5L121.1 61.1L119.2 62.8L116.8 64.6L113.8 66.3L110.8 68.2L107.4 70.0L103.6 71.5L100.2 73.6L96.5 75.5L93.3 78.2L90.6 81.3L88.3 85.1L86.4 92.1L89.1 101.8L95.5 106.6L97.4 106.8"/><path d="M83.5 41.6L83.8 41.6L88.5 41.5L92.9 40.7L97.1 39.6L101.6 39.7L105.7 38.1L109.9 37.5L114.2 36.6L118.4 35.9L122.8 36.4L127.1 36.6L131.1 38.4L134.2 41.4L136.5 45.0L138.7 48.5L139.7 52.4L138.8 56.2L138.6 59.7L137.7 63.1L136.4 66.3L135.1 69.8L132.9 72.8L130.6 75.8L128.1 78.6L125.6 81.5L122.3 83.4L118.7 84.8L115.8 87.0L113.2 89.1L110.6 90.8L108.9 93.0L107.8 94.8L107.8 96.4L108.8 94.0L107.9 87.4L106.2 84.6L107.8 83.8L111.8 84.5L117.9 84.9L125.7 85.3L134.9 85.7L145.3 86.7L153.5 86.4"/><path d="M127.6 57.7L127.4 58.7L126.0 60.0L124.1 61.0L122.3 62.3L120.1 63.9L117.5 65.4L115.0 67.8L112.1 70.0L109.6 72.9L107.0 75.8L104.3 78.5L101.9 81.4L98.8 83.3L96.2 85.8L93.7 88.2L92.0 92.6L92.8 99.0L96.8 103.9L102.4 105.6L108.7 107.6L116.3 107.8L125.1 107.5L134.8 107.2L145.6 106.6L157.3 105.3L169.9 104.4L171.4 104.8"/><path d="M131.9 54.9L132.2 56.1L131.3 58.0L129.9 59.8L128.1 61.2L126.4 62.9L124.6 64.6L122.8 66.8L120.3 68.9L117.7 71.3L115.3 74.1L112.9 77.2L110.0 79.6L107.1 81.9L104.6 84.4L101.9 86.3L99.2 88.1L97.6 90.5L95.3 92.9L95.9 96.6L99.1 99.2L103.7 100.5L109.5 101.4L116.8 101.7L125.2 100.9L134.8 100.2L145.5 99.5L157.2 99.1L169.7 99.0L181.0 98.9"/><path d="M81.3 50.3L82.6 49.5L86.4 48.0L90.5 47.2L94.5 46.4L98.6 45.8L102.7 45.9L106.6 45.4L110.4 45.6L114.1 45.9L117.7 45.7L121.3 45.4L124.4 45.6L127.3 46.1L130.0 47.0L132.5 48.4L133.5 51.0L134.0 53.6L134.2 56.1L132.8 58.4L132.1 60.7L129.7 62.2L128.2 64.3L126.9 66.9L124.6 68.9L122.4 71.5L120.1 74.4L117.5 77.0L114.7 79.5L112.4 82.6L109.3 84.5L106.4 86.3L105.9 86.6"/></g></g></svg>
<div class="abs" style="left:7px;top:51px;width:36px;height:36px;background:linear-gradient(135deg,#fbfbf9 0,#ecece6 45%,#e2e4dc 70%,#f2f2ee 100%);border:1px solid #fdfdfb;border-radius:2px;box-shadow:2px 3px 3px rgba(25,30,45,.75);overflow:hidden"><svg width="34" height="34" viewBox="1 1 34 34" style="position:absolute;left:0;top:0"><defs><linearGradient id="hg" x1="0" y1="0" x2="1" y2="1"><stop offset="0" stop-color="#c2d07e"/><stop offset=".5" stop-color="#a3b756"/><stop offset="1" stop-color="#6f8636"/></linearGradient><linearGradient id="fg" x1="0" y1="0" x2="1" y2="1"><stop offset="0" stop-color="#f4f4f4"/><stop offset=".5" stop-color="#bdbdbd"/><stop offset="1" stop-color="#6e6e6e"/></linearGradient><radialGradient id="bg" cx=".45" cy=".4" r=".6"><stop offset="0" stop-color="#7a7b7e"/><stop offset="1" stop-color="#2d2e31"/></radialGradient></defs><path d="M13 8L30 3M14 14L24 4" stroke="#e9d9c8" stroke-width="1" opacity=".6"/><path d="M30.5 -1L37 3 29.5 16 23 12Z" fill="url(#hg)"/><path d="M24 10.5L31.5 15 27.5 22.5 19.5 18Z" fill="url(#fg)"/><path d="M22.7 12.7L30.3 17.2M21.3 15.3L28.8 19.8" stroke="#8a8a8a" stroke-width=".8"/><path d="M20 17.5C13 16.5 6.5 21 6.5 26.5C8 31 16 32 21.5 29C25.5 26.5 27.5 24.5 27.3 22Z" fill="url(#bg)"/><path d="M1.5 32C5 29 8.5 26.5 12 27.5C14 28 15 30 17.5 29C20 28 22 29.5 19.5 31.5C14 34.5 6 33.8 1.5 32Z" fill="#92ab3e"/></svg></div>
<svg class="abs" style="left:105px;top:151px;overflow:visible;filter:drop-shadow(2px 3px 2px rgba(20,26,40,.6))" width="44" height="44" viewBox="0 0 44 44" font-family="Liberation Sans, sans-serif" font-size="29" stroke-linejoin="round" stroke-linecap="round"><g transform="translate(8 0) scale(1.07 1)"><text x="0" y="30.4" fill="#10151f" stroke="#0c1019" stroke-width="4.2">B</text><text x="0" y="30.4" fill="#a3b5d5" stroke="#a3b5d5" stroke-width="1.0">B</text></g></svg>
<svg class="abs" style="left:631px;top:157px;overflow:visible;filter:drop-shadow(2px 3px 2px rgba(20,26,40,.6))" width="44" height="44" viewBox="0 0 44 44" font-family="Liberation Sans, sans-serif" font-size="29" stroke-linejoin="round" stroke-linecap="round"><g transform="translate(8 0) scale(1.04 1)"><text x="0" y="30.4" fill="#10151f" stroke="#0c1019" stroke-width="4.2">A</text><text x="0" y="30.4" fill="#a3b5d5" stroke="#a3b5d5" stroke-width="1.0">A</text></g></svg>
<svg class="abs" style="left:346px;top:364px;overflow:visible;filter:drop-shadow(2px 3px 2px rgba(20,26,40,.6))" width="44" height="44" viewBox="0 0 44 44" font-family="Liberation Sans, sans-serif" font-size="29" stroke-linejoin="round" stroke-linecap="round"><g transform="translate(8 0) scale(1.11 1)"><text x="0" y="30.4" fill="#10151f" stroke="#0c1019" stroke-width="4.2">C</text><text x="0" y="30.4" fill="#a3b5d5" stroke="#a3b5d5" stroke-width="1.0">C</text></g></svg>
<svg class="abs" style="left:453px;top:638px;overflow:visible;filter:drop-shadow(2px 3px 2px rgba(20,26,40,.6))" width="44" height="44" viewBox="0 0 44 44" font-family="Liberation Sans, sans-serif" font-size="29" stroke-linejoin="round" stroke-linecap="round"><g transform="translate(8 0) scale(1.03 1)"><text x="0" y="30.4" fill="#10151f" stroke="#0c1019" stroke-width="4.2">D</text><text x="0" y="30.4" fill="#a3b5d5" stroke="#a3b5d5" stroke-width="1.0">D</text></g></svg>
<svg class="abs" style="left:92px;top:622px;overflow:visible;filter:drop-shadow(2px 3px 2px rgba(20,26,40,.6))" width="44" height="44" viewBox="0 0 44 44" font-family="Liberation Sans, sans-serif" font-size="29" stroke-linejoin="round" stroke-linecap="round"><g transform="translate(8 0) scale(1.03 1)"><text x="0" y="30.4" fill="#10151f" stroke="#0c1019" stroke-width="4.2">E</text><text x="0" y="30.4" fill="#a3b5d5" stroke="#a3b5d5" stroke-width="1.0">E</text></g></svg>
<div class="abs" style="left:268px;top:2px;width:353px;height:345px;background:#dddde2;border:1px solid #fbfbfd;box-shadow:inset -1px -1px 0 #c9c9dc,0 0 0 1px #f0f0f6,3px 3px 1px #2f394c,5px 5px 3px rgba(35,45,65,.65)"></div>
<div class="abs" style="left:270px;top:3px;width:1px;height:343px;background:#9a9ab6"></div>
<div class="abs" style="left:269px;top:3px;width:351px;height:17px;background:linear-gradient(#8f8fb0 0,#a6a6c4 7%,#b9b9d0 25%,#dcdce8 50%,#f8f8fb 75%,#fff 93%,#9090b0 100%)"></div>
<div class="abs" style="left:591px;top:5px;width:13px;height:12px;border-radius:2px;border:1px solid #65658c;background:linear-gradient(135deg,#f0f0f8,#a3a3c0 60%,#8c8cae)"><span style="position:absolute;left:2px;top:6px;width:6px;height:3px;background:#16162a;border-bottom:1px solid #fff"></span></div>
<div class="abs" style="left:606px;top:5px;width:13px;height:12px;border-radius:2px;border:1px solid #d06868;background:linear-gradient(135deg,#f29a9a,#e06060 60%,#d85050);color:#fff;font-weight:bold;font-size:13px;line-height:10px;text-align:center;letter-spacing:0">×</div>
<div class="abs" style="left:269px;top:20px;width:351px;height:16px;background:#c9c9ce"></div>
<svg class="abs" style="left:272px;top:19px" width="348" height="18" viewBox="0 0 348 18"><path d="M0 16.5H3.5V3.5Q3.5 2.5 4.5 2.5H57L69 16.5H348" fill="#dddde2" stroke="#111" stroke-width="1"/><path d="M4.5 16V3.5H56.5" fill="none" stroke="#fff" stroke-width="1"/></svg>
<div class="abs" style="left:282px;top:23px;font-weight:bold;font-size:11px;line-height:13px;letter-spacing:-.1px">Brushes</div>
<div class="abs" style="left:606px;top:23px;width:11px;height:11px;border-radius:50%;background:radial-gradient(circle at 35% 30%,#fff,#c9d3f0);border:1px solid #8d9cc9"><span style="position:absolute;left:3px;top:2px;border-left:4px solid #1c3fb0;border-top:3px solid transparent;border-bottom:3px solid transparent"></span></div>
<div class="abs" style="left:278px;top:43px;width:113px;height:300px;border:1px solid #000;box-shadow:inset 1px 1px 0 rgba(0,0,0,.35);background:#dddde2"></div>
<div class="abs" style="left:279px;top:44px;width:111px;height:18px;background:#e1e1e6"></div>
<div class="lbl " style="top:48px;left:284px;letter-spacing:0.05px;">Brush Presets</div>
<div class="abs" style="left:278px;top:62px;width:113px;height:5px;border-top:1px solid #000;border-bottom:1px solid #000;box-shadow:0 1px 0 rgba(0,0,0,.35);background:#f0f0f3"></div>
<div class="abs" style="left:279px;top:67px;width:111px;height:19px;background:#b7b9c8"></div>
<div class="abs" style="left:285px;top:69px;font-weight:bold;font-size:11px;line-height:13px;letter-spacing:-0.1px;white-space:nowrap">Brush Tip Shape</div>
<div class="row" style="left:280px;top:86px;width:110px"><div class="cb"><svg width="9" height="9" viewBox="0 0 9 9" style="position:absolute;left:0;top:0"><path d="M1.5 4l2 2.2L7.5 1.8" fill="none" stroke="#21a121" stroke-width="1.8"/></svg></div><span style="letter-spacing:-0.4px;">Shape Dynamics</span></div>
<div class="row" style="left:280px;top:106px;width:110px"><div class="cb"><svg width="9" height="9" viewBox="0 0 9 9" style="position:absolute;left:0;top:0"><path d="M1.5 4l2 2.2L7.5 1.8" fill="none" stroke="#21a121" stroke-width="1.8"/></svg></div><span style="letter-spacing:-0.0px;">Scattering</span></div>
<div class="row" style="left:280px;top:126px;width:110px"><div class="cb"></div><span style="letter-spacing:0.36px;">Texture</span></div>
<div class="row" style="left:280px;top:146px;width:110px"><div class="cb"><svg width="9" height="9" viewBox="0 0 9 9" style="position:absolute;left:0;top:0"><path d="M1.5 4l2 2.2L7.5 1.8" fill="none" stroke="#21a121" stroke-width="1.8"/></svg></div><span style="letter-spacing:-0.25px;">Dual Brush</span></div>
<div class="row" style="left:280px;top:166px;width:110px"><div class="cb"></div><span style="letter-spacing:-0.18px;">Color Dynamics</span></div>
<div class="row" style="left:280px;top:186px;width:110px"><div class="cb"><svg width="9" height="9" viewBox="0 0 9 9" style="position:absolute;left:0;top:0"><path d="M1.5 4l2 2.2L7.5 1.8" fill="none" stroke="#21a121" stroke-width="1.8"/></svg></div><span style="letter-spacing:-0.05px;">Other Dynamics</span></div>
<div class="abs" style="left:280px;top:207px;width:110px;height:2px;border-top:1px solid #9d9da6;border-bottom:1px solid #f6f6fa"></div>
<div class="row" style="left:280px;top:210px;width:110px;border-top:none"><div class="cb"></div><span style="letter-spacing:-0.72px;">Noise</span></div>
<div class="row" style="left:280px;top:230px;width:110px;border-top:none"><div class="cb"></div><span style="letter-spacing:-0.25px;">Wet Edges</span></div>
<div class="row" style="left:280px;top:250px;width:110px;border-top:none"><div class="cb"></div><span style="letter-spacing:0.06px;">Airbrush</span></div>
<div class="row" style="left:280px;top:270px;width:110px;border-top:none"><div class="cb"></div><span style="letter-spacing:-0.42px;">Smoothing</span></div>
<div class="row" style="left:280px;top:290px;width:110px;border-top:none"><div class="cb"></div><span style="letter-spacing:0.35px;">Protect Texture</span></div>
<div class="circ" style="left:381px;top:67px">A</div>
<div class="circ" style="left:381px;top:88px">B</div>
<div class="circ" style="left:381px;top:108px">C</div>
<div class="circ" style="left:381px;top:148px">D</div>
<div class="circ" style="left:381px;top:188px">E</div>
<div class="grid" style="left:402px;top:43px;width:209px;height:114px">
<div class="cell" style="left:1px;top:-25px"><b style="bottom:-2px">28</b></div>
<div class="cell" style="left:33px;top:-25px"><b style="bottom:-2px">14</b></div>
<div class="cell" style="left:65px;top:-25px"><b style="bottom:-2px">8</b></div>
<div class="cell" style="left:97px;top:-25px"><b style="bottom:-2px">22</b></div>
<div class="cell" style="left:129px;top:-25px"><b style="bottom:-2px">42</b></div>
<div class="cell" style="left:161px;top:-25px"><b style="bottom:-2px">65</b></div>
<div class="cell" style="left:1px;top:7px;height:31px"><svg width="31" height="31" viewBox="0 0 31 31"><circle cx="15" cy="10.5" r="9.3" fill="#444" filter="url(#sp2)"/></svg><b>111</b></div>
<div class="cell" style="left:33px;top:7px;height:31px"><svg width="31" height="31" viewBox="0 0 31 31"><circle cx="15" cy="10.5" r="9.3" fill="#555" filter="url(#sp3)"/></svg><b>104</b></div>
<div class="cell" style="left:65px;top:7px;height:31px"><svg width="31" height="31" viewBox="0 0 31 31"><path d="M17.2 10.5L24.0 10.5M17.0 11.3L23.3 13.9M16.6 12.1L21.4 16.9M15.8 12.5L18.4 18.8M15.0 12.7L15.0 19.5M14.2 12.5L11.6 18.8M13.4 12.1L8.6 16.9M13.0 11.3L6.7 13.9M12.8 10.5L6.0 10.5M13.0 9.7L6.7 7.1M13.4 8.9L8.6 4.1M14.2 8.5L11.6 2.2M15.0 8.3L15.0 1.5M15.8 8.5L18.4 2.2M16.6 8.9L21.4 4.1M17.0 9.7L23.3 7.1" stroke="#000" stroke-width="1.5"/></svg><b>69</b></div>
<div class="cell" style="left:97px;top:7px;height:31px"><svg width="31" height="31" viewBox="0 0 31 31"><g filter="url(#wob)"><ellipse cx="16" cy="11.5" rx="8.8" ry="8" fill="#a2a2a2"/><ellipse cx="14.5" cy="9.0" rx="5.5" ry="4.2" fill="#c2c2c2"/><ellipse cx="18.5" cy="13.5" rx="4" ry="3" fill="#8a8a8a"/><path d="M10 12.5q5 6 11 1M12 7.5q4 3 8 0" fill="none" stroke="#7d7d7d" stroke-width=".9"/></g></svg><b>48</b></div>
<div class="cell" style="left:129px;top:7px;height:31px"><svg width="31" height="31" viewBox="0 0 31 31"><g filter="url(#wob)"><ellipse cx="16" cy="11.5" rx="8.8" ry="8" fill="#a2a2a2"/><ellipse cx="14.5" cy="9.0" rx="5.5" ry="4.2" fill="#c2c2c2"/><ellipse cx="18.5" cy="13.5" rx="4" ry="3" fill="#8a8a8a"/><path d="M10 12.5q5 6 11 1M12 7.5q4 3 8 0" fill="none" stroke="#7d7d7d" stroke-width=".9"/></g></svg><b>117</b></div>
<div class="cell" style="left:161px;top:7px;height:31px"><svg width="31" height="31" viewBox="0 0 31 31"><ellipse cx="17.5" cy="14.0" rx="8.5" ry="5.2" fill="#c6c6c6"/><path d="M9.5 15.5q8 6 16-1" stroke="#999" fill="none" stroke-width="1.2"/><circle cx="14" cy="7.0" r="4.3" fill="#a6a6a6"/><path d="M10.5 7.0l-3.5 1.2 3.8 1.4z" fill="#6a6a6a"/><circle cx="13" cy="6.0" r=".8" fill="#333"/></svg><b>45</b></div>
<div class="cell" style="left:1px;top:39px;height:31px"><svg width="31" height="31" viewBox="0 0 31 31"><g filter="url(#wob)"><path d="M7 4.5l6 3 4-5 3 5 6-2-3 7-2 8-8-1-2-7z" fill="#8f8f8f"/><path d="M11 9.5l7 5M19 8.5l-3 8" stroke="#6d6d6d" stroke-width=".8"/></g></svg><b>84</b></div>
<div class="cell" style="left:33px;top:39px;height:31px"><svg width="31" height="31" viewBox="0 0 31 31"><circle cx="15" cy="10.5" r="7.8" fill="#000"/></svg><b>35</b></div>
<div class="cell" style="left:65px;top:39px;height:31px"><svg width="31" height="31" viewBox="0 0 31 31"><circle cx="15" cy="10.5" r="7.8" fill="#000"/></svg><b>50</b></div>
<div class="cell" style="left:97px;top:39px;height:31px"><svg width="31" height="31" viewBox="0 0 31 31"><path d="M15 11C12 2 5 1 6 7C6 11 10 12 8 16C9 21 14 18 15 14C16 18 21 21 22 16C20 12 24 11 24 7C25 1 18 2 15 11Z" fill="#000"/></svg><b>29</b></div>
<div class="cell" style="left:129px;top:39px;height:31px"><svg width="31" height="31" viewBox="0 0 31 31"><circle cx="15" cy="10.5" r="7.8" fill="#000"/></svg><b>33</b></div>
<div class="cell s" style="left:161px;top:39px;height:31px"><svg width="31" height="31" viewBox="0 0 31 31"><circle cx="15" cy="10.5" r="9.3" fill="#c44" filter="url(#sp3)"/></svg><b>50</b></div>
<div class="cell" style="left:1px;top:71px;height:31px"><svg width="31" height="31" viewBox="0 0 31 31"><circle cx="11.3" cy="8.2" r="4.2" fill="url(#sg)" opacity=".8"/><circle cx="18.5" cy="13.0" r="4.2" fill="url(#sg)" opacity=".8"/><circle cx="17.5" cy="7.9" r="3.2" fill="url(#sg)" opacity=".8"/><circle cx="12.8" cy="14.1" r="3.2" fill="url(#sg)" opacity=".8"/><circle cx="14.2" cy="9.6" r="4.5" fill="url(#sg)" opacity=".8"/></svg><b>17</b></div>
<div class="cell" style="left:33px;top:71px;height:31px"><svg width="31" height="31" viewBox="0 0 31 31"><path d="M26.0 10.3L26.1 15.0L20.6 15.9L17.6 16.5L14.5 17.6L12.0 15.5L9.6 13.5L8.8 10.3L7.6 6.2L10.3 3.0L14.4 2.4L17.4 4.9L19.9 5.7L22.0 7.5Z" fill="#0a0a0a" filter="url(#rg3)"/></svg><b>37</b></div>
<div class="cell" style="left:65px;top:71px;height:31px"><svg width="31" height="31" viewBox="0 0 31 31"><circle cx="15" cy="10.5" r="9.3" fill="#555" filter="url(#sp1)"/></svg><b>40</b></div>
<div class="cell" style="left:97px;top:71px;height:31px"><svg width="31" height="31" viewBox="0 0 31 31"><circle cx="11.5" cy="6.7" r="4.2" fill="url(#sg)" opacity=".8"/><circle cx="17.8" cy="12.8" r="4.2" fill="url(#sg)" opacity=".8"/><circle cx="16.6" cy="7.8" r="3.2" fill="url(#sg)" opacity=".8"/><circle cx="13.3" cy="14.1" r="3.2" fill="url(#sg)" opacity=".8"/><circle cx="15.5" cy="9.9" r="4.5" fill="url(#sg)" opacity=".8"/></svg><b>45</b></div>
<div class="cell" style="left:129px;top:71px;height:31px"><svg width="31" height="31" viewBox="0 0 31 31"><circle cx="15" cy="11" r="9" fill="#111" filter="url(#sp4)"/></svg><b>90</b></div>
<div class="cell" style="left:161px;top:71px;height:31px"><svg width="31" height="31" viewBox="0 0 31 31"><circle cx="15" cy="10.5" r="8" fill="#333" filter="url(#sp1)"/></svg><b>21</b></div>
<div class="cell" style="left:1px;top:103px;height:31px"><svg width="31" height="31" viewBox="0 0 31 31"><circle cx="15" cy="9" r="9" fill="#333" filter="url(#sp2)"/></svg></div>
<div class="cell" style="left:33px;top:103px;height:31px"><svg width="31" height="31" viewBox="0 0 31 31"><circle cx="15" cy="9" r="9" fill="#555" filter="url(#sp3)"/></svg></div>
<div class="cell" style="left:65px;top:103px;height:31px"><svg width="31" height="31" viewBox="0 0 31 31"><circle cx="15" cy="9" r="9" fill="#444" filter="url(#sp1)"/></svg></div>
<div class="cell" style="left:97px;top:103px;height:31px"><svg width="31" height="31" viewBox="0 0 31 31"><path d="M24.6 8.8L24.1 12.6L22.0 16.0L17.7 15.4L14.5 16.1L11.9 14.2L9.7 11.9L9.4 8.8L8.0 4.8L11.1 2.4L14.7 2.1L18.0 1.1L20.8 3.0L21.0 6.5Z" fill="#0a0a0a" filter="url(#rg2)"/></svg></div>
<div class="cell" style="left:129px;top:103px;height:31px"><svg width="31" height="31" viewBox="0 0 31 31"><circle cx="15" cy="9" r="9" fill="#111" filter="url(#sp4)"/></svg></div>
<div class="cell" style="left:161px;top:103px;height:31px"><svg width="31" height="31" viewBox="0 0 31 31"><path d="M24.2 8.8L25.0 13.0L22.2 16.3L17.7 15.2L15.1 13.7L12.6 13.3L10.8 11.4L7.0 8.8L7.3 4.5L10.4 1.5L14.4 1.0L17.8 2.0L19.4 4.8L22.1 6.0Z" fill="#0a0a0a" filter="url(#rg1)"/></svg></div>
</div>
<div class="abs" style="left:594px;top:44px;width:16px;height:112px;background:#f3f3f7;border-left:1px solid #111"></div>
<div class="abs" style="left:596px;top:46px;width:13px;height:14px;background:linear-gradient(135deg,#f6f6fa,#cfcfdc);border:1px solid #a9a9bb;border-top-color:#fff;border-left-color:#fff;box-shadow:0 0 0 1px #b4b4c2"><svg width="10" height="8" viewBox="0 0 10 8" style="position:absolute;left:.5px;top:2px"><path d="M1.2 5.8L5 2 8.8 5.8" fill="none" stroke="#222" stroke-width="2.2"/></svg></div>
<div class="abs" style="left:596px;top:140px;width:13px;height:14px;background:linear-gradient(135deg,#f6f6fa,#cfcfdc);border:1px solid #a9a9bb;border-top-color:#fff;border-left-color:#fff;box-shadow:0 0 0 1px #b4b4c2"><svg width="10" height="8" viewBox="0 0 10 8" style="position:absolute;left:.5px;top:2px"><path d="M1.2 1.6L5 5.4 8.8 1.6" fill="none" stroke="#222" stroke-width="2.2"/></svg></div>
<div class="abs" style="left:596px;top:105px;width:13px;height:13px;background:linear-gradient(135deg,#fafafd,#d6d6e2);border:1px solid #a9a9bb;box-shadow:0 0 0 1px #c4c4d0"></div>
<div class="abs" style="left:402px;top:43px;width:209px;height:114px;border:1px solid #111;border-top-width:2px;pointer-events:none"></div>
<div class="lbl " style="top:164px;left:400px;letter-spacing:-0.15px;">Diameter</div>
<div class="inp" style="left:564px;top:163px;width:49px;height:15px">50 px</div>
<div class="trk" style="left:402px;top:182px;width:210px"></div>
<svg class="thumb" style="left:448px;top:182px" width="11" height="11" viewBox="0 0 11 11"><path d="M1.5 9.5V4.6L5.5 0.9 9.5 4.6V9.5Z" fill="#f4f4f4" stroke="#111" stroke-width="1.2"/></svg>
<div class="btn" style="left:403px;top:200px;width:90px;height:15px;letter-spacing:-0.38px;line-height:14px">Use Sample Size</div>
<svg class="abs" style="left:510px;top:197px" width="78" height="78" viewBox="0 0 78 78"><rect x=".5" y=".5" width="77" height="77" fill="#fff" stroke="#111" stroke-dasharray="1 1" shape-rendering="crispEdges"/><circle cx="38.5" cy="38.5" r="25" fill="none" stroke="#000" stroke-width="1.3"/><path d="M5 38.5H74M38.5 5V72M68 33.5l6 5-6 5" fill="none" stroke="#000" stroke-width="1.3"/><circle cx="38.5" cy="13.5" r="1.5"/><circle cx="38.5" cy="63.5" r="1.5"/></svg>
<div class="lbl  r" style="top:236px;left:330px;width:120px;letter-spacing:-0.43px;">Angle:</div>
<div class="inp" style="left:455px;top:233px;width:37px;height:15px">0°</div>
<div class="lbl  r" style="top:260px;left:330px;width:120px;letter-spacing:-0.44px;">Roundness:</div>
<div class="inp" style="left:455px;top:257px;width:37px;height:15px">100%</div>
<div class="lbl g" style="top:280px;left:400px;letter-spacing:-0.35px;">Hardness</div>
<div class="dis" style="left:564px;top:278px;width:49px;height:16px"></div>
<div class="dtrk" style="left:402px;top:297px;width:210px"></div>
<div class="cb" style="left:401px;top:315px"><svg width="9" height="9" viewBox="0 0 9 9" style="position:absolute;left:0;top:0"><path d="M1.5 4l2 2.2L7.5 1.8" fill="none" stroke="#21a121" stroke-width="1.8"/></svg></div>
<div class="lbl " style="top:316px;left:414px;letter-spacing:-0.52px;">Spacing</div>
<div class="inp" style="left:564px;top:314px;width:49px;height:15px">2%</div>
<div class="trk" style="left:402px;top:333px;width:210px"></div>
<svg class="thumb" style="left:396px;top:333px" width="11" height="11" viewBox="0 0 11 11"><path d="M1.5 9.5V4.6L5.5 0.9 9.5 4.6V9.5Z" fill="#f4f4f4" stroke="#111" stroke-width="1.2"/></svg>
<div class="panel" style="left:9px;top:192px;width:227px;height:282px"></div>
<div class="lbl " style="top:199px;left:17px;letter-spacing:0.12px;">Size Jitter</div>
<div class="inp" style="left:181px;top:198px;width:49px;height:15px">0%</div>
<div class="trk" style="left:19px;top:217px;width:210px"></div>
<svg class="thumb" style="left:13px;top:217px" width="11" height="11" viewBox="0 0 11 11"><path d="M1.5 9.5V4.6L5.5 0.9 9.5 4.6V9.5Z" fill="#f4f4f4" stroke="#111" stroke-width="1.2"/></svg>
<div class="lbl  r" style="top:236px;left:-51px;width:120px;letter-spacing:-0.0px;">Control:</div>
<div class="sel" style="left:74px;top:233px;width:102px;height:15px;letter-spacing:-0.05px;">Pen Pressure<i><svg width="11" height="8" viewBox="0 0 11 8"><path d="M1.2 1.4L5.5 5.7 9.8 1.4" fill="none" stroke="#222" stroke-width="2.3"/></svg></i></div>
<div class="dis" style="left:181px;top:233px;width:49px;height:15px"></div>
<div class="lbl " style="top:254px;left:17px;letter-spacing:-0.24px;">Minimum Diameter</div>
<div class="inp" style="left:181px;top:253px;width:49px;height:15px">50%</div>
<div class="trk" style="left:19px;top:272px;width:210px"></div>
<svg class="thumb" style="left:116px;top:272px" width="11" height="11" viewBox="0 0 11 11"><path d="M1.5 9.5V4.6L5.5 0.9 9.5 4.6V9.5Z" fill="#f4f4f4" stroke="#111" stroke-width="1.2"/></svg>
<div class="lbl g" style="top:289px;left:17px;letter-spacing:-0.14px;">Tilt Scale</div>
<div class="dis" style="left:181px;top:288px;width:49px;height:15px"></div>
<div class="dtrk" style="left:19px;top:307px;width:210px"></div>
<div class="sep" style="left:17px;top:322px;width:213px"></div>
<div class="lbl " style="top:330px;left:17px;letter-spacing:-0.04px;">Angle Jitter</div>
<div class="inp" style="left:181px;top:329px;width:49px;height:15px">0%</div>
<div class="trk" style="left:19px;top:348px;width:210px"></div>
<svg class="thumb" style="left:13px;top:348px" width="11" height="11" viewBox="0 0 11 11"><path d="M1.5 9.5V4.6L5.5 0.9 9.5 4.6V9.5Z" fill="#f4f4f4" stroke="#111" stroke-width="1.2"/></svg>
<div class="lbl  r" style="top:367px;left:-51px;width:120px;letter-spacing:-0.0px;">Control:</div>
<div class="sel" style="left:74px;top:364px;width:102px;height:15px;letter-spacing:0.95px;">Off<i><svg width="11" height="8" viewBox="0 0 11 8"><path d="M1.2 1.4L5.5 5.7 9.8 1.4" fill="none" stroke="#222" stroke-width="2.3"/></svg></i></div>
<div class="dis" style="left:181px;top:364px;width:49px;height:15px"></div>
<div class="sep" style="left:17px;top:383px;width:213px"></div>
<div class="lbl " style="top:390px;left:17px;letter-spacing:-0.13px;">Roundness Jitter</div>
<div class="inp" style="left:181px;top:390px;width:49px;height:15px">0%</div>
<div class="trk" style="left:19px;top:409px;width:210px"></div>
<svg class="thumb" style="left:13px;top:409px" width="11" height="11" viewBox="0 0 11 11"><path d="M1.5 9.5V4.6L5.5 0.9 9.5 4.6V9.5Z" fill="#f4f4f4" stroke="#111" stroke-width="1.2"/></svg>
<div class="lbl  r" style="top:428px;left:-50px;width:120px;letter-spacing:-0.0px;">Control:</div>
<div class="sel" style="left:74px;top:425px;width:102px;height:15px;letter-spacing:0.95px;">Off<i><svg width="11" height="8" viewBox="0 0 11 8"><path d="M1.2 1.4L5.5 5.7 9.8 1.4" fill="none" stroke="#222" stroke-width="2.3"/></svg></i></div>
<div class="dis" style="left:181px;top:425px;width:49px;height:15px"></div>
<div class="lbl g" style="top:445px;left:17px;letter-spacing:-0.43px;">Minimum Roundness</div>
<div class="dis" style="left:181px;top:445px;width:49px;height:15px"></div>
<div class="dtrk" style="left:19px;top:463px;width:210px"></div>
<div class="panel" style="left:9px;top:496px;width:227px;height:121px"></div>
<div class="lbl " style="top:503px;left:17px;letter-spacing:0.26px;">Opacity Jitter</div>
<div class="inp" style="left:181px;top:502px;width:49px;height:15px">0%</div>
<div class="trk" style="left:19px;top:521px;width:210px"></div>
<svg class="thumb" style="left:13px;top:521px" width="11" height="11" viewBox="0 0 11 11"><path d="M1.5 9.5V4.6L5.5 0.9 9.5 4.6V9.5Z" fill="#f4f4f4" stroke="#111" stroke-width="1.2"/></svg>
<div class="lbl  r" style="top:540px;left:-51px;width:120px;letter-spacing:-0.0px;">Control:</div>
<div class="sel" style="left:74px;top:537px;width:102px;height:15px;letter-spacing:0.95px;">Off<i><svg width="11" height="8" viewBox="0 0 11 8"><path d="M1.2 1.4L5.5 5.7 9.8 1.4" fill="none" stroke="#222" stroke-width="2.3"/></svg></i></div>
<div class="dis" style="left:181px;top:537px;width:49px;height:15px"></div>
<div class="sep" style="left:17px;top:556px;width:213px"></div>
<div class="lbl " style="top:564px;left:17px;letter-spacing:0.12px;">Flow Jitter</div>
<div class="inp" style="left:181px;top:563px;width:49px;height:15px">76%</div>
<div class="trk" style="left:19px;top:582px;width:210px"></div>
<svg class="thumb" style="left:172px;top:582px" width="11" height="11" viewBox="0 0 11 11"><path d="M1.5 9.5V4.6L5.5 0.9 9.5 4.6V9.5Z" fill="#f4f4f4" stroke="#111" stroke-width="1.2"/></svg>
<div class="lbl  r" style="top:601px;left:-51px;width:120px;letter-spacing:-0.0px;">Control:</div>
<div class="sel" style="left:74px;top:598px;width:102px;height:15px;letter-spacing:-0.05px;">Pen Pressure<i><svg width="11" height="8" viewBox="0 0 11 8"><path d="M1.2 1.4L5.5 5.7 9.8 1.4" fill="none" stroke="#222" stroke-width="2.3"/></svg></i></div>
<div class="dis" style="left:181px;top:598px;width:49px;height:15px"></div>
<div class="panel" style="left:256px;top:408px;width:225px;height:157px"></div>
<div class="lbl " style="top:414px;left:264px;letter-spacing:0.23px;">Scatter</div>
<div class="cb" style="left:333px;top:414px"></div>
<div class="lbl " style="top:415px;left:346px;letter-spacing:-0.11px;">Both Axes</div>
<div class="inp" style="left:428px;top:412px;width:49px;height:15px">0%</div>
<div class="trk" style="left:265px;top:432px;width:211px"></div>
<svg class="thumb" style="left:259px;top:432px" width="11" height="11" viewBox="0 0 11 11"><path d="M1.5 9.5V4.6L5.5 0.9 9.5 4.6V9.5Z" fill="#f4f4f4" stroke="#111" stroke-width="1.2"/></svg>
<div class="lbl  r" style="top:451px;left:196px;width:120px;letter-spacing:-0.0px;">Control:</div>
<div class="sel" style="left:321px;top:448px;width:103px;height:15px;letter-spacing:0.95px;">Off<i><svg width="11" height="8" viewBox="0 0 11 8"><path d="M1.2 1.4L5.5 5.7 9.8 1.4" fill="none" stroke="#222" stroke-width="2.3"/></svg></i></div>
<div class="dis" style="left:428px;top:448px;width:49px;height:15px"></div>
<div class="sep" style="left:263px;top:468px;width:214px"></div>
<div class="lbl " style="top:475px;left:264px;letter-spacing:-0.54px;">Count</div>
<div class="inp" style="left:428px;top:474px;width:49px;height:15px">1</div>
<div class="trk" style="left:265px;top:493px;width:211px"></div>
<svg class="thumb" style="left:259px;top:493px" width="11" height="11" viewBox="0 0 11 11"><path d="M1.5 9.5V4.6L5.5 0.9 9.5 4.6V9.5Z" fill="#f4f4f4" stroke="#111" stroke-width="1.2"/></svg>
<div class="lbl " style="top:510px;left:264px;letter-spacing:0.1px;">Count Jitter</div>
<div class="inp" style="left:428px;top:509px;width:49px;height:15px">60%</div>
<div class="trk" style="left:265px;top:528px;width:211px"></div>
<svg class="thumb" style="left:387px;top:528px" width="11" height="11" viewBox="0 0 11 11"><path d="M1.5 9.5V4.6L5.5 0.9 9.5 4.6V9.5Z" fill="#f4f4f4" stroke="#111" stroke-width="1.2"/></svg>
<div class="lbl  r" style="top:547px;left:196px;width:120px;letter-spacing:-0.0px;">Control:</div>
<div class="sel" style="left:321px;top:544px;width:103px;height:15px;letter-spacing:0.95px;">Off<i><svg width="11" height="8" viewBox="0 0 11 8"><path d="M1.2 1.4L5.5 5.7 9.8 1.4" fill="none" stroke="#222" stroke-width="2.3"/></svg></i></div>
<div class="dis" style="left:428px;top:544px;width:49px;height:15px"></div>
<div class="panel" style="left:499px;top:359px;width:227px;height:310px"></div>
<div class="lbl " style="top:368px;left:503px;letter-spacing:-0.4px;">Mode:</div>
<div class="sel" style="left:535px;top:364px;width:87px;height:16px;letter-spacing:-0.2px;">Multiply<i><svg width="11" height="8" viewBox="0 0 11 8"><path d="M1.2 1.4L5.5 5.7 9.8 1.4" fill="none" stroke="#222" stroke-width="2.3"/></svg></i></div>
<div class="sep" style="left:506px;top:384px;width:214px"></div>
<div class="grid gd" style="left:510px;top:391px;width:209px;height:131px">
<div class="cell" style="left:1px;top:-14px;height:31px"><svg width="31" height="31" viewBox="0 0 31 31"><path d="M8.5 19.5l2-5" stroke="#222" stroke-width="1.3"/></svg><b>112</b></div>
<div class="cell" style="left:33px;top:-14px;height:31px"><svg width="31" height="31" viewBox="0 0 31 31"><path d="M12 19.5l1.5-5" stroke="#111" stroke-width="2"/></svg><b>134</b></div>
<div class="cell" style="left:65px;top:-14px;height:31px"><svg width="31" height="31" viewBox="0 0 31 31"><path d="M18 19.5l2-5" stroke="#555" stroke-width="1"/></svg><b>74</b></div>
<div class="cell" style="left:97px;top:-14px;height:31px"><svg width="31" height="31" viewBox="0 0 31 31"><ellipse cx="15" cy="15" rx="7" ry="3.5" fill="#b5b5b5"/></svg><b>95</b></div>
<div class="cell" style="left:129px;top:-14px;height:31px"><svg width="31" height="31" viewBox="0 0 31 31"><path d="M10 14.5l2.5 4.5 2.5-2.5 2.5 2.5 2.5-4.5" fill="none" stroke="#222" stroke-width="1.3"/></svg><b>29</b></div>
<div class="cell" style="left:161px;top:-14px;height:31px"><b>192</b></div>
<div class="cell" style="left:1px;top:18px;height:31px"><svg width="31" height="31" viewBox="0 0 31 31"><path d="M23.0 10.3L25.1 14.6L22.1 17.7L17.9 17.8L14.9 15.8L11.9 15.7L9.3 13.6L8.1 10.3L8.0 6.4L11.3 4.2L14.9 4.4L17.6 4.3L20.1 5.4L21.1 8.0Z" fill="#0a0a0a" filter="url(#rg1)"/></svg><b>36</b></div>
<div class="cell" style="left:33px;top:18px;height:31px"><svg width="31" height="31" viewBox="0 0 31 31"><path d="M26.0 10.3L23.0 13.6L20.6 15.8L18.3 19.7L15.0 15.7L13.1 14.2L9.7 13.4L8.7 10.3L6.6 5.7L11.3 4.2L14.1 1.1L17.5 4.5L20.1 5.3L23.5 6.8Z" fill="#0a0a0a" filter="url(#rg2)"/></svg><b>33</b></div>
<div class="cell" style="left:65px;top:18px;height:31px"><svg width="31" height="31" viewBox="0 0 31 31"><path d="M25.9 10.3L26.1 15.0L22.8 18.6L17.6 16.5L14.7 16.9L12.6 14.9L10.0 13.3L9.5 10.3L9.2 6.9L10.8 3.5L14.7 3.7L17.6 4.1L19.1 6.6L21.1 7.9Z" fill="#0a0a0a" filter="url(#rg3)"/></svg><b>63</b></div>
<div class="cell" style="left:97px;top:18px;height:31px"><svg width="31" height="31" viewBox="0 0 31 31"><circle cx="15" cy="10.5" r="9.3" fill="#666" filter="url(#sp1)"/></svg><b>66</b></div>
<div class="cell" style="left:129px;top:18px;height:31px"><svg width="31" height="31" viewBox="0 0 31 31"><circle cx="15" cy="10.5" r="8" fill="#444" filter="url(#sp2)"/></svg><b>39</b></div>
<div class="cell" style="left:161px;top:18px;height:31px"><svg width="31" height="31" viewBox="0 0 31 31"><path d="M25.2 10.3L23.2 13.7L21.0 16.3L18.0 18.3L15.0 15.4L11.9 15.6L9.4 13.6L9.8 10.3L7.3 6.0L10.6 3.3L14.4 2.2L18.0 2.6L20.8 4.5L22.0 7.5Z" fill="#0a0a0a" filter="url(#rg3)"/></svg><b>63</b></div>
<div class="cell" style="left:1px;top:50px;height:31px"><svg width="31" height="31" viewBox="0 0 31 31"><ellipse cx="15" cy="10.5" rx="3.2" ry=".9" fill="#222" transform="rotate(-20 15 10.5)"/></svg><b>11</b></div>
<div class="cell" style="left:33px;top:50px;height:31px"><svg width="31" height="31" viewBox="0 0 31 31"><path d="M24.8 10.3L25.1 14.6L23.0 18.8L17.7 16.9L15.0 15.4L11.9 15.7L10.6 13.0L8.6 10.3L6.8 5.8L11.4 4.3L14.1 1.2L17.6 4.0L19.2 6.5L23.4 6.8Z" fill="#0a0a0a" filter="url(#rg1)"/></svg><b>48</b></div>
<div class="cell" style="left:65px;top:50px;height:31px"><svg width="31" height="31" viewBox="0 0 31 31"><path d="M22.8 10.3L23.0 13.6L22.0 17.6L17.7 16.8L15.0 15.6L12.5 15.0L10.4 13.1L9.2 10.3L8.4 6.6L9.7 2.2L14.8 4.0L17.4 4.9L19.2 6.6L21.5 7.7Z" fill="#0a0a0a" filter="url(#rg2)"/></svg><b>32</b></div>
<div class="cell" style="left:97px;top:50px;height:31px"><svg width="31" height="31" viewBox="0 0 31 31"><circle cx="15" cy="10.5" r="7.8" fill="#000"/></svg><b>55</b></div>
<div class="cell s" style="left:129px;top:50px;height:31px"><svg width="31" height="31" viewBox="0 0 31 31"><circle cx="15" cy="10.5" r="9.3" fill="#c44" filter="url(#sp3)"/></svg><b>100</b></div>
<div class="cell" style="left:161px;top:50px;height:31px"><svg width="31" height="31" viewBox="0 0 31 31"><circle cx="15" cy="11" r="7" fill="url(#sg)" opacity="1"/></svg><b>75</b></div>
<div class="cell" style="left:1px;top:82px;height:31px"><svg width="31" height="31" viewBox="0 0 31 31"><ellipse cx="15" cy="11" rx="0.7" ry="0.7" fill="#000"/></svg><b>2</b></div>
<div class="cell" style="left:33px;top:82px;height:31px"><svg width="31" height="31" viewBox="0 0 31 31"><ellipse cx="15" cy="11" rx="1.3" ry="8" fill="#000"/></svg><b>60</b></div>
<div class="cell" style="left:65px;top:82px;height:31px"><svg width="31" height="31" viewBox="0 0 31 31"><ellipse cx="15" cy="11" rx="3" ry="3" fill="#000"/></svg><b>10</b></div>
<div class="cell" style="left:97px;top:82px;height:31px"><svg width="31" height="31" viewBox="0 0 31 31"><ellipse cx="15" cy="11" rx="2" ry="1.3" fill="#000"/></svg><b>6</b></div>
<div class="cell" style="left:129px;top:82px;height:31px"><svg width="31" height="31" viewBox="0 0 31 31"><ellipse cx="15" cy="11" rx="0.5" ry="0.5" fill="#000"/></svg><b>1</b></div>
<div class="cell" style="left:161px;top:82px;height:31px"><svg width="31" height="31" viewBox="0 0 31 31"><ellipse cx="15" cy="11" rx="0.7" ry="0.7" fill="#000"/></svg><b>3</b></div>
<div class="cell" style="left:1px;top:114px;height:31px"><svg width="31" height="31" viewBox="0 0 31 31"><circle cx="15" cy="9" r="9" fill="url(#sg)" opacity="1"/><circle cx="15" cy="9" r="5" fill="#000"/></svg></div>
<div class="cell" style="left:33px;top:114px;height:31px"><svg width="31" height="31" viewBox="0 0 31 31"><circle cx="15" cy="9" r="6" fill="url(#sg)" opacity="1"/><circle cx="15" cy="9" r="3.5" fill="#000"/></svg></div>
<div class="cell" style="left:65px;top:114px;height:31px"><svg width="31" height="31" viewBox="0 0 31 31"><ellipse cx="15" cy="9" rx="7" ry="1.8" fill="#000"/></svg></div>
<div class="cell" style="left:97px;top:114px;height:31px"><svg width="31" height="31" viewBox="0 0 31 31"><path d="M22.5 8.8L22.9 12.0L21.5 15.4L18.1 17.1L15.0 14.1L13.1 12.7L10.9 11.4L7.2 8.8L9.4 5.5L10.0 1.0L14.3 0.6L17.4 3.5L20.0 4.0L22.1 5.9Z" fill="#0a0a0a" filter="url(#rg2)"/></svg></div>
<div class="cell" style="left:129px;top:114px;height:31px"><svg width="31" height="31" viewBox="0 0 31 31"><ellipse cx="15" cy="9" rx="1.2" ry="1.2" fill="#000"/></svg></div>
<div class="cell" style="left:161px;top:114px;height:31px"><svg width="31" height="31" viewBox="0 0 31 31"><ellipse cx="15" cy="9" rx="2.5" ry="1.5" fill="#000"/></svg></div>
</div>
<div class="abs" style="left:702px;top:392px;width:16px;height:129px;background:#f3f3f7;border-left:1px solid #111"></div>
<div class="abs" style="left:704px;top:394px;width:13px;height:14px;background:linear-gradient(135deg,#f6f6fa,#cfcfdc);border:1px solid #a9a9bb;border-top-color:#fff;border-left-color:#fff;box-shadow:0 0 0 1px #b4b4c2"><svg width="10" height="8" viewBox="0 0 10 8" style="position:absolute;left:.5px;top:2px"><path d="M1.2 5.8L5 2 8.8 5.8" fill="none" stroke="#222" stroke-width="2.2"/></svg></div>
<div class="abs" style="left:704px;top:505px;width:13px;height:14px;background:linear-gradient(135deg,#f6f6fa,#cfcfdc);border:1px solid #a9a9bb;border-top-color:#fff;border-left-color:#fff;box-shadow:0 0 0 1px #b4b4c2"><svg width="10" height="8" viewBox="0 0 10 8" style="position:absolute;left:.5px;top:2px"><path d="M1.2 1.6L5 5.4 8.8 1.6" fill="none" stroke="#222" stroke-width="2.2"/></svg></div>
<div class="abs" style="left:704px;top:438px;width:13px;height:13px;background:linear-gradient(135deg,#fafafd,#d6d6e2);border:1px solid #a9a9bb;box-shadow:0 0 0 1px #c4c4d0"></div>
<div class="abs" style="left:510px;top:391px;width:209px;height:131px;border:1px solid #111;border-top-width:2px"></div>
<div class="lbl " style="top:531px;left:508px;letter-spacing:-0.15px;">Diameter</div>
<div class="btn" style="left:577px;top:529px;width:90px;height:15px;letter-spacing:-0.38px;line-height:14px">Use Sample Size</div>
<div class="inp" style="left:672px;top:530px;width:49px;height:15px">100 px</div>
<div class="trk" style="left:510px;top:550px;width:211px"></div>
<svg class="thumb" style="left:607px;top:550px" width="11" height="11" viewBox="0 0 11 11"><path d="M1.5 9.5V4.6L5.5 0.9 9.5 4.6V9.5Z" fill="#f4f4f4" stroke="#111" stroke-width="1.2"/></svg>
<div class="lbl " style="top:567px;left:508px;letter-spacing:-0.52px;">Spacing</div>
<div class="inp" style="left:672px;top:566px;width:49px;height:15px">2%</div>
<div class="trk" style="left:510px;top:585px;width:211px"></div>
<svg class="thumb" style="left:504px;top:585px" width="11" height="11" viewBox="0 0 11 11"><path d="M1.5 9.5V4.6L5.5 0.9 9.5 4.6V9.5Z" fill="#f4f4f4" stroke="#111" stroke-width="1.2"/></svg>
<div class="lbl " style="top:602px;left:508px;letter-spacing:0.23px;">Scatter</div>
<div class="cb" style="left:577px;top:602px"><svg width="9" height="9" viewBox="0 0 9 9" style="position:absolute;left:0;top:0"><path d="M1.5 4l2 2.2L7.5 1.8" fill="none" stroke="#21a121" stroke-width="1.8"/></svg></div>
<div class="lbl " style="top:603px;left:590px;letter-spacing:-0.11px;">Both Axes</div>
<div class="inp" style="left:672px;top:601px;width:49px;height:15px">0%</div>
<div class="trk" style="left:510px;top:620px;width:211px"></div>
<svg class="thumb" style="left:504px;top:620px" width="11" height="11" viewBox="0 0 11 11"><path d="M1.5 9.5V4.6L5.5 0.9 9.5 4.6V9.5Z" fill="#f4f4f4" stroke="#111" stroke-width="1.2"/></svg>
<div class="lbl " style="top:637px;left:508px;letter-spacing:-0.54px;">Count</div>
<div class="inp" style="left:672px;top:636px;width:49px;height:15px">1</div>
<div class="trk" style="left:510px;top:655px;width:211px"></div>
<svg class="thumb" style="left:504px;top:655px" width="11" height="11" viewBox="0 0 11 11"><path d="M1.5 9.5V4.6L5.5 0.9 9.5 4.6V9.5Z" fill="#f4f4f4" stroke="#111" stroke-width="1.2"/></svg>
</div></body></html>
